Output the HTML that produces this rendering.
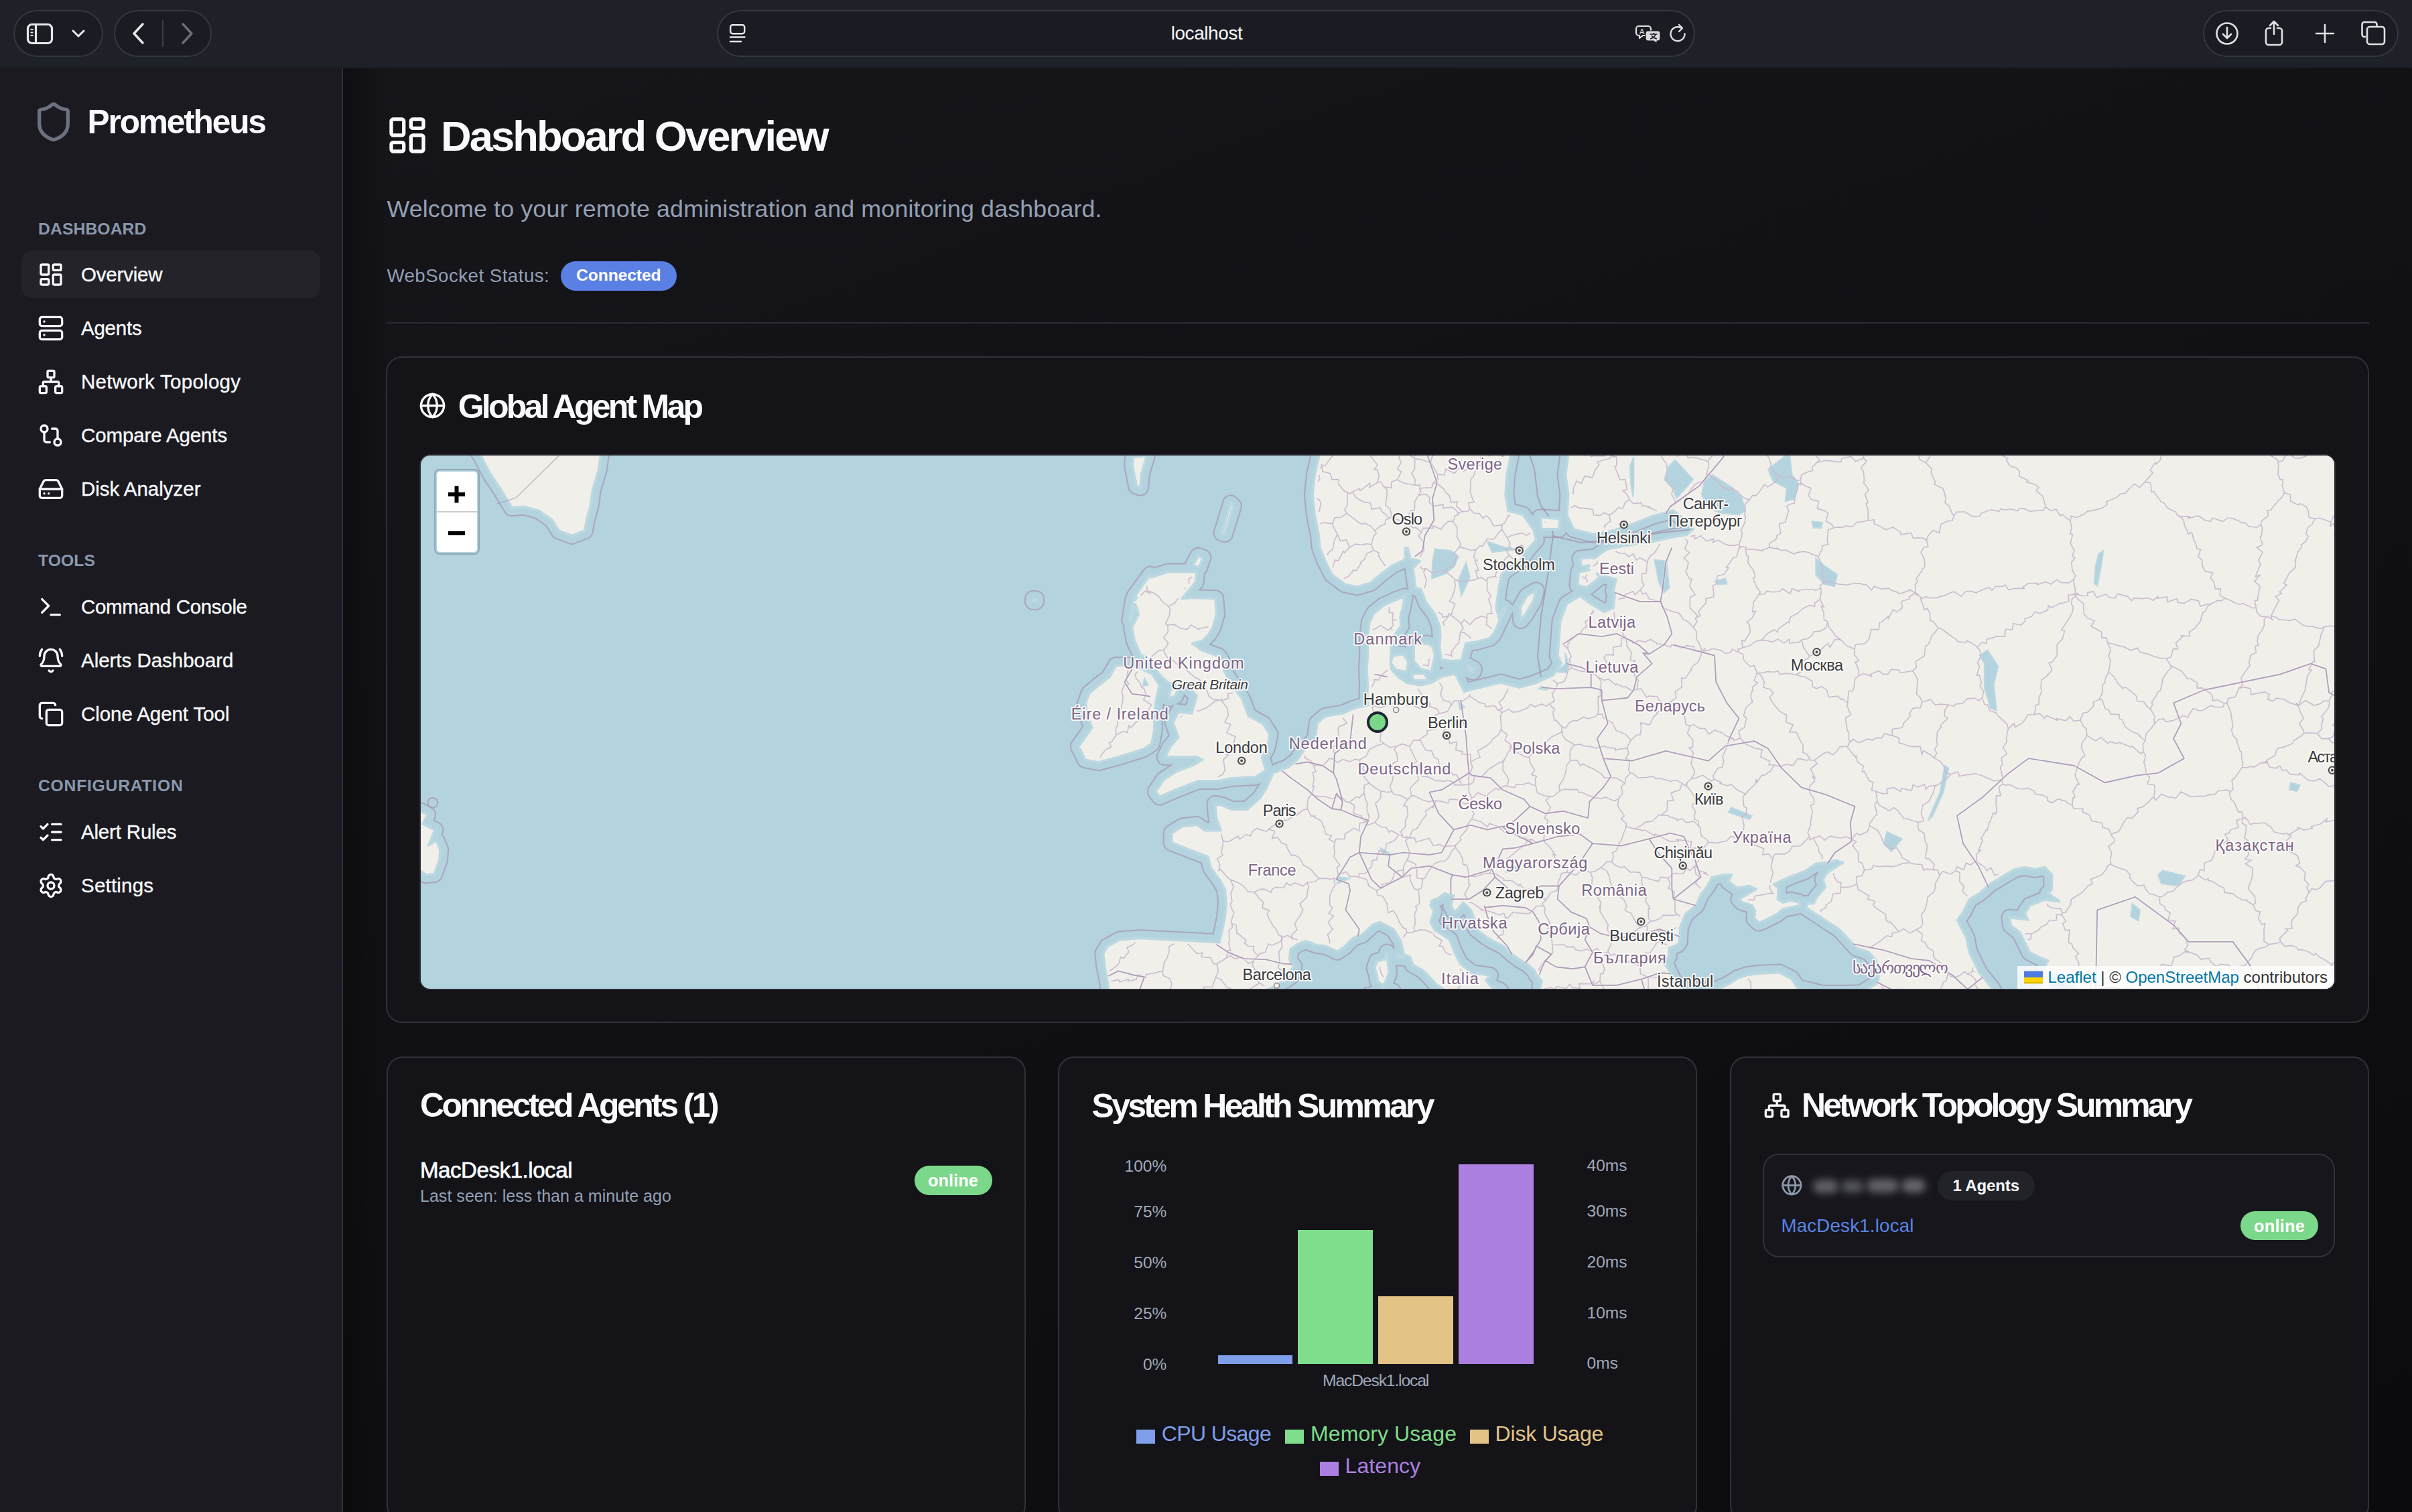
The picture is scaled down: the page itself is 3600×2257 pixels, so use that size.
<!DOCTYPE html>
<html><head><meta charset="utf-8"><title>Prometheus Dashboard</title>
<style>
html,body{margin:0;padding:0;width:3600px;height:2257px;overflow:hidden;background:#0e0e11}
body{position:relative;font-family:"Liberation Sans",sans-serif}
.r,.t,.i{position:absolute}
.t{white-space:nowrap}
</style></head><body>
<div class="r" style="left:0;top:0;width:3600px;height:101px;background:#1f2129"></div>
<div class="r" style="left:20px;top:15px;width:134px;height:70px;border-radius:35.0px;background:#1b1c23;box-shadow:inset 0 0 0 2px #343744"></div>
<div class="r" style="left:170px;top:15px;width:146px;height:70px;border-radius:35.0px;background:#1b1c23;box-shadow:inset 0 0 0 2px #343744"></div>
<div class="r" style="left:1070px;top:15px;width:1460px;height:70px;border-radius:35.0px;background:#1b1c23;box-shadow:inset 0 0 0 2px #343744"></div>
<div class="r" style="left:3288px;top:15px;width:292px;height:70px;border-radius:35.0px;background:#1b1c23;box-shadow:inset 0 0 0 2px #343744"></div>
<svg class="i" style="left:36px;top:31px;width:46px;height:38px" viewBox="0 0 46 38" fill="none" stroke="#e8e8ea" stroke-width="3.2"><rect x="5.5" y="5.5" width="36" height="28" rx="6"/><path d="M17.5 5.5v28"/><path d="M9.5 13h4M9.5 17.5h4M9.5 22h4" stroke-width="2.2"/></svg>
<svg class="i" style="left:104px;top:40px;width:26px;height:20px" viewBox="0 0 26 20" fill="none" stroke="#e8e8ea" stroke-width="3" stroke-linecap="round" stroke-linejoin="round"><path d="M5 6l8 8 8-8"/></svg>
<svg class="i" style="left:193px;top:30px;width:28px;height:40px" viewBox="0 0 28 40" fill="none" stroke="#e8e8ea" stroke-width="3.4" stroke-linecap="round" stroke-linejoin="round"><path d="M20 6L7 20l13 14"/></svg>
<div class="r" style="left:242px;top:30px;width:2px;height:40px;background:#3a3c47"></div>
<svg class="i" style="left:265px;top:30px;width:28px;height:40px" viewBox="0 0 28 40" fill="none" stroke="#6e6f75" stroke-width="3.4" stroke-linecap="round" stroke-linejoin="round"><path d="M8 6l13 14L8 34"/></svg>
<svg class="i" style="left:1086px;top:34px;width:30px;height:32px" viewBox="0 0 30 32" fill="none" stroke="#e8e8ea" stroke-width="2.4" stroke-linecap="round"><rect x="4.2" y="3.2" width="21" height="13" rx="3.2"/><path d="M4 21.5h21.5M4 28h16"/></svg>
<div class="t" style="left:1747.7px;top:36.3px;font-size:28px;line-height:28px;letter-spacing:-0.43px;color:#f5f5f7;font-weight:400;">localhost</div>
<svg class="i" style="left:2438px;top:34px;width:44px;height:34px" viewBox="0 0 44 34" fill="none" stroke="#e0e0e2" stroke-width="2.2" stroke-linejoin="round"><path d="M8 5h14a4 4 0 0 1 4 4v6a4 4 0 0 1-4 4h-8l-5 4v-4H8a4 4 0 0 1-4-4V9a4 4 0 0 1 4-4z"/><text x="9" y="17" font-family="Liberation Sans" font-size="11" fill="#e0e0e2" stroke="none">A</text><path d="M22 12h14a4 4 0 0 1 4 4v7a4 4 0 0 1-4 4h-1v4l-5-4h-8a4 4 0 0 1-4-4v-7a4 4 0 0 1 4-4z" fill="#dcdcde" stroke="#1b1c23" stroke-width="1.2"/><path d="M24.5 17h11M30 15v2M33 17c-1 4-4 6-8 7M27 19c1.5 2.5 4 4 8 5" stroke="#1b1c23" stroke-width="1.6" fill="none"/></svg>
<svg class="i" style="left:2488px;top:34px;width:32px;height:32px" viewBox="0 0 32 32" fill="none" stroke="#e0e0e2" stroke-width="2.4" stroke-linecap="round" stroke-linejoin="round"><path d="M26.5 16.5A10.5 10.5 0 1 1 21 7.5"/><path d="M18 3l5 5-5 5"/></svg>
<svg class="i" style="left:3304px;top:30px;width:40px;height:40px" viewBox="0 0 40 40" fill="none" stroke="#e0e0e2" stroke-width="2.6" stroke-linecap="round" stroke-linejoin="round"><circle cx="20" cy="20" r="15.5"/><path d="M20 11v16M14 21l6 6 6-6"/></svg>
<svg class="i" style="left:3374px;top:27px;width:40px;height:44px" viewBox="0 0 40 44" fill="none" stroke="#e0e0e2" stroke-width="2.6" stroke-linecap="round" stroke-linejoin="round"><path d="M20 5v19M14 11l6-6 6 6"/><path d="M15 15h-3a4 4 0 0 0-4 4v17a4 4 0 0 0 4 4h16a4 4 0 0 0 4-4V19a4 4 0 0 0-4-4h-3"/></svg>
<svg class="i" style="left:3452px;top:32px;width:36px;height:36px" viewBox="0 0 36 36" fill="none" stroke="#e0e0e2" stroke-width="2.6" stroke-linecap="round"><path d="M18 5v26M5 18h26"/></svg>
<svg class="i" style="left:3520px;top:28px;width:44px;height:44px" viewBox="0 0 44 44" fill="none" stroke="#e0e0e2" stroke-width="2.6" stroke-linejoin="round"><path d="M11 27h-2a3.5 3.5 0 0 1-3.5-3.5V8.5A3.5 3.5 0 0 1 9 5h15a3.5 3.5 0 0 1 3.5 3.5V11"/><rect x="13" y="12" width="26" height="26" rx="4"/></svg>
<div class="r" style="left:0;top:101px;width:510px;height:2156px;background:#1b1a20"></div>
<div class="r" style="left:510px;top:101px;width:2px;height:2156px;background:#33333b"></div>
<svg class="i" style="left:48px;top:150px;width:64px;height:64px;" viewBox="0 0 24 24" fill="none" stroke="#6b717e" stroke-width="2.0" stroke-linecap="round" stroke-linejoin="round"><path d="M20 13c0 5-3.5 7.5-7.66 8.95a1 1 0 0 1-.67-.01C7.5 20.5 4 18 4 13V6a1 1 0 0 1 1-1c2 0 4.5-1.2 6.24-2.72a1.17 1.17 0 0 1 1.52 0C14.51 3.81 17 5 19 5a1 1 0 0 1 1 1z"/></svg>
<div class="t" style="left:130.6px;top:158.0px;font-size:49.7px;line-height:49.7px;letter-spacing:-2.20px;color:#f8fafc;font-weight:700;">Prometheus</div>
<div class="r" style="left:32px;top:374px;width:446px;height:71px;border-radius:16px;background:#232329"></div>
<div class="t" style="left:57.0px;top:329.7px;font-size:24.7px;line-height:24.7px;letter-spacing:0.11px;color:#8a98ad;font-weight:700;">DASHBOARD</div>
<svg class="i" style="left:56px;top:390px;width:40px;height:40px;" viewBox="0 0 24 24" fill="none" stroke="#f8fafc" stroke-width="2" stroke-linecap="round" stroke-linejoin="round"><rect width="7" height="9" x="3" y="3" rx="1"/><rect width="7" height="5" x="14" y="3" rx="1"/><rect width="7" height="9" x="14" y="12" rx="1"/><rect width="7" height="5" x="3" y="16" rx="1"/></svg>
<div class="t" style="left:121.0px;top:395.0px;font-size:29.5px;line-height:29.5px;letter-spacing:-0.19px;color:#f8fafc;font-weight:400;-webkit-text-stroke:0.35px #f8fafc">Overview</div>
<svg class="i" style="left:56px;top:470px;width:40px;height:40px;" viewBox="0 0 24 24" fill="none" stroke="#f8fafc" stroke-width="2" stroke-linecap="round" stroke-linejoin="round"><rect width="20" height="8" x="2" y="2" rx="2" ry="2"/><rect width="20" height="8" x="2" y="14" rx="2" ry="2"/><line x1="6" x2="6.01" y1="6" y2="6"/><line x1="6" x2="6.01" y1="18" y2="18"/></svg>
<div class="t" style="left:121.0px;top:475.0px;font-size:29.5px;line-height:29.5px;letter-spacing:-0.24px;color:#f8fafc;font-weight:400;-webkit-text-stroke:0.35px #f8fafc">Agents</div>
<svg class="i" style="left:56px;top:550px;width:40px;height:40px;" viewBox="0 0 24 24" fill="none" stroke="#f8fafc" stroke-width="2" stroke-linecap="round" stroke-linejoin="round"><rect x="16" y="16" width="6" height="6" rx="1"/><rect x="2" y="16" width="6" height="6" rx="1"/><rect x="9" y="2" width="6" height="6" rx="1"/><path d="M5 16v-3a1 1 0 0 1 1-1h12a1 1 0 0 1 1 1v3"/><path d="M12 12V8"/></svg>
<div class="t" style="left:121.0px;top:555.0px;font-size:29.5px;line-height:29.5px;letter-spacing:0.27px;color:#f8fafc;font-weight:400;-webkit-text-stroke:0.35px #f8fafc">Network Topology</div>
<svg class="i" style="left:56px;top:630px;width:40px;height:40px;" viewBox="0 0 24 24" fill="none" stroke="#f8fafc" stroke-width="2" stroke-linecap="round" stroke-linejoin="round"><circle cx="18" cy="18" r="3"/><circle cx="6" cy="6" r="3"/><path d="M13 6h3a2 2 0 0 1 2 2v7"/><path d="M11 18H8a2 2 0 0 1-2-2V9"/></svg>
<div class="t" style="left:121.0px;top:635.0px;font-size:29.5px;line-height:29.5px;letter-spacing:-0.12px;color:#f8fafc;font-weight:400;-webkit-text-stroke:0.35px #f8fafc">Compare Agents</div>
<svg class="i" style="left:56px;top:710px;width:40px;height:40px;" viewBox="0 0 24 24" fill="none" stroke="#f8fafc" stroke-width="2" stroke-linecap="round" stroke-linejoin="round"><line x1="22" x2="2" y1="12" y2="12"/><path d="M5.45 5.11 2 12v6a2 2 0 0 0 2 2h16a2 2 0 0 0 2-2v-6l-3.45-6.89A2 2 0 0 0 16.76 4H7.24a2 2 0 0 0-1.79 1.11z"/><line x1="6" x2="6.01" y1="16" y2="16"/><line x1="10" x2="10.01" y1="16" y2="16"/></svg>
<div class="t" style="left:121.0px;top:715.0px;font-size:29.5px;line-height:29.5px;letter-spacing:-0.02px;color:#f8fafc;font-weight:400;-webkit-text-stroke:0.35px #f8fafc">Disk Analyzer</div>
<svg class="i" style="left:56px;top:886px;width:40px;height:40px;" viewBox="0 0 24 24" fill="none" stroke="#f8fafc" stroke-width="2" stroke-linecap="round" stroke-linejoin="round"><path d="M12 19h8"/><path d="m4 17 6-6-6-6"/></svg>
<div class="t" style="left:121.0px;top:891.0px;font-size:29.5px;line-height:29.5px;letter-spacing:-0.32px;color:#f8fafc;font-weight:400;-webkit-text-stroke:0.35px #f8fafc">Command Console</div>
<svg class="i" style="left:56px;top:966px;width:40px;height:40px;" viewBox="0 0 24 24" fill="none" stroke="#f8fafc" stroke-width="2" stroke-linecap="round" stroke-linejoin="round"><path d="M10.268 21a2 2 0 0 0 3.464 0"/><path d="M22 8c0-2.3-.8-4.3-2-6"/><path d="M3.262 15.326A1 1 0 0 0 4 17h16a1 1 0 0 0 .74-1.673C19.41 13.956 18 12.499 18 8A6 6 0 0 0 6 8c0 4.499-1.411 5.956-2.738 7.326"/><path d="M4 2C2.8 3.7 2 5.7 2 8"/></svg>
<div class="t" style="left:121.0px;top:971.0px;font-size:29.5px;line-height:29.5px;letter-spacing:-0.03px;color:#f8fafc;font-weight:400;-webkit-text-stroke:0.35px #f8fafc">Alerts Dashboard</div>
<svg class="i" style="left:56px;top:1046px;width:40px;height:40px;" viewBox="0 0 24 24" fill="none" stroke="#f8fafc" stroke-width="2" stroke-linecap="round" stroke-linejoin="round"><rect width="14" height="14" x="8" y="8" rx="2" ry="2"/><path d="M4 16c-1.1 0-2-.9-2-2V4c0-1.1.9-2 2-2h10c1.1 0 2 .9 2 2"/></svg>
<div class="t" style="left:121.0px;top:1051.0px;font-size:29.5px;line-height:29.5px;letter-spacing:-0.07px;color:#f8fafc;font-weight:400;-webkit-text-stroke:0.35px #f8fafc">Clone Agent Tool</div>
<svg class="i" style="left:56px;top:1222px;width:40px;height:40px;" viewBox="0 0 24 24" fill="none" stroke="#f8fafc" stroke-width="2" stroke-linecap="round" stroke-linejoin="round"><path d="M13 5h8"/><path d="M13 12h8"/><path d="M13 19h8"/><path d="m3 17 2 2 4-4"/><path d="m3 7 2 2 4-4"/></svg>
<div class="t" style="left:121.0px;top:1227.0px;font-size:29.5px;line-height:29.5px;letter-spacing:-0.18px;color:#f8fafc;font-weight:400;-webkit-text-stroke:0.35px #f8fafc">Alert Rules</div>
<svg class="i" style="left:56px;top:1302px;width:40px;height:40px;" viewBox="0 0 24 24" fill="none" stroke="#f8fafc" stroke-width="2" stroke-linecap="round" stroke-linejoin="round"><path d="M9.671 4.136a2.34 2.34 0 0 1 4.659 0 2.34 2.34 0 0 0 3.319 1.915 2.34 2.34 0 0 1 2.33 4.033 2.34 2.34 0 0 0 0 3.831 2.34 2.34 0 0 1-2.33 4.033 2.34 2.34 0 0 0-3.319 1.915 2.34 2.34 0 0 1-4.659 0 2.34 2.34 0 0 0-3.32-1.915 2.34 2.34 0 0 1-2.33-4.033 2.34 2.34 0 0 0 0-3.831A2.34 2.34 0 0 1 6.35 6.051a2.34 2.34 0 0 0 3.319-1.915"/><circle cx="12" cy="12" r="3"/></svg>
<div class="t" style="left:121.0px;top:1307.0px;font-size:29.5px;line-height:29.5px;letter-spacing:0.21px;color:#f8fafc;font-weight:400;-webkit-text-stroke:0.35px #f8fafc">Settings</div>
<div class="t" style="left:57.0px;top:825.1px;font-size:24.7px;line-height:24.7px;letter-spacing:0.10px;color:#8a98ad;font-weight:700;">TOOLS</div>
<div class="t" style="left:57.0px;top:1161.3px;font-size:24.7px;line-height:24.7px;letter-spacing:0.76px;color:#8a98ad;font-weight:700;">CONFIGURATION</div>
<div class="r" style="left:512px;top:101px;width:3088px;height:2156px;background:linear-gradient(160deg,#15151a 0%,#111115 45%,#0b0b0d 100%)"></div>
<div class="r" style="left:512px;top:101px;width:70px;height:2156px;background:linear-gradient(90deg,rgba(0,0,0,0.28),rgba(0,0,0,0))"></div>
<div class="r" style="left:0;top:100px;width:3600px;height:2px;background:#1c1c1d"></div>
<svg class="i" style="left:575.7px;top:170.1px;width:64px;height:64px;" viewBox="0 0 24 24" fill="none" stroke="#f8fafc" stroke-width="2" stroke-linecap="round" stroke-linejoin="round"><rect width="7" height="9" x="3" y="3" rx="1"/><rect width="7" height="5" x="14" y="3" rx="1"/><rect width="7" height="9" x="14" y="12" rx="1"/><rect width="7" height="5" x="3" y="16" rx="1"/></svg>
<div class="t" style="left:658.0px;top:171.5px;font-size:63.2px;line-height:63.2px;letter-spacing:-2.88px;color:#f8fafc;font-weight:700;">Dashboard Overview</div>
<div class="t" style="left:577.4px;top:295.4px;font-size:35.8px;line-height:35.8px;letter-spacing:0.15px;color:#94a0b4;font-weight:400;">Welcome to your remote administration and monitoring dashboard.</div>
<div class="t" style="left:577.4px;top:398.1px;font-size:27.6px;line-height:27.6px;letter-spacing:0.51px;color:#94a0b4;font-weight:400;">WebSocket Status:</div>
<div class="r" style="left:837px;top:390px;width:173px;height:44px;border-radius:22px;background:#5a80e4"></div>
<div class="t" style="left:860.0px;top:399.1px;font-size:24.7px;line-height:24.7px;letter-spacing:-0.12px;color:#ffffff;font-weight:700;">Connected</div>
<div class="r" style="left:577px;top:481px;width:2959px;height:2px;background:#2a2b32"></div>
<div class="r" style="left:576px;top:532px;width:2960px;height:995px;border-radius:24px;background:#131318;box-shadow:inset 0 0 0 2px #30313a"></div>
<svg class="i" style="left:625.3px;top:585.3px;width:41px;height:41px;" viewBox="0 0 24 24" fill="none" stroke="#f8fafc" stroke-width="2" stroke-linecap="round" stroke-linejoin="round"><circle cx="12" cy="12" r="10"/><path d="M12 2a14.5 14.5 0 0 0 0 20 14.5 14.5 0 0 0 0-20"/><path d="M2 12h20"/></svg>
<div class="t" style="left:683.7px;top:582.1px;font-size:50.0px;line-height:50.0px;letter-spacing:-3.79px;color:#f8fafc;font-weight:700;">Global Agent Map</div>
<div class="r" style="left:626px;top:678px;width:2860px;height:800px;border-radius:16px;overflow:hidden;background:#2a2b31"><div style="position:absolute;left:2px;top:2px;width:2856px;height:796px;overflow:hidden;border-radius:14px;background:#b3d3de"><svg style="position:absolute;left:0;top:0;width:2856px;height:796px" viewBox="628 680 2856 796"><path fill="none" stroke="#a48fae" stroke-width="2" stroke-opacity="0.65" d="M1608.4 1046.6L1607.9 1048.7L1607.7 1050.9L1607.9 1053.1L1611.9 1073.0L1612.4 1074.8L1616.1 1084.7L1600.0 1107.3L1598.9 1109.2L1598.2 1111.2L1597.8 1113.3L1597.8 1115.5L1598.2 1117.6L1599.0 1119.7L1608.9 1139.5L1610.1 1141.3L1611.6 1143.0L1613.3 1144.3L1615.2 1145.3L1617.3 1145.9L1637.2 1149.9L1639.9 1150.1L1642.6 1149.7L1672.4 1141.8L1672.9 1141.6L1710.6 1129.7L1713.6 1128.2L1725.5 1120.3L1727.4 1118.8L1728.9 1117.0L1730.0 1114.9L1730.7 1112.7L1734.6 1092.8L1734.9 1090.5L1734.9 1063.7L1736.8 1051.9L1738.2 1053.0L1740.2 1054.0L1742.4 1054.6L1744.7 1054.9L1747.0 1054.6L1749.1 1054.0L1751.6 1053.0L1750.8 1053.6L1749.1 1055.3L1747.8 1057.3L1739.9 1073.2L1739.0 1075.5L1738.7 1077.9L1738.8 1080.3L1739.4 1082.7L1744.9 1097.9L1737.6 1106.5L1735.9 1108.9L1728.0 1124.8L1727.1 1127.1L1726.7 1129.5L1726.9 1131.9L1727.5 1134.3L1728.5 1136.5L1730.0 1138.4L1731.9 1140.0L1734.0 1141.2L1736.3 1141.9L1738.7 1142.2L1747.7 1142.2L1730.1 1153.9L1728.3 1155.4L1726.8 1157.2L1714.9 1175.1L1713.7 1177.3L1713.0 1179.6L1712.8 1182.1L1713.2 1184.5L1714.0 1186.8L1715.2 1188.9L1721.2 1196.9L1722.7 1198.6L1724.6 1200.0L1726.7 1201.0L1728.9 1201.5L1731.2 1201.7L1733.5 1201.4L1735.7 1200.6L1753.3 1192.8L1772.9 1185.0L1790.6 1177.9L1818.1 1177.9L1820.4 1177.6L1839.5 1173.8L1874.3 1171.9L1876.3 1171.6L1878.2 1171.0L1879.4 1170.4L1879.1 1171.0L1871.1 1183.5L1856.9 1196.1L1841.0 1196.1L1828.6 1190.8L1826.2 1190.0L1815.8 1187.9L1813.3 1187.7L1810.9 1188.0L1808.5 1188.8L1806.4 1190.0L1804.5 1191.6L1803.1 1193.6L1802.0 1195.9L1801.5 1198.3L1801.5 1200.8L1803.6 1223.8L1804.3 1226.9L1804.5 1227.4L1802.4 1227.4L1792.9 1221.1L1791.1 1220.1L1789.2 1219.4L1787.1 1219.1L1785.1 1219.1L1764.2 1221.2L1761.5 1221.8L1759.0 1223.0L1742.3 1233.4L1740.4 1234.9L1738.8 1236.7L1737.6 1238.9L1736.9 1241.2L1736.7 1243.6L1736.7 1258.2L1736.9 1260.6L1737.6 1262.9L1738.8 1265.0L1740.4 1266.9L1742.3 1268.4L1744.4 1269.4L1761.0 1275.7L1781.8 1284.0L1782.0 1284.1L1792.9 1288.1L1795.5 1298.7L1796.3 1301.0L1797.6 1303.0L1809.6 1319.1L1816.4 1330.9L1818.1 1348.0L1816.2 1367.2L1812.2 1387.2L1810.5 1394.0L1787.0 1392.5L1786.9 1392.5L1703.3 1388.3L1701.9 1388.3L1670.5 1390.4L1667.9 1390.9L1665.5 1391.9L1646.7 1402.3L1645.0 1403.5L1643.5 1405.0L1642.2 1406.6L1636.0 1417.1L1634.9 1419.5L1634.3 1422.0L1634.3 1424.6L1636.4 1443.4L1636.6 1444.4L1640.7 1464.9L1644.7 1494.9L1638.4 1688.0L412.0 1688.0L412.0 380.0L411.8 377.7L411.1 375.4L410.0 373.3L408.5 371.5L406.7 370.0L404.6 368.9L402.3 368.2L400.0 368.0L328.0 368.0L325.7 368.2L323.4 368.9L321.3 370.0L319.5 371.5L318.0 373.3L316.9 375.4L316.2 377.7L316.0 380.0L316.0 1776.0L316.2 1778.3L316.9 1780.6L318.0 1782.7L319.5 1784.5L321.3 1786.0L323.4 1787.1L325.7 1787.8L328.0 1788.0L3784.0 1788.0L3786.3 1787.8L3788.6 1787.1L3790.7 1786.0L3792.5 1784.5L3794.0 1782.7L3795.1 1780.6L3795.8 1778.3L3796.0 1776.0L3796.0 380.0L3795.8 377.7L3795.1 375.4L3794.0 373.3L3792.5 371.5L3790.7 370.0L3788.6 368.9L3786.3 368.2L3784.0 368.0L2340.5 368.0L2338.1 368.2L2335.9 368.9L2333.8 370.0L2332.0 371.5L2330.5 373.3L2329.4 375.4L2328.7 377.7L2328.5 380.0L2328.5 678.2L2324.6 707.2L2324.6 710.3L2328.4 738.9L2326.9 762.1L2299.6 760.3L2297.3 760.4L2295.0 760.9L2292.9 761.8L2291.0 763.2L2289.4 764.8L2288.1 766.8L2287.6 768.0L2282.7 761.2L2280.9 759.2L2278.7 757.7L2276.2 756.7L2261.8 752.8L2259.3 737.9L2261.1 710.3L2266.9 681.4L2267.2 679.0L2267.2 380.0L2266.9 377.7L2266.2 375.4L2265.1 373.3L2263.6 371.5L2261.8 370.0L2259.8 368.9L2257.5 368.2L2255.2 368.0L1968.8 368.0L1966.5 368.2L1964.3 368.9L1962.2 370.0L1960.4 371.5L1958.9 373.3L1957.8 375.4L1957.1 377.7L1956.8 380.0L1956.8 677.6L1950.2 706.0L1950.0 707.6L1947.0 737.3L1947.0 739.7L1950.0 769.5L1950.1 770.6L1956.0 799.8L1957.9 819.1L1958.7 822.3L1966.6 842.2L1967.0 843.1L1977.0 862.9L1978.5 865.3L1980.5 867.2L2000.3 882.1L2002.5 883.4L2004.9 884.2L2022.8 888.1L2024.8 888.4L2026.9 888.3L2028.8 887.9L2048.7 882.0L2050.9 881.0L2052.9 879.7L2070.5 865.0L2085.1 854.1L2096.8 848.9L2096.8 849.2L2100.8 879.0L2100.9 879.2L2099.3 878.7L2097.1 878.4L2094.8 878.6L2092.6 879.1L2078.1 884.4L2077.1 884.8L2060.0 892.8L2057.4 894.4L2042.8 906.3L2041.1 908.1L2039.7 910.2L2033.1 923.4L2032.3 925.4L2031.9 927.5L2029.2 951.3L2029.2 952.6L2029.2 978.7L2027.9 998.1L2027.9 999.5L2029.1 1025.1L2028.4 1033.5L2028.3 1035.6L2028.9 1042.9L2024.5 1043.8L2023.1 1044.1L2014.1 1047.1L2013.0 1047.5L2001.0 1052.9L1975.6 1057.1L1973.5 1057.7L1971.5 1058.6L1969.7 1059.9L1957.8 1070.4L1956.3 1072.0L1955.1 1073.8L1954.2 1075.8L1953.8 1077.9L1951.3 1097.7L1936.3 1112.7L1934.8 1114.5L1926.9 1126.4L1916.4 1134.6L1899.4 1141.3L1896.5 1131.6L1901.9 1122.2L1902.7 1120.5L1903.3 1118.6L1907.2 1098.8L1907.5 1096.5L1907.3 1094.3L1906.7 1092.1L1905.7 1090.1L1895.7 1074.2L1894.5 1072.6L1893.0 1071.2L1891.3 1070.0L1873.3 1060.2L1865.0 1038.5L1863.6 1035.9L1853.9 1022.3L1839.1 998.2L1833.6 979.9L1832.5 977.4L1830.9 975.2L1826.9 970.9L1825.5 969.6L1823.9 968.5L1822.1 967.7L1806.0 962.0L1812.7 955.3L1814.5 953.0L1820.4 943.1L1821.7 940.4L1827.6 920.5L1828.0 918.3L1828.1 916.1L1826.1 892.3L1825.6 889.8L1824.7 887.5L1823.2 885.5L1821.4 883.8L1819.3 882.5L1816.9 881.6L1814.5 881.3L1790.7 880.6L1793.6 877.2L1794.9 875.3L1795.8 873.2L1796.3 871.0L1798.2 855.7L1799.5 854.4L1800.8 852.6L1801.7 850.5L1806.6 836.1L1807.2 833.8L1807.3 831.4L1806.9 829.1L1806.1 826.9L1804.8 824.9L1803.2 823.2L1801.3 821.8L1799.2 820.8L1792.2 818.4L1789.9 817.9L1787.5 817.8L1785.2 818.2L1782.9 819.1L1780.9 820.4L1779.2 822.0L1777.8 824.0L1769.9 838.3L1768.9 840.5L1768.7 841.6L1742.7 841.6L1740.8 841.8L1738.9 842.2L1723.3 847.4L1721.6 846.5L1719.4 845.8L1717.1 845.6L1714.8 845.8L1712.6 846.4L1710.6 847.4L1708.7 848.8L1707.2 850.5L1683.8 882.6L1682.6 884.7L1681.8 886.9L1681.8 887.4L1681.3 887.9L1680.3 890.1L1679.7 892.3L1674.5 923.9L1674.4 926.2L1674.7 928.6L1675.4 930.8L1676.6 932.8L1677.5 933.9L1677.5 934.0L1677.1 936.7L1677.4 939.3L1681.3 959.1L1682.1 961.7L1690.9 981.3L1665.3 981.3L1662.8 981.5L1660.4 982.3L1658.2 983.6L1656.3 985.3L1654.8 987.4L1646.1 1003.0L1632.3 1013.4L1631.7 1013.9L1617.8 1025.8L1616.4 1027.2L1615.3 1028.9L1614.4 1030.7L1608.4 1046.6ZM1757.1 1050.8L1759.1 1050.0L1761.4 1048.8L1763.3 1047.1L1764.9 1045.0L1766.0 1042.7L1767.7 1037.7L1768.3 1037.8L1772.8 1042.3L1769.8 1051.8L1759.8 1050.8L1757.4 1050.8L1757.1 1050.8ZM2337.5 795.0L2337.5 795.1L2338.8 797.3L2340.7 799.3L2342.9 800.7L2345.3 801.7L2375.1 809.6L2377.8 810.0L2380.5 809.8L2410.3 803.9L2411.7 803.5L2441.5 793.6L2442.2 793.3L2471.2 781.7L2494.5 775.5L2508.6 786.8L2509.0 787.2L2491.3 790.2L2490.6 790.3L2465.2 796.2L2426.0 802.1L2425.4 802.2L2395.7 808.1L2393.3 808.8L2391.1 810.0L2377.1 819.8L2377.0 819.8L2357.1 821.8L2354.7 822.3L2352.5 823.3L2350.5 824.7L2348.8 826.5L2347.5 828.6L2346.7 830.9L2346.3 833.3L2346.5 835.7L2348.0 845.0L2346.8 846.3L2345.6 848.2L2344.8 850.2L2344.4 852.4L2342.4 872.3L2342.4 874.6L2342.9 877.0L2343.8 879.2L2345.2 881.1L2346.5 882.4L2332.3 890.9L2330.2 892.5L2328.5 894.6L2327.3 896.9L2317.4 922.7L2316.6 926.1L2312.6 978.1L2312.7 980.2L2313.1 982.3L2313.8 984.3L2316.2 989.1L2310.0 998.4L2286.0 1008.6L2267.9 1013.6L2243.0 1007.1L2240.1 1006.8L2237.3 1007.1L2209.1 1013.7L2208.9 1013.7L2191.8 1018.0L2189.5 1013.4L2188.7 1011.8L2194.1 1014.0L2196.5 1014.7L2198.9 1014.9L2201.3 1014.6L2203.6 1013.8L2205.7 1012.5L2207.5 1010.9L2209.0 1008.9L2210.0 1006.7L2211.3 1002.7L2211.8 1000.4L2211.9 998.1L2211.5 995.7L2210.7 993.5L2209.4 991.6L2207.8 989.8L2205.9 988.5L2196.6 983.2L2194.7 982.3L2197.6 971.2L2207.0 969.8L2208.5 969.4L2227.0 964.1L2229.4 963.2L2231.6 961.7L2233.3 959.8L2234.7 958.0L2236.2 957.0L2237.9 955.2L2239.2 953.1L2240.7 950.0L2241.3 949.2L2242.7 946.6L2245.3 940.5L2257.3 915.9L2258.1 926.9L2258.5 929.3L2259.4 931.5L2260.7 933.5L2262.4 935.2L2264.3 936.6L2266.6 937.5L2268.9 938.0L2271.3 938.0L2273.7 937.5L2275.9 936.5L2277.9 935.1L2279.5 933.4L2286.5 924.5L2287.3 923.3L2299.2 903.4L2300.0 901.8L2300.5 900.2L2304.5 884.3L2304.8 882.0L2304.7 879.7L2304.2 877.4L2303.2 875.3L2301.8 873.4L2300.1 871.8L2298.1 870.6L2295.9 869.8L2293.6 869.4L2291.3 869.5L2289.0 870.0L2286.9 871.0L2273.0 878.9L2271.3 880.1L2269.8 881.6L2268.6 883.3L2258.3 901.2L2257.5 903.0L2257.3 902.6L2255.7 900.7L2253.7 898.7L2252.0 897.3L2250.0 896.2L2247.9 895.5L2247.0 895.4L2249.1 879.4L2252.3 863.5L2256.6 859.2L2275.2 848.0L2277.5 846.3L2279.2 844.1L2288.6 829.0L2301.9 813.9L2303.2 812.0L2304.2 809.9L2304.7 807.7L2304.8 805.4L2304.5 803.1L2304.3 802.1L2326.6 802.1L2329.0 801.9L2331.4 801.1L2333.6 799.9L2335.4 798.2L2336.9 796.3L2337.5 795.0ZM2153.5 997.0L2149.9 997.7L2149.8 997.7L2150.1 996.4L2153.5 997.0ZM2137.6 950.4L2135.5 949.4L2133.0 948.7L2130.4 948.6L2109.2 949.9L2107.0 950.2L2104.9 951.0L2102.9 952.2L2101.2 953.6L2099.8 955.4L2098.8 957.4L2098.2 959.6L2098.0 961.9L2098.0 965.1L2096.5 964.7L2094.3 964.4L2092.1 964.6L2089.7 965.0L2094.3 950.2L2101.0 941.3L2102.2 939.4L2103.0 937.3L2103.4 935.1L2103.4 932.9L2102.3 921.9L2105.7 909.5L2105.9 908.3L2108.6 892.4L2108.7 890.1L2108.5 888.6L2109.1 888.9L2111.5 889.6L2117.3 904.1L2119.0 907.0L2131.1 922.8L2136.5 936.8L2137.6 950.0L2137.6 950.4ZM2375.3 887.1L2375.8 886.8L2394.0 872.2L2397.6 873.4L2396.3 878.5L2396.0 880.7L2396.0 883.0L2396.6 885.2L2397.7 888.7L2396.7 898.9L2395.0 899.7L2380.9 891.3L2375.3 887.1ZM3072.2 1467.3L3082.1 1472.6L3079.0 1473.1L3072.2 1467.6L3072.2 1467.3ZM2951.1 1418.0L2947.0 1397.1L2945.8 1393.9L2935.7 1374.8L2940.7 1367.3L2941.5 1366.0L2948.9 1351.2L2960.8 1344.0L2962.7 1342.6L2976.7 1329.9L2998.2 1317.1L3011.3 1309.2L3021.9 1307.1L3034.5 1309.6L3036.8 1309.8L3039.2 1309.6L3047.8 1307.9L3050.3 1310.3L3050.3 1322.8L3047.8 1325.2L3046.3 1327.0L3045.2 1329.1L3044.5 1331.4L3044.4 1332.7L3024.9 1340.5L3022.7 1341.7L3020.8 1343.3L3019.2 1345.3L3011.7 1357.2L3011.0 1358.8L3000.8 1357.7L2998.4 1357.6L2996.0 1358.1L2993.8 1359.0L2991.8 1360.3L2990.1 1362.1L2988.8 1364.1L2987.9 1366.3L2987.5 1368.7L2987.6 1371.1L2989.1 1383.0L2989.6 1385.3L2990.5 1387.5L2991.9 1389.4L2993.6 1391.0L3004.9 1399.8L3011.2 1412.3L3018.6 1427.3L3020.0 1429.4L3021.8 1431.2L3024.0 1432.6L3039.0 1440.1L3040.1 1440.6L3040.4 1440.7L3037.7 1447.2L3037.0 1449.6L3032.5 1473.8L3032.3 1476.0L3032.3 1492.1L2992.9 1492.1L2985.3 1471.8L2984.5 1470.1L2983.4 1468.5L2964.8 1445.3L2951.1 1418.0ZM2498.6 1436.9L2499.3 1436.2L2500.7 1434.4L2501.8 1432.5L2502.5 1430.4L2502.8 1428.2L2502.9 1423.6L2508.2 1421.5L2510.3 1420.4L2512.2 1418.9L2513.7 1417.0L2516.7 1412.6L2517.7 1410.7L2518.4 1408.7L2518.7 1406.6L2519.7 1387.4L2525.8 1372.0L2539.3 1361.2L2540.7 1359.8L2541.9 1358.2L2542.8 1356.5L2549.0 1341.7L2558.3 1329.9L2559.5 1328.0L2563.3 1320.5L2568.1 1319.4L2568.3 1320.1L2569.3 1322.2L2570.7 1324.1L2572.5 1325.7L2585.7 1335.2L2584.7 1336.9L2583.8 1339.1L2583.5 1341.5L2583.6 1343.9L2584.2 1346.2L2585.2 1348.4L2586.7 1350.3L2591.2 1355.2L2592.8 1356.5L2594.5 1357.6L2596.4 1358.4L2606.8 1361.7L2607.1 1362.2L2606.3 1369.9L2606.3 1372.1L2606.6 1374.3L2607.4 1376.3L2608.6 1378.2L2610.0 1379.9L2616.8 1386.2L2618.6 1387.6L2620.6 1388.6L2622.7 1389.2L2624.9 1389.5L2627.1 1389.3L2629.3 1388.7L2637.7 1385.5L2638.9 1385.0L2657.8 1375.4L2660.1 1373.8L2666.5 1368.4L2687.5 1363.9L2688.9 1365.0L2698.4 1371.4L2698.9 1371.7L2709.1 1378.0L2725.2 1389.0L2725.7 1389.3L2737.2 1396.3L2750.8 1411.4L2750.9 1411.5L2761.8 1423.4L2763.3 1424.8L2765.0 1425.9L2766.8 1426.7L2782.1 1431.9L2789.5 1439.9L2792.0 1449.1L2791.4 1459.7L2774.0 1470.3L2759.1 1470.8L2720.0 1470.8L2707.4 1467.3L2707.0 1467.2L2690.0 1463.2L2684.0 1454.0L2682.7 1452.4L2681.1 1451.0L2679.4 1449.9L2661.2 1440.8L2659.2 1440.0L2657.2 1439.6L2655.2 1439.5L2623.5 1441.0L2622.4 1441.1L2605.2 1443.6L2603.0 1444.1L2589.4 1448.7L2586.5 1450.1L2573.8 1458.6L2552.6 1467.5L2530.6 1465.4L2530.1 1465.4L2521.9 1464.9L2521.0 1464.4L2508.9 1458.7L2503.9 1448.3L2499.4 1438.3L2498.6 1436.9ZM2693.2 1337.5L2693.0 1337.3L2690.9 1336.1L2688.7 1335.3L2675.7 1332.1L2673.7 1331.8L2671.6 1331.8L2669.5 1332.2L2666.1 1333.2L2666.6 1326.6L2666.5 1324.6L2675.2 1320.4L2697.4 1312.3L2700.1 1311.0L2713.0 1302.1L2710.4 1306.3L2709.3 1308.6L2708.7 1311.1L2708.6 1313.6L2709.1 1316.1L2710.7 1321.3L2702.4 1331.1L2700.6 1333.8L2699.3 1336.6L2697.9 1336.6L2695.4 1336.8L2693.2 1337.5ZM2149.8 1352.3L2151.4 1351.7L2153.5 1350.6L2153.4 1351.0L2153.5 1353.2L2153.9 1355.4L2154.8 1357.5L2160.5 1368.1L2161.8 1370.0L2163.4 1371.7L2165.3 1373.0L2167.4 1373.9L2169.7 1374.4L2172.0 1374.4L2174.3 1374.0L2176.4 1373.2L2178.4 1372.0L2180.1 1370.4L2184.8 1365.1L2184.9 1365.2L2189.9 1377.1L2190.5 1387.0L2190.9 1389.5L2191.8 1391.8L2193.2 1393.9L2194.9 1395.7L2210.2 1408.0L2211.6 1409.0L2223.9 1416.3L2224.9 1416.8L2236.5 1422.3L2248.4 1433.0L2249.2 1433.6L2260.3 1442.0L2261.5 1442.8L2272.1 1448.9L2280.5 1456.5L2281.7 1459.4L2283.5 1462.4L2287.6 1467.4L2286.9 1470.0L2286.5 1472.8L2285.7 1500.7L2262.0 1500.7L2250.8 1474.5L2249.8 1472.5L2248.4 1470.8L2246.7 1469.3L2244.7 1468.2L2233.7 1463.3L2233.7 1463.3L2234.8 1461.5L2235.6 1459.4L2236.0 1457.2L2236.0 1455.0L2235.6 1452.8L2234.8 1450.7L2233.6 1448.7L2232.0 1447.1L2230.2 1445.8L2228.2 1444.8L2226.0 1444.2L2212.8 1442.1L2212.2 1442.0L2202.0 1440.9L2189.0 1430.5L2182.0 1416.7L2174.7 1397.8L2173.6 1395.6L2172.0 1393.6L2170.0 1392.1L2150.9 1379.8L2148.3 1375.3L2151.9 1363.3L2152.3 1360.9L2152.3 1358.5L2151.7 1356.1L2150.7 1353.9L2149.8 1352.3ZM1898.2 1487.6L1899.5 1487.1L1910.4 1482.3L1912.8 1480.8L1917.9 1476.9L1925.2 1473.1L1926.7 1472.2L1934.2 1466.7L1935.9 1465.2L1937.3 1463.4L1938.3 1461.4L1938.9 1459.2L1939.1 1457.0L1939.1 1452.5L1941.3 1449.5L1942.4 1447.6L1943.1 1445.5L1943.4 1443.3L1943.4 1441.1L1942.9 1438.9L1942.0 1436.9L1940.8 1435.0L1937.3 1430.8L1937.0 1429.8L1937.7 1423.7L1943.3 1419.8L1949.1 1417.8L1961.6 1422.5L1964.9 1423.2L1974.9 1424.0L1985.5 1429.2L1990.5 1431.7L1992.9 1432.6L1995.4 1432.9L1997.9 1432.7L2000.4 1432.0L2002.6 1430.8L2014.0 1423.0L2016.1 1421.2L2023.3 1413.2L2027.0 1410.4L2036.7 1407.3L2039.1 1406.2L2041.2 1404.5L2055.4 1391.0L2058.4 1389.9L2071.0 1396.2L2079.0 1409.0L2080.5 1415.4L2079.6 1414.1L2078.0 1412.3L2076.0 1411.0L2073.8 1410.1L2071.4 1409.6L2069.0 1409.6L2066.7 1410.1L2064.5 1411.0L2062.5 1412.4L2060.8 1414.1L2059.5 1416.1L2058.7 1418.4L2057.8 1421.7L2051.9 1423.3L2049.7 1424.1L2047.7 1425.4L2046.0 1426.9L2044.6 1428.8L2043.7 1431.0L2040.3 1440.8L2039.7 1443.2L2039.6 1445.7L2040.1 1448.1L2042.8 1457.5L2044.3 1466.6L2044.8 1468.6L2045.7 1470.6L2046.9 1472.3L2047.1 1472.5L2039.9 1474.1L2037.7 1474.8L2035.7 1475.9L2033.9 1477.4L2032.5 1479.2L2031.4 1481.3L2030.7 1483.5L2030.5 1485.8L2030.5 1497.8L2030.7 1500.2L2030.9 1500.7L1882.6 1500.7L1885.2 1495.7L1890.0 1490.2L1898.2 1487.6ZM2080.4 1467.6L2084.5 1456.6L2085.1 1453.9L2085.1 1451.2L2084.1 1441.1L2084.8 1441.3L2092.8 1441.9L2095.2 1441.8L2096.4 1441.6L2097.0 1443.7L2097.9 1445.8L2099.1 1447.6L2100.7 1449.2L2102.5 1450.5L2116.9 1458.9L2126.6 1468.9L2134.2 1477.2L2136.3 1479.1L2144.9 1484.9L2159.0 1500.7L2090.5 1500.7L2090.7 1500.2L2090.9 1497.8L2090.9 1479.8L2090.7 1477.3L2089.9 1475.0L2088.7 1472.9L2087.1 1471.0L2085.1 1469.5L2082.9 1468.5L2080.4 1467.6ZM1812.2 792.2L1811.7 794.5L1811.7 796.8L1812.2 799.1L1813.0 801.3L1814.3 803.2L1816.0 804.9L1817.9 806.2L1820.0 807.1L1824.4 808.5L1826.7 809.0L1829.1 809.0L1831.4 808.6L1833.6 807.7L1835.5 806.4L1837.2 804.7L1838.6 802.8L1839.5 800.6L1852.4 758.9L1852.8 756.8L1852.9 754.6L1852.6 752.5L1851.9 750.5L1850.8 748.6L1849.4 746.9L1845.4 742.9L1843.7 741.5L1841.7 740.4L1839.6 739.7L1837.4 739.4L1835.1 739.6L1832.9 740.1L1830.9 741.1L1829.1 742.4L1827.5 744.0L1826.3 745.9L1825.5 748.0L1812.2 792.2ZM1715.8 709.1L1723.5 683.4L1723.9 681.1L1723.9 678.8L1723.4 676.5L1722.5 674.3L1721.2 672.4L1719.6 670.7L1717.6 669.4L1715.4 668.5L1713.1 668.1L1710.8 668.0L1690.0 670.0L1687.6 670.5L1685.4 671.4L1683.4 672.8L1681.8 674.5L1680.4 676.5L1679.6 678.7L1679.1 681.1L1678.2 694.0L1678.3 697.2L1684.3 727.9L1685.0 730.3L1686.3 732.5L1687.9 734.4L1690.0 736.0L1692.3 737.0L1698.2 739.0L1700.6 739.5L1703.0 739.6L1705.3 739.2L1707.5 738.3L1709.5 737.0L1711.2 735.3L1712.6 733.3L1713.5 731.1L1714.0 728.7L1715.8 709.1ZM1530.0 898.0L1530.2 900.3L1530.9 902.6L1532.0 904.7L1533.5 906.5L1535.3 908.0L1537.4 909.1L1539.7 909.8L1542.0 910.0L1546.0 910.0L1548.3 909.8L1550.6 909.1L1552.7 908.0L1554.5 906.5L1556.0 904.7L1557.1 902.6L1557.8 900.3L1558.0 898.0L1558.0 894.0L1557.8 891.7L1557.1 889.4L1556.0 887.3L1554.5 885.5L1552.7 884.0L1550.6 882.9L1548.3 882.2L1546.0 882.0L1542.0 882.0L1539.7 882.2L1537.4 882.9L1535.3 884.0L1533.5 885.5L1532.0 887.3L1530.9 889.4L1530.2 891.7L1530.0 894.0L1530.0 898.0ZM753.6 764.3L754.9 766.1L756.5 767.6L758.4 768.8L760.5 769.6L762.7 770.0L764.9 770.1L780.7 768.7L799.1 773.6L814.8 784.5L823.9 798.9L825.5 800.9L827.5 802.5L829.7 803.6L849.1 811.1L851.2 811.7L853.4 811.9L855.6 811.7L857.7 811.1L877.1 803.6L879.3 802.5L881.2 801.0L882.8 799.1L884.0 796.9L884.6 794.6L887.5 778.6L893.4 756.7L893.7 755.2L896.5 733.8L905.2 704.8L905.6 703.1L908.4 683.3L909.6 679.8L910.1 677.6L910.2 675.3L909.8 673.1L909.1 671.0L907.9 669.0L906.5 667.3L904.7 665.9L902.6 664.9L900.5 664.2L898.2 664.0L714.6 664.0L712.3 664.2L710.0 664.9L708.0 666.0L706.1 667.5L704.7 669.3L703.5 671.4L702.9 673.7L702.6 676.0L702.9 678.3L703.5 680.6L704.6 682.7L707.3 686.6L721.9 714.4L722.6 715.5L737.4 737.7L749.1 756.9L753.6 764.3ZM659.4 1245.6L660.4 1243.2L661.0 1241.1L661.2 1238.8L661.1 1236.6L660.5 1234.5L659.5 1232.5L658.1 1230.7L656.5 1229.2L654.6 1228.0L647.3 1224.4L648.7 1221.6L649.6 1219.5L650.0 1217.2L649.9 1214.9L649.5 1212.7L648.6 1210.6L647.3 1208.7L645.7 1207.0L643.8 1205.8L633.7 1200.1L631.9 1199.3L629.9 1198.8L627.9 1198.6L620.0 1198.6L617.7 1198.8L615.4 1199.5L613.3 1200.6L611.5 1202.1L610.0 1204.0L608.9 1206.0L608.2 1208.3L608.0 1210.6L608.0 1300.6L608.2 1302.9L608.9 1305.2L610.0 1307.3L611.5 1309.1L613.3 1310.6L615.4 1311.7L617.7 1312.4L620.0 1312.6L624.0 1312.6L628.8 1316.0L630.6 1317.1L632.6 1317.8L634.7 1318.2L636.8 1318.2L649.2 1317.1L651.4 1316.6L653.5 1315.8L655.4 1314.6L657.1 1313.1L658.4 1311.3L659.4 1309.3L667.3 1287.9L668.0 1284.6L669.1 1268.8L669.0 1266.1L668.2 1263.4L662.6 1249.9L661.5 1247.9L660.1 1246.1L659.4 1245.6Z"/><path fill="none" stroke="#a48fae" stroke-width="2" stroke-opacity="0.7" d="M2283.0 679.0L2290.0 700.0L2295.0 740.0L2300.0 755.0L2315.0 775.0L2318.0 800.0"/><path fill="none" stroke="#a48fae" stroke-width="2" stroke-opacity="0.7" d="M2318.0 800.0L2360.0 810.0L2420.0 805.0L2480.0 795.0L2530.0 790.0"/><path fill="none" stroke="#a48fae" stroke-width="2" stroke-opacity="0.7" d="M2318.0 800.0L2310.0 860.0L2300.0 920.0L2295.0 980.0L2300.0 1010.0"/><path fill="#f1efea" stroke="#bcd8e1" stroke-width="4" fill-rule="nonzero" d="M1704.0 706.8L1711.9 680.0L1691.1 682.0L1690.1 694.9L1696.1 725.6L1702.0 727.6L1704.0 706.8ZM763.9 758.1L781.8 756.6L804.2 762.6L823.6 776.0L834.0 792.4L853.4 799.9L872.8 792.4L875.8 776.0L881.8 753.6L884.8 731.2L893.7 701.4L896.7 680.5L898.2 676.0L714.6 676.0L717.6 680.5L732.5 708.9L747.5 731.2L759.4 750.6L763.9 758.1ZM1823.7 795.7L1828.0 797.1L1840.9 755.4L1836.9 751.4L1823.7 795.7ZM1788.3 829.8L1780.4 844.1L1790.3 846.7L1795.3 832.2L1788.3 829.8ZM1693.5 889.7L1696.4 891.8L1694.2 895.3L1691.5 894.3L1686.3 925.8L1689.5 927.0L1694.2 900.8L1699.0 917.1L1689.1 936.9L1693.1 956.8L1703.0 979.0L1711.0 979.4L1718.9 993.3L1730.8 1007.1L1742.7 1019.0L1758.6 1023.0L1774.4 1027.0L1786.3 1038.9L1778.4 1064.7L1758.6 1062.7L1750.6 1078.6L1758.6 1100.4L1746.7 1114.3L1738.7 1130.2L1754.6 1130.2L1786.3 1130.2L1794.3 1134.1L1780.4 1142.1L1754.6 1152.0L1736.7 1163.9L1724.8 1181.7L1730.8 1189.7L1748.7 1181.7L1768.5 1173.8L1788.3 1165.9L1818.1 1165.9L1837.9 1161.9L1873.7 1159.9L1889.5 1150.0L1883.6 1130.2L1891.5 1116.3L1895.5 1096.4L1885.6 1080.6L1863.7 1068.7L1853.8 1042.9L1843.9 1029.0L1828.0 1003.2L1822.1 983.3L1818.1 979.0L1794.3 970.7L1780.4 960.7L1794.3 956.8L1804.2 946.9L1810.2 936.9L1816.1 917.1L1814.1 893.3L1778.4 892.3L1764.5 893.3L1784.4 869.5L1786.3 853.6L1742.7 853.6L1719.3 861.4L1719.9 860.5L1716.9 857.6L1693.5 889.7ZM1542.0 898.0L1546.0 898.0L1546.0 894.0L1542.0 894.0L1542.0 898.0ZM1744.7 1042.9L1754.6 1038.9L1758.6 1027.0L1746.7 1029.0L1744.7 1042.9ZM1619.7 1050.8L1623.7 1070.6L1629.6 1086.5L1609.8 1114.3L1619.7 1134.1L1639.5 1138.1L1669.3 1130.2L1707.0 1118.3L1718.9 1110.3L1722.9 1090.5L1722.9 1062.7L1726.8 1038.9L1730.8 1023.0L1718.9 1005.2L1691.1 993.3L1665.3 993.3L1655.4 1011.1L1639.5 1023.0L1625.6 1034.9L1619.7 1050.8ZM2340.5 677.0L2340.5 679.0L2336.5 708.8L2340.5 738.5L2338.5 768.3L2348.4 790.1L2378.2 798.0L2407.9 792.1L2437.7 782.2L2467.5 770.3L2497.2 762.3L2517.1 778.2L2527.0 790.1L2517.1 798.0L2493.3 802.0L2467.5 808.0L2427.8 813.9L2398.0 819.9L2378.2 833.8L2377.7 834.5L2378.2 831.8L2358.3 833.8L2360.3 845.7L2371.6 844.3L2368.3 849.6L2371.4 850.9L2356.3 853.6L2354.4 873.4L2368.3 877.4L2388.1 861.5L2383.1 855.6L2388.1 857.6L2411.9 865.5L2407.9 881.4L2409.9 887.3L2407.9 907.2L2394.0 913.1L2374.2 901.2L2358.3 889.3L2338.5 901.2L2328.6 927.0L2324.6 979.0L2330.0 990.0L2318.0 1008.0L2290.0 1020.0L2268.0 1026.0L2240.0 1018.8L2211.8 1025.4L2185.4 1032.0L2178.8 1018.8L2172.1 1005.5L2152.3 1009.5L2136.4 1018.8L2119.2 1022.7L2099.4 1018.8L2086.1 1009.5L2076.9 998.9L2076.0 990.3L2083.5 1000.2L2099.4 1002.9L2102.0 987.0L2094.1 976.4L2078.2 979.1L2075.8 988.5L2075.6 985.7L2076.9 965.8L2083.5 944.7L2091.4 934.1L2090.1 920.9L2094.1 906.3L2096.7 890.4L2082.2 895.7L2065.0 903.7L2050.4 915.6L2043.8 928.8L2041.2 952.6L2041.2 979.1L2039.8 998.9L2041.2 1025.4L2040.3 1034.6L2041.8 1052.5L2026.9 1055.5L2017.9 1058.5L2004.5 1064.5L1977.6 1069.0L1965.7 1079.4L1962.7 1103.3L1944.8 1121.2L1935.8 1134.6L1922.4 1145.1L1900.0 1154.0L1889.7 1176.7L1880.3 1191.3L1861.5 1208.1L1838.5 1208.1L1823.9 1201.8L1813.4 1199.7L1815.5 1222.7L1821.8 1239.4L1798.8 1239.4L1786.3 1231.0L1765.4 1233.1L1748.7 1243.6L1748.7 1258.2L1765.4 1264.5L1786.3 1272.8L1803.0 1279.1L1807.2 1295.8L1819.7 1312.5L1828.0 1327.2L1830.1 1348.0L1828.0 1368.9L1823.9 1389.8L1819.7 1406.6L1786.3 1404.5L1744.5 1402.4L1702.7 1400.3L1671.3 1402.4L1652.5 1412.8L1646.3 1423.3L1648.4 1442.1L1652.5 1463.0L1656.7 1494.3L1650.0 1700.0L400.0 1700.0L400.0 380.0L328.0 380.0L328.0 1776.0L3784.0 1776.0L3784.0 380.0L2340.5 380.0L2340.5 677.0ZM2493.1 1453.3L2488.5 1443.2L2481.7 1437.0L2490.8 1427.8L2491.2 1415.3L2503.8 1410.3L2506.7 1405.9L2507.8 1384.8L2515.8 1364.7L2531.7 1351.8L2538.6 1335.6L2548.8 1322.5L2555.2 1310.0L2572.7 1306.0L2584.1 1306.0L2579.5 1315.9L2593.2 1325.8L2611.4 1322.5L2620.5 1327.4L2606.8 1335.6L2595.5 1342.1L2600.0 1347.0L2615.3 1351.8L2619.3 1359.9L2618.2 1371.1L2625.0 1377.5L2633.5 1374.3L2652.3 1364.7L2661.0 1357.3L2686.5 1351.8L2685.8 1347.0L2672.8 1343.7L2661.4 1347.0L2653.5 1342.1L2654.6 1325.8L2647.8 1320.2L2670.5 1309.3L2693.3 1301.1L2710.4 1289.4L2727.4 1287.7L2741.1 1284.4L2750.2 1287.7L2742.2 1292.7L2726.8 1302.7L2720.6 1312.6L2724.0 1324.2L2711.5 1338.9L2707.0 1348.6L2697.9 1348.6L2695.6 1355.0L2705.1 1361.5L2715.6 1367.9L2732.0 1379.1L2745.0 1387.0L2759.8 1403.4L2770.7 1415.3L2788.9 1421.5L2800.3 1434.0L2804.1 1447.8L2803.2 1463.1L2801.4 1467.7L2777.5 1482.2L2759.3 1482.8L2718.3 1482.8L2704.2 1478.9L2682.6 1473.7L2674.0 1460.7L2655.8 1451.5L2624.1 1453.0L2606.8 1455.5L2593.2 1460.1L2579.5 1469.2L2554.5 1479.8L2529.5 1477.4L2518.1 1476.8L2515.8 1475.2L2499.9 1467.7L2493.1 1453.3ZM2939.7 1421.9L2935.2 1399.5L2921.7 1374.1L2930.7 1360.6L2939.7 1342.7L2954.6 1333.7L2969.6 1320.3L2992.0 1306.8L3007.0 1297.8L3021.9 1294.8L3036.8 1297.8L3051.8 1294.8L3062.3 1305.3L3062.3 1327.7L3056.3 1333.7L3074.2 1345.7L3051.8 1342.7L3029.4 1351.6L3021.9 1363.6L3026.4 1372.6L2999.5 1369.6L3001.0 1381.5L3014.4 1392.0L3021.9 1407.0L3029.4 1421.9L3044.3 1429.4L3056.3 1433.9L3048.8 1451.8L3044.3 1476.0L3044.3 1504.1L2984.5 1504.1L2974.1 1476.0L2954.6 1451.8L2939.7 1421.9ZM2224.1 1456.1L2210.9 1453.9L2197.2 1452.4L2179.5 1438.3L2171.1 1421.5L2163.6 1402.2L2141.9 1388.3L2135.3 1376.8L2140.3 1359.9L2135.3 1351.2L2136.9 1344.4L2147.2 1340.5L2156.3 1334.0L2169.2 1337.2L2168.3 1340.5L2165.4 1351.8L2171.1 1362.4L2179.0 1353.4L2184.0 1347.6L2195.0 1358.3L2201.8 1374.3L2202.5 1386.4L2217.7 1398.7L2230.0 1405.9L2243.2 1412.2L2256.4 1424.0L2267.5 1432.4L2279.2 1439.2L2290.5 1449.3L2292.8 1454.9L2300.8 1464.6L2298.5 1473.1L2297.4 1512.7L2254.1 1512.7L2239.8 1479.2L2226.4 1473.1L2218.2 1463.7L2224.1 1456.1ZM1894.6 1476.1L1905.5 1471.3L1911.4 1466.7L1919.6 1462.5L1927.1 1457.0L1927.1 1448.7L1931.4 1442.6L1926.4 1436.4L1924.8 1430.9L1926.4 1416.9L1937.8 1409.1L1949.2 1405.0L1965.8 1411.2L1978.1 1412.2L1990.8 1418.4L1995.8 1420.9L2007.2 1413.1L2015.2 1404.4L2021.3 1399.6L2032.9 1395.9L2048.9 1380.7L2059.1 1376.8L2079.4 1387.0L2090.3 1404.4L2094.8 1424.0L2105.1 1429.3L2108.5 1440.1L2124.4 1449.3L2135.3 1460.7L2143.1 1469.2L2152.9 1475.8L2185.9 1512.7L1862.7 1512.7L1875.2 1488.8L1883.2 1479.8L1894.6 1476.1ZM3093.8 1482.8L3075.6 1485.8L3060.8 1473.7L3058.5 1452.4L3075.6 1455.5L3098.4 1467.7L3093.8 1482.8ZM656.0 1283.7L657.1 1268.0L651.5 1254.5L640.2 1261.2L649.2 1238.7L631.2 1229.7L638.0 1216.2L627.9 1210.6L620.0 1210.6L620.0 1300.6L627.9 1300.6L635.7 1306.2L648.1 1305.1L656.0 1283.7ZM2078.9 1497.8L2078.9 1479.8L2065.3 1474.9L2056.1 1482.8L2042.5 1485.8L2042.5 1497.8L2078.9 1497.8ZM1961.9 768.3L1967.9 798.0L1969.8 817.9L1977.8 837.7L1987.7 857.6L2007.5 872.5L2025.4 876.4L2045.2 870.5L2063.1 855.6L2079.0 843.7L2096.8 835.7L2097.8 817.9L2100.8 817.9L2104.8 833.8L2118.7 837.7L2108.7 847.7L2112.7 877.4L2120.5 879.8L2128.5 899.7L2141.7 916.9L2148.3 934.1L2149.6 950.0L2148.3 965.8L2151.0 984.4L2165.5 987.0L2181.4 985.7L2188.0 960.5L2205.2 957.9L2223.7 952.6L2227.6 947.4L2228.4 947.8L2230.4 943.8L2231.7 942.0L2234.4 935.6L2247.2 909.2L2245.2 907.2L2237.3 922.4L2233.3 907.2L2237.3 877.4L2241.3 857.6L2249.2 849.6L2269.0 837.7L2279.0 821.9L2292.9 806.0L2288.9 790.1L2273.0 768.3L2251.2 762.3L2247.2 738.5L2249.2 708.8L2255.2 679.0L2255.2 677.0L2255.2 380.0L1968.8 380.0L1968.8 677.0L1968.8 679.0L1961.9 708.8L1958.9 738.5L1961.9 768.3ZM2300.8 790.1L2326.6 790.1L2328.6 774.2L2298.8 772.3L2300.8 790.1ZM2288.9 897.3L2292.9 881.4L2279.0 889.3L2268.7 907.2L2270.0 926.0L2277.0 917.1L2288.9 897.3ZM2139.1 965.8L2131.1 960.5L2110.0 961.9L2110.0 987.0L2120.5 998.9L2136.4 1002.9L2141.7 979.1L2139.1 965.8ZM2192.0 1000.2L2198.6 1002.9L2199.9 998.9L2190.7 993.6L2192.0 1000.2ZM2110.0 1016.1L2132.4 1016.1L2125.8 1005.5L2106.0 1005.5L2110.0 1016.1ZM2085.7 1429.3L2093.7 1429.9L2093.7 1426.2L2085.7 1426.2L2085.7 1429.3ZM2056.1 1464.6L2064.1 1471.3L2068.7 1464.6L2073.2 1452.4L2070.9 1430.9L2070.3 1421.5L2067.5 1431.5L2055.0 1434.9L2051.6 1444.7L2054.6 1454.9L2056.1 1464.6Z"/><path fill="#f1efea" d="M2073.6 989.6L2073.5 989.5L2073.5 989.3L2073.4 989.0L2073.4 988.8L2073.1 985.9L2073.1 985.7L2073.1 985.5L2074.4 965.7L2074.4 965.4L2074.5 965.1L2081.1 943.9L2081.2 943.7L2081.3 943.4L2081.5 943.2L2088.9 933.4L2087.6 921.1L2087.6 920.9L2087.6 920.6L2087.7 920.4L2087.7 920.2L2091.6 905.8L2093.6 894.2L2083.1 898.0L2066.3 905.8L2052.4 917.2L2046.2 929.5L2043.7 952.7L2043.7 979.1L2043.7 979.2L2042.3 998.9L2043.7 1025.2L2043.7 1025.6L2042.8 1034.6L2044.3 1052.3L2044.3 1052.6L2044.3 1052.8L2044.2 1053.1L2044.2 1053.3L2044.1 1053.5L2044.0 1053.7L2043.9 1053.9L2043.7 1054.1L2043.5 1054.3L2043.4 1054.5L2043.2 1054.6L2043.0 1054.7L2042.7 1054.8L2042.5 1054.9L2042.3 1055.0L2027.5 1057.9L2018.8 1060.8L2005.5 1066.8L2005.3 1066.8L2005.1 1066.9L2004.9 1066.9L1978.7 1071.3L1968.0 1080.7L1965.2 1103.6L1965.1 1103.8L1965.1 1104.1L1965.0 1104.3L1964.9 1104.5L1964.8 1104.7L1964.6 1104.9L1964.5 1105.1L1946.7 1122.8L1937.9 1136.0L1937.7 1136.2L1937.6 1136.4L1937.4 1136.6L1923.9 1147.0L1923.7 1147.2L1923.5 1147.3L1923.3 1147.4L1901.9 1156.0L1892.0 1177.8L1891.8 1178.1L1882.4 1192.7L1882.3 1192.9L1882.1 1193.1L1881.9 1193.2L1863.1 1209.9L1862.9 1210.1L1862.7 1210.2L1862.5 1210.3L1862.2 1210.4L1862.0 1210.5L1861.7 1210.5L1861.5 1210.6L1838.5 1210.6L1838.2 1210.5L1838.0 1210.5L1837.7 1210.4L1837.5 1210.4L1823.1 1204.2L1816.2 1202.8L1818.0 1222.1L1824.1 1238.5L1824.2 1238.8L1824.2 1239.0L1824.3 1239.2L1824.3 1239.5L1824.3 1239.7L1824.2 1239.9L1824.2 1240.2L1824.1 1240.4L1824.0 1240.6L1823.8 1240.8L1823.7 1241.0L1823.5 1241.2L1823.3 1241.3L1823.1 1241.5L1822.9 1241.6L1822.7 1241.7L1822.5 1241.8L1822.3 1241.9L1822.0 1241.9L1821.8 1241.9L1798.8 1241.9L1798.6 1241.9L1798.3 1241.9L1798.1 1241.8L1797.8 1241.7L1797.6 1241.6L1797.4 1241.5L1785.6 1233.6L1766.2 1235.6L1751.2 1245.0L1751.2 1256.5L1766.2 1262.1L1766.3 1262.2L1787.2 1270.5L1803.9 1276.8L1804.1 1276.9L1804.3 1277.0L1804.5 1277.1L1804.7 1277.3L1804.8 1277.4L1805.0 1277.6L1805.1 1277.8L1805.2 1278.0L1805.3 1278.3L1805.4 1278.5L1809.5 1294.7L1821.7 1311.0L1821.9 1311.3L1830.2 1325.9L1830.3 1326.1L1830.4 1326.4L1830.5 1326.6L1830.5 1326.9L1832.6 1347.8L1832.6 1348.0L1832.6 1348.3L1830.5 1369.2L1830.5 1369.4L1826.3 1390.3L1826.3 1390.4L1822.1 1407.2L1822.0 1407.4L1821.9 1407.6L1821.8 1407.8L1821.7 1408.0L1821.5 1408.2L1821.4 1408.4L1821.2 1408.6L1821.0 1408.7L1820.7 1408.8L1820.5 1408.9L1820.3 1409.0L1820.0 1409.0L1819.8 1409.1L1819.5 1409.0L1786.1 1407.0L1702.7 1402.8L1672.1 1404.8L1654.3 1414.7L1648.8 1423.8L1650.8 1441.7L1655.0 1462.5L1655.0 1462.6L1659.2 1494.0L1659.2 1494.2L1659.2 1494.4L1652.5 1700.1L1652.5 1700.3L1652.4 1700.6L1652.4 1700.8L1652.3 1701.0L1652.2 1701.2L1652.0 1701.4L1651.9 1701.6L1651.7 1701.8L1651.6 1702.0L1651.4 1702.1L1651.2 1702.2L1650.9 1702.3L1650.7 1702.4L1650.5 1702.5L1650.2 1702.5L1650.0 1702.5L400.0 1702.5L399.8 1702.5L399.5 1702.5L399.3 1702.4L399.0 1702.3L398.8 1702.2L398.6 1702.1L398.4 1701.9L398.2 1701.8L398.1 1701.6L397.9 1701.4L397.8 1701.2L397.7 1701.0L397.6 1700.7L397.5 1700.5L397.5 1700.2L397.5 1700.0L397.5 382.5L330.5 382.5L330.5 1773.5L3781.5 1773.5L3781.5 382.5L2343.0 382.5L2343.0 679.0L2343.0 679.3L2339.0 708.8L2343.0 738.2L2343.0 738.4L2343.0 738.7L2341.0 767.8L2350.2 788.0L2378.3 795.5L2407.3 789.7L2436.8 779.8L2466.5 767.9L2466.8 767.9L2496.6 759.9L2496.8 759.9L2497.0 759.8L2497.3 759.8L2497.5 759.8L2497.7 759.9L2498.0 759.9L2498.2 760.0L2498.4 760.1L2498.6 760.2L2498.8 760.4L2518.6 776.3L2518.8 776.4L2519.0 776.6L2528.9 788.5L2529.1 788.7L2529.2 788.9L2529.3 789.1L2529.4 789.4L2529.4 789.6L2529.5 789.9L2529.5 790.1L2529.5 790.4L2529.4 790.6L2529.4 790.8L2529.3 791.1L2529.2 791.3L2529.1 791.5L2528.9 791.7L2528.7 791.9L2528.5 792.1L2518.6 800.0L2518.4 800.1L2518.2 800.3L2518.0 800.4L2517.7 800.5L2517.5 800.5L2493.7 804.5L2468.0 810.4L2467.8 810.4L2428.2 816.4L2399.0 822.2L2380.0 835.5L2379.8 835.8L2379.7 836.0L2379.5 836.2L2379.4 836.4L2379.2 836.5L2379.0 836.7L2378.8 836.8L2378.5 836.9L2378.3 836.9L2378.0 837.0L2377.8 837.0L2377.6 837.0L2377.3 836.9L2377.1 836.9L2376.8 836.8L2376.6 836.7L2376.4 836.6L2376.2 836.5L2376.0 836.3L2375.8 836.1L2375.7 835.9L2375.6 835.7L2375.4 835.5L2375.4 835.3L2375.3 835.0L2375.2 834.8L2375.2 834.6L2361.2 836.0L2362.4 842.9L2371.3 841.8L2371.6 841.8L2371.8 841.8L2372.0 841.8L2372.3 841.8L2372.5 841.9L2372.7 842.0L2372.9 842.1L2373.1 842.3L2373.3 842.4L2373.5 842.6L2373.7 842.8L2373.8 843.0L2373.9 843.2L2374.0 843.5L2374.1 843.7L2374.1 843.9L2374.1 844.2L2374.1 844.4L2374.1 844.7L2374.0 844.9L2374.0 845.1L2373.9 845.4L2373.7 845.6L2372.0 848.4L2372.3 848.6L2372.5 848.7L2372.7 848.8L2372.9 848.9L2373.1 849.1L2373.3 849.3L2373.4 849.5L2373.6 849.7L2373.7 849.9L2373.7 850.1L2373.8 850.4L2373.8 850.6L2373.9 850.9L2373.8 851.1L2373.8 851.4L2373.7 851.6L2373.7 851.8L2373.6 852.1L2373.4 852.3L2373.3 852.5L2373.1 852.7L2372.9 852.8L2372.7 853.0L2372.5 853.1L2372.3 853.2L2372.0 853.3L2371.8 853.3L2358.6 855.7L2357.1 871.6L2367.7 874.7L2384.5 861.2L2381.2 857.2L2381.1 857.0L2380.9 856.8L2380.8 856.6L2380.7 856.3L2380.7 856.1L2380.6 855.9L2380.6 855.6L2380.6 855.4L2380.7 855.1L2380.7 854.9L2380.8 854.7L2380.9 854.4L2381.0 854.2L2381.2 854.0L2381.3 853.8L2381.5 853.7L2381.7 853.5L2381.9 853.4L2382.2 853.3L2382.4 853.2L2382.6 853.1L2382.9 853.1L2383.1 853.1L2383.4 853.1L2383.6 853.1L2383.8 853.2L2384.1 853.3L2389.0 855.2L2412.7 863.1L2412.9 863.2L2413.1 863.3L2413.4 863.5L2413.6 863.6L2413.7 863.8L2413.9 864.0L2414.0 864.2L2414.2 864.4L2414.3 864.6L2414.3 864.9L2414.4 865.1L2414.4 865.4L2414.4 865.6L2414.4 865.9L2414.3 866.1L2410.5 881.3L2412.3 886.5L2412.4 886.8L2412.4 887.1L2412.4 887.3L2412.4 887.6L2410.4 907.4L2410.4 907.7L2410.3 907.9L2410.2 908.1L2410.1 908.3L2410.0 908.6L2409.9 908.7L2409.7 908.9L2409.5 909.1L2409.3 909.2L2409.1 909.4L2408.9 909.5L2395.0 915.4L2394.8 915.5L2394.6 915.6L2394.4 915.6L2394.1 915.6L2393.9 915.6L2393.6 915.6L2393.4 915.5L2393.2 915.5L2393.0 915.4L2392.8 915.3L2372.9 903.4L2372.7 903.2L2358.2 892.3L2340.5 902.9L2331.0 927.6L2327.1 978.5L2332.2 988.9L2332.3 989.1L2332.4 989.3L2332.5 989.6L2332.5 989.8L2332.5 990.0L2332.5 990.3L2332.4 990.5L2332.4 990.7L2332.3 991.0L2332.2 991.2L2332.1 991.4L2320.1 1009.4L2319.9 1009.6L2319.8 1009.8L2319.6 1009.9L2319.4 1010.1L2319.2 1010.2L2319.0 1010.3L2291.0 1022.3L2290.7 1022.4L2268.7 1028.4L2268.4 1028.5L2268.1 1028.5L2267.9 1028.5L2267.6 1028.5L2267.4 1028.4L2240.0 1021.3L2212.4 1027.8L2186.0 1034.4L2185.7 1034.5L2185.5 1034.5L2185.3 1034.5L2185.0 1034.5L2184.8 1034.4L2184.5 1034.3L2184.3 1034.3L2184.1 1034.1L2183.9 1034.0L2183.7 1033.9L2183.5 1033.7L2183.4 1033.5L2183.2 1033.3L2183.1 1033.1L2176.5 1019.9L2170.8 1008.3L2153.2 1011.9L2137.7 1020.9L2137.5 1021.0L2137.2 1021.1L2137.0 1021.2L2119.8 1025.2L2119.5 1025.2L2119.3 1025.2L2119.0 1025.2L2118.7 1025.2L2098.9 1021.2L2098.6 1021.1L2098.4 1021.0L2098.2 1020.9L2097.9 1020.8L2084.7 1011.5L2084.5 1011.4L2084.3 1011.1L2075.0 1000.6L2074.8 1000.4L2074.7 1000.1L2074.6 999.9L2074.5 999.7L2074.4 999.4L2074.4 999.2L2073.5 990.5L2073.5 990.3L2073.5 990.0L2073.6 989.8L2073.6 989.6ZM3096.2 1483.5L3096.1 1483.8L3096.0 1484.0L3095.9 1484.2L3095.7 1484.4L3095.5 1484.6L3095.4 1484.8L3095.1 1484.9L3094.9 1485.0L3094.7 1485.1L3094.5 1485.2L3094.2 1485.3L3076.0 1488.3L3075.8 1488.3L3075.5 1488.3L3075.3 1488.3L3075.1 1488.3L3074.8 1488.2L3074.6 1488.1L3074.4 1488.0L3074.2 1487.9L3074.0 1487.7L3059.2 1475.7L3059.0 1475.5L3058.9 1475.3L3058.7 1475.1L3058.6 1474.9L3058.5 1474.7L3058.4 1474.5L3058.4 1474.2L3058.3 1474.0L3056.0 1452.7L3056.0 1452.4L3056.0 1452.2L3056.1 1451.9L3056.1 1451.7L3056.2 1451.5L3056.3 1451.3L3056.4 1451.0L3056.6 1450.8L3056.7 1450.7L3056.9 1450.5L3057.1 1450.4L3057.3 1450.2L3057.5 1450.1L3057.8 1450.0L3058.0 1450.0L3058.2 1449.9L3058.5 1449.9L3058.7 1449.9L3059.0 1449.9L3076.0 1453.0L3076.3 1453.1L3076.5 1453.2L3076.8 1453.3L3099.5 1465.5L3099.7 1465.6L3099.9 1465.7L3100.1 1465.9L3100.3 1466.1L3100.4 1466.3L3100.6 1466.5L3100.7 1466.7L3100.7 1466.9L3100.8 1467.2L3100.8 1467.4L3100.9 1467.7L3100.8 1467.9L3100.8 1468.1L3100.7 1468.4L3096.2 1483.5ZM2937.5 1423.0L2937.4 1422.8L2937.3 1422.6L2937.2 1422.4L2932.8 1400.3L2919.5 1375.2L2919.4 1375.0L2919.4 1374.8L2919.3 1374.5L2919.3 1374.3L2919.2 1374.1L2919.3 1373.8L2919.3 1373.6L2919.4 1373.3L2919.4 1373.1L2919.5 1372.9L2919.7 1372.7L2928.6 1359.4L2937.5 1341.6L2937.6 1341.4L2937.7 1341.2L2937.9 1341.0L2938.0 1340.8L2938.2 1340.7L2938.4 1340.5L2953.1 1331.7L2967.9 1318.4L2968.1 1318.2L2968.3 1318.1L2990.7 1304.7L3005.7 1295.7L3005.9 1295.6L3006.2 1295.5L3006.5 1295.4L3021.4 1292.4L3021.7 1292.4L3021.9 1292.3L3022.1 1292.4L3022.4 1292.4L3036.8 1295.3L3051.3 1292.4L3051.5 1292.4L3051.8 1292.3L3052.0 1292.4L3052.3 1292.4L3052.5 1292.5L3052.7 1292.5L3053.0 1292.6L3053.2 1292.8L3053.4 1292.9L3053.6 1293.1L3064.0 1303.5L3064.2 1303.7L3064.3 1303.9L3064.5 1304.1L3064.6 1304.3L3064.6 1304.6L3064.7 1304.8L3064.7 1305.1L3064.8 1305.3L3064.8 1327.7L3064.7 1328.0L3064.7 1328.2L3064.6 1328.5L3064.6 1328.7L3064.5 1328.9L3064.3 1329.1L3064.2 1329.3L3064.0 1329.5L3060.2 1333.3L3075.6 1343.6L3075.8 1343.7L3076.0 1343.9L3076.2 1344.1L3076.3 1344.3L3076.4 1344.5L3076.5 1344.7L3076.6 1345.0L3076.7 1345.2L3076.7 1345.4L3076.7 1345.7L3076.7 1345.9L3076.7 1346.2L3076.6 1346.4L3076.5 1346.7L3076.4 1346.9L3076.3 1347.1L3076.1 1347.3L3075.9 1347.5L3075.8 1347.6L3075.6 1347.8L3075.3 1347.9L3075.1 1348.0L3074.9 1348.1L3074.6 1348.1L3074.4 1348.2L3074.1 1348.2L3073.9 1348.1L3052.1 1345.2L3031.1 1353.7L3024.8 1363.7L3028.6 1371.5L3028.7 1371.7L3028.8 1371.9L3028.8 1372.1L3028.9 1372.4L3028.9 1372.6L3028.9 1372.9L3028.8 1373.1L3028.8 1373.3L3028.7 1373.6L3028.6 1373.8L3028.4 1374.0L3028.3 1374.2L3028.1 1374.4L3027.9 1374.5L3027.7 1374.7L3027.5 1374.8L3027.3 1374.9L3027.1 1375.0L3026.8 1375.0L3026.6 1375.1L3026.3 1375.1L3026.1 1375.1L3002.4 1372.4L3003.3 1380.2L3016.0 1390.0L3016.1 1390.2L3016.3 1390.3L3016.4 1390.5L3016.6 1390.7L3016.7 1390.9L3024.1 1405.8L3031.2 1420.0L3045.3 1427.1L3057.2 1431.5L3057.4 1431.6L3057.6 1431.7L3057.8 1431.9L3058.0 1432.0L3058.2 1432.2L3058.3 1432.4L3058.5 1432.6L3058.6 1432.9L3058.7 1433.1L3058.7 1433.3L3058.8 1433.6L3058.8 1433.8L3058.8 1434.1L3058.7 1434.3L3058.7 1434.6L3058.6 1434.8L3051.2 1452.5L3046.8 1476.2L3046.8 1504.1L3046.8 1504.4L3046.8 1504.6L3046.7 1504.8L3046.6 1505.1L3046.5 1505.3L3046.4 1505.5L3046.3 1505.7L3046.1 1505.9L3045.9 1506.0L3045.7 1506.2L3045.5 1506.3L3045.3 1506.4L3045.0 1506.5L3044.8 1506.6L3044.6 1506.6L3044.3 1506.6L2984.5 1506.6L2984.3 1506.6L2984.0 1506.6L2983.8 1506.5L2983.5 1506.4L2983.3 1506.3L2983.1 1506.2L2982.9 1506.0L2982.7 1505.8L2982.6 1505.6L2982.4 1505.4L2982.3 1505.2L2982.2 1505.0L2971.9 1477.3L2952.7 1453.4L2952.5 1453.1L2952.4 1452.9L2937.5 1423.0ZM2490.8 1454.4L2490.8 1454.4L2486.4 1444.7L2480.0 1438.9L2479.8 1438.7L2479.7 1438.5L2479.5 1438.3L2479.4 1438.1L2479.3 1437.9L2479.2 1437.6L2479.2 1437.4L2479.2 1437.1L2479.2 1436.9L2479.2 1436.6L2479.3 1436.4L2479.3 1436.1L2479.5 1435.9L2479.6 1435.7L2479.7 1435.5L2479.9 1435.3L2488.3 1426.7L2488.7 1415.2L2488.8 1415.0L2488.8 1414.7L2488.9 1414.5L2489.0 1414.3L2489.1 1414.1L2489.2 1413.9L2489.3 1413.7L2489.5 1413.5L2489.7 1413.3L2489.9 1413.2L2490.1 1413.1L2490.3 1413.0L2502.1 1408.3L2504.2 1405.1L2505.4 1384.7L2505.4 1384.4L2505.4 1384.1L2505.5 1383.9L2513.5 1363.8L2513.6 1363.5L2513.7 1363.3L2513.9 1363.1L2514.0 1362.9L2514.2 1362.7L2529.7 1350.3L2536.3 1334.6L2536.4 1334.4L2536.5 1334.2L2536.6 1334.1L2546.7 1321.2L2553.0 1308.9L2553.1 1308.7L2553.2 1308.5L2553.4 1308.3L2553.5 1308.1L2553.7 1308.0L2553.9 1307.8L2554.2 1307.7L2554.4 1307.6L2554.6 1307.6L2572.1 1303.6L2572.4 1303.6L2572.7 1303.5L2584.1 1303.5L2584.3 1303.6L2584.6 1303.6L2584.8 1303.6L2585.1 1303.7L2585.3 1303.8L2585.5 1304.0L2585.7 1304.1L2585.9 1304.3L2586.0 1304.5L2586.2 1304.7L2586.3 1304.9L2586.4 1305.1L2586.5 1305.4L2586.5 1305.6L2586.6 1305.9L2586.6 1306.1L2586.6 1306.4L2586.5 1306.6L2586.4 1306.8L2586.3 1307.1L2582.7 1315.1L2593.8 1323.2L2610.9 1320.1L2611.2 1320.0L2611.4 1320.0L2611.7 1320.0L2611.9 1320.1L2612.1 1320.1L2612.4 1320.2L2612.6 1320.3L2621.7 1325.2L2621.9 1325.4L2622.1 1325.5L2622.3 1325.7L2622.4 1325.9L2622.6 1326.1L2622.7 1326.3L2622.8 1326.5L2622.9 1326.8L2622.9 1327.0L2623.0 1327.3L2623.0 1327.5L2623.0 1327.8L2622.9 1328.0L2622.9 1328.2L2622.8 1328.5L2622.6 1328.7L2622.5 1328.9L2622.3 1329.1L2622.2 1329.3L2622.0 1329.4L2621.8 1329.6L2608.1 1337.7L2608.1 1337.8L2599.4 1342.7L2601.4 1344.8L2616.0 1349.4L2616.2 1349.5L2616.5 1349.6L2616.7 1349.8L2616.9 1349.9L2617.1 1350.1L2617.2 1350.3L2617.4 1350.5L2617.5 1350.7L2621.6 1358.7L2621.7 1359.0L2621.8 1359.2L2621.8 1359.4L2621.8 1359.7L2621.8 1359.9L2621.8 1360.1L2620.8 1370.1L2625.6 1374.6L2632.4 1372.0L2650.9 1362.6L2659.4 1355.4L2659.6 1355.3L2659.8 1355.1L2660.0 1355.0L2660.2 1354.9L2660.5 1354.9L2683.7 1349.9L2683.6 1349.0L2672.9 1346.3L2662.1 1349.4L2661.9 1349.4L2661.6 1349.5L2661.4 1349.5L2661.1 1349.4L2660.9 1349.4L2660.6 1349.3L2660.4 1349.2L2660.1 1349.1L2652.2 1344.2L2652.0 1344.1L2651.8 1343.9L2651.6 1343.8L2651.5 1343.6L2651.3 1343.4L2651.2 1343.1L2651.1 1342.9L2651.0 1342.7L2651.0 1342.4L2651.0 1342.2L2651.0 1341.9L2652.0 1326.9L2646.2 1322.2L2646.0 1322.0L2645.9 1321.8L2645.7 1321.6L2645.6 1321.4L2645.5 1321.2L2645.4 1320.9L2645.3 1320.7L2645.3 1320.4L2645.3 1320.2L2645.3 1319.9L2645.4 1319.7L2645.4 1319.4L2645.5 1319.2L2645.6 1319.0L2645.8 1318.8L2645.9 1318.6L2646.1 1318.4L2646.3 1318.2L2646.5 1318.1L2646.7 1318.0L2669.5 1307.1L2669.7 1307.0L2692.2 1298.8L2709.0 1287.3L2709.2 1287.2L2709.4 1287.1L2709.6 1287.0L2709.9 1287.0L2710.1 1286.9L2727.0 1285.3L2740.5 1282.0L2740.7 1281.9L2741.0 1281.9L2741.2 1281.9L2741.5 1281.9L2741.7 1282.0L2742.0 1282.0L2751.1 1285.4L2751.3 1285.5L2751.5 1285.6L2751.7 1285.7L2751.9 1285.9L2752.0 1286.1L2752.2 1286.2L2752.3 1286.4L2752.5 1286.7L2752.5 1286.9L2752.6 1287.1L2752.7 1287.3L2752.7 1287.6L2752.7 1287.8L2752.7 1288.1L2752.6 1288.3L2752.6 1288.5L2752.5 1288.8L2752.4 1289.0L2752.2 1289.2L2752.1 1289.4L2751.9 1289.5L2751.7 1289.7L2751.5 1289.8L2743.6 1294.8L2728.6 1304.5L2723.3 1313.0L2726.4 1323.5L2726.5 1323.7L2726.5 1323.9L2726.5 1324.2L2726.5 1324.4L2726.5 1324.7L2726.4 1324.9L2726.3 1325.2L2726.2 1325.4L2726.1 1325.6L2725.9 1325.8L2713.6 1340.2L2709.2 1349.6L2709.1 1349.9L2709.0 1350.1L2708.8 1350.2L2708.7 1350.4L2708.5 1350.6L2708.3 1350.7L2708.1 1350.8L2707.9 1350.9L2707.7 1351.0L2707.4 1351.0L2707.2 1351.1L2707.0 1351.1L2699.6 1351.1L2698.6 1354.1L2706.5 1359.4L2716.9 1365.8L2717.0 1365.8L2733.3 1377.0L2746.3 1384.9L2746.5 1385.0L2746.6 1385.2L2746.8 1385.3L2761.6 1401.7L2772.1 1413.2L2789.7 1419.2L2789.9 1419.3L2790.1 1419.4L2790.3 1419.5L2790.5 1419.7L2790.7 1419.9L2802.1 1432.3L2802.2 1432.4L2802.4 1432.6L2802.5 1432.8L2802.6 1433.1L2802.7 1433.3L2806.5 1447.1L2806.6 1447.4L2806.6 1447.7L2806.6 1448.0L2805.7 1463.2L2805.7 1463.5L2805.6 1463.8L2805.5 1464.0L2803.7 1468.6L2803.6 1468.8L2803.5 1469.0L2803.4 1469.2L2803.2 1469.4L2803.1 1469.5L2802.9 1469.7L2802.7 1469.8L2778.8 1484.3L2778.6 1484.4L2778.3 1484.5L2778.1 1484.6L2777.8 1484.7L2777.6 1484.7L2759.4 1485.3L2759.3 1485.3L2718.3 1485.3L2718.1 1485.3L2717.9 1485.3L2717.7 1485.2L2703.6 1481.3L2682.0 1476.2L2681.8 1476.1L2681.6 1476.0L2681.4 1475.9L2681.2 1475.8L2681.0 1475.6L2680.8 1475.5L2680.7 1475.3L2680.5 1475.1L2672.2 1462.6L2655.2 1454.0L2624.4 1455.5L2607.4 1457.9L2594.3 1462.3L2580.9 1471.3L2580.7 1471.4L2580.5 1471.5L2555.5 1482.1L2555.2 1482.2L2555.0 1482.2L2554.8 1482.3L2554.5 1482.3L2554.3 1482.3L2529.3 1479.9L2518.0 1479.3L2517.7 1479.2L2517.4 1479.2L2517.2 1479.1L2516.9 1479.0L2516.7 1478.8L2514.6 1477.4L2498.8 1469.9L2498.6 1469.8L2498.4 1469.7L2498.2 1469.5L2498.0 1469.3L2497.9 1469.2L2497.7 1469.0L2497.6 1468.7L2490.8 1454.4ZM2219.5 1457.9L2210.5 1456.4L2197.0 1454.9L2196.7 1454.9L2196.5 1454.8L2196.3 1454.7L2196.1 1454.6L2195.9 1454.5L2195.7 1454.4L2177.9 1440.2L2177.7 1440.0L2177.5 1439.8L2177.4 1439.6L2177.3 1439.4L2168.8 1422.7L2168.7 1422.4L2161.5 1403.8L2140.6 1390.4L2140.4 1390.2L2140.2 1390.1L2140.0 1389.9L2139.9 1389.7L2139.8 1389.5L2133.2 1378.1L2133.1 1377.9L2133.0 1377.6L2132.9 1377.4L2132.9 1377.1L2132.8 1376.9L2132.8 1376.6L2132.9 1376.4L2132.9 1376.1L2137.6 1360.2L2133.2 1352.4L2133.1 1352.2L2133.0 1352.0L2132.9 1351.8L2132.9 1351.5L2132.8 1351.3L2132.8 1351.1L2132.9 1350.8L2132.9 1350.6L2134.5 1343.8L2134.6 1343.6L2134.7 1343.3L2134.8 1343.1L2134.9 1342.9L2135.0 1342.7L2135.2 1342.6L2135.4 1342.4L2135.6 1342.3L2135.8 1342.1L2136.0 1342.0L2146.0 1338.3L2154.8 1331.9L2155.0 1331.8L2155.2 1331.7L2155.5 1331.6L2155.7 1331.5L2155.9 1331.5L2156.2 1331.5L2156.4 1331.5L2156.6 1331.5L2156.9 1331.5L2169.9 1334.8L2170.1 1334.9L2170.3 1335.0L2170.5 1335.1L2170.7 1335.2L2170.9 1335.4L2171.1 1335.6L2171.3 1335.8L2171.4 1336.0L2171.5 1336.2L2171.6 1336.4L2171.7 1336.7L2171.7 1336.9L2171.7 1337.2L2171.7 1337.4L2171.7 1337.7L2171.7 1337.9L2170.7 1341.1L2168.0 1351.5L2171.6 1358.1L2177.1 1351.8L2182.1 1346.0L2182.3 1345.8L2182.5 1345.7L2182.7 1345.5L2182.9 1345.4L2183.1 1345.3L2183.3 1345.2L2183.6 1345.2L2183.8 1345.1L2184.0 1345.1L2184.3 1345.1L2184.5 1345.2L2184.8 1345.2L2185.0 1345.3L2185.2 1345.4L2185.4 1345.5L2185.6 1345.7L2185.8 1345.8L2196.7 1356.5L2196.9 1356.7L2197.0 1356.9L2197.1 1357.1L2197.3 1357.3L2204.1 1373.3L2204.2 1373.5L2204.2 1373.7L2204.3 1373.9L2204.3 1374.1L2204.9 1385.1L2219.1 1396.6L2231.2 1403.7L2244.3 1409.9L2244.5 1410.0L2244.7 1410.2L2244.9 1410.3L2258.0 1422.1L2268.9 1430.3L2280.4 1437.0L2280.6 1437.2L2280.8 1437.3L2292.2 1447.5L2292.4 1447.6L2292.5 1447.8L2292.6 1448.0L2292.7 1448.2L2292.8 1448.4L2295.0 1453.6L2302.7 1463.0L2302.8 1463.2L2303.0 1463.4L2303.1 1463.6L2303.2 1463.9L2303.2 1464.1L2303.3 1464.3L2303.3 1464.6L2303.3 1464.8L2303.2 1465.0L2303.2 1465.3L2301.0 1473.5L2299.9 1512.8L2299.8 1513.0L2299.8 1513.3L2299.7 1513.5L2299.6 1513.7L2299.5 1513.9L2299.4 1514.1L2299.3 1514.3L2299.1 1514.5L2298.9 1514.7L2298.7 1514.8L2298.5 1514.9L2298.3 1515.0L2298.1 1515.1L2297.8 1515.2L2297.6 1515.2L2297.4 1515.2L2254.1 1515.2L2253.9 1515.2L2253.6 1515.2L2253.4 1515.1L2253.2 1515.0L2253.0 1514.9L2252.7 1514.8L2252.5 1514.7L2252.4 1514.5L2252.2 1514.3L2252.1 1514.1L2251.9 1513.9L2251.8 1513.7L2237.9 1481.1L2225.3 1475.4L2225.1 1475.3L2224.9 1475.1L2224.7 1475.0L2224.5 1474.8L2216.3 1465.3L2216.1 1465.2L2216.0 1464.9L2215.9 1464.7L2215.8 1464.5L2215.7 1464.3L2215.7 1464.0L2215.7 1463.8L2215.7 1463.5L2215.7 1463.3L2215.8 1463.0L2215.8 1462.8L2215.9 1462.6L2216.1 1462.4L2216.2 1462.2L2219.5 1457.9ZM1893.7 1473.8L1904.2 1469.1L1909.9 1464.8L1910.1 1464.6L1910.3 1464.5L1918.3 1460.4L1924.6 1455.7L1924.6 1448.7L1924.6 1448.5L1924.7 1448.2L1924.7 1448.0L1924.8 1447.7L1924.9 1447.5L1925.1 1447.3L1928.3 1442.7L1924.5 1438.0L1924.4 1437.8L1924.2 1437.6L1924.1 1437.3L1924.0 1437.1L1922.4 1431.5L1922.4 1431.3L1922.4 1431.1L1922.3 1430.8L1922.4 1430.6L1924.0 1416.6L1924.0 1416.4L1924.1 1416.1L1924.1 1415.9L1924.2 1415.7L1924.4 1415.5L1924.5 1415.3L1924.7 1415.1L1924.8 1415.0L1925.0 1414.8L1936.4 1407.0L1936.6 1406.9L1936.8 1406.8L1937.0 1406.7L1948.4 1402.6L1948.6 1402.6L1948.8 1402.5L1949.1 1402.5L1949.3 1402.5L1949.6 1402.5L1949.8 1402.6L1950.1 1402.6L1966.4 1408.8L1978.3 1409.7L1978.5 1409.7L1978.8 1409.8L1979.0 1409.8L1979.2 1409.9L1991.9 1416.2L1992.0 1416.2L1995.6 1418.0L2005.6 1411.2L2013.3 1402.7L2013.5 1402.5L2013.7 1402.4L2019.8 1397.7L2020.0 1397.5L2020.3 1397.4L2020.6 1397.3L2031.6 1393.7L2047.1 1378.8L2047.3 1378.7L2047.5 1378.5L2047.8 1378.4L2048.0 1378.3L2058.2 1374.5L2058.5 1374.4L2058.7 1374.4L2059.0 1374.3L2059.2 1374.3L2059.5 1374.4L2059.7 1374.4L2060.0 1374.5L2060.2 1374.6L2080.5 1384.8L2080.7 1384.9L2080.9 1385.0L2081.0 1385.2L2081.2 1385.3L2081.3 1385.5L2081.5 1385.7L2092.4 1403.0L2092.5 1403.3L2092.6 1403.5L2092.7 1403.8L2097.0 1422.3L2106.2 1427.1L2106.4 1427.2L2106.6 1427.4L2106.8 1427.5L2107.0 1427.7L2107.1 1427.9L2107.3 1428.1L2107.4 1428.3L2107.5 1428.6L2110.6 1438.4L2125.7 1447.2L2125.9 1447.3L2126.0 1447.5L2126.2 1447.6L2137.1 1458.9L2137.2 1459.0L2144.7 1467.3L2154.3 1473.8L2154.5 1474.0L2154.7 1474.2L2187.7 1511.1L2187.9 1511.2L2188.0 1511.5L2188.1 1511.7L2188.2 1511.9L2188.3 1512.2L2188.3 1512.4L2188.4 1512.6L2188.3 1512.9L2188.3 1513.1L2188.3 1513.4L2188.2 1513.6L2188.1 1513.9L2188.0 1514.1L2187.8 1514.3L2187.6 1514.5L2187.5 1514.6L2187.3 1514.8L2187.1 1514.9L2186.8 1515.0L2186.6 1515.1L2186.4 1515.2L2186.1 1515.2L2185.9 1515.2L1862.7 1515.2L1862.5 1515.2L1862.2 1515.2L1862.0 1515.1L1861.8 1515.0L1861.6 1514.9L1861.3 1514.8L1861.1 1514.7L1861.0 1514.5L1860.8 1514.3L1860.7 1514.1L1860.5 1513.9L1860.4 1513.7L1860.3 1513.5L1860.3 1513.2L1860.2 1513.0L1860.2 1512.7L1860.2 1512.5L1860.3 1512.3L1860.3 1512.0L1860.4 1511.8L1860.5 1511.6L1873.0 1487.7L1873.2 1487.4L1873.4 1487.2L1881.3 1478.1L1881.5 1477.9L1881.7 1477.8L1882.0 1477.6L1882.2 1477.5L1882.4 1477.4L1893.7 1473.8ZM2078.3 989.1L2084.9 997.9L2097.3 1000.0L2099.4 987.6L2093.0 979.1L2080.2 981.3L2078.3 989.1ZM2303.0 787.6L2324.4 787.6L2325.8 776.6L2301.6 774.9L2303.0 787.6ZM1964.4 767.9L1970.3 797.6L1970.3 797.8L1972.3 817.3L1980.1 836.7L1989.7 855.9L2008.6 870.1L2025.3 873.8L2044.0 868.2L2061.5 853.7L2061.6 853.6L2077.5 841.7L2077.7 841.5L2078.0 841.4L2094.4 834.1L2095.3 817.8L2095.3 817.5L2095.4 817.3L2095.5 817.0L2095.6 816.8L2095.7 816.6L2095.8 816.4L2096.0 816.2L2096.2 816.0L2096.4 815.8L2096.6 815.7L2096.8 815.6L2097.1 815.5L2097.3 815.4L2097.6 815.4L2097.8 815.4L2100.8 815.4L2101.0 815.4L2101.3 815.4L2101.5 815.5L2101.7 815.6L2101.9 815.7L2102.1 815.8L2102.3 815.9L2102.5 816.1L2102.7 816.2L2102.8 816.4L2103.0 816.6L2103.1 816.8L2103.2 817.1L2103.2 817.3L2106.8 831.8L2119.3 835.3L2119.6 835.4L2119.8 835.5L2120.0 835.6L2120.2 835.8L2120.4 835.9L2120.6 836.1L2120.7 836.3L2120.8 836.5L2121.0 836.8L2121.0 837.0L2121.1 837.2L2121.1 837.5L2121.2 837.7L2121.1 838.0L2121.1 838.2L2121.0 838.4L2121.0 838.7L2120.9 838.9L2120.7 839.1L2120.6 839.3L2120.4 839.5L2111.4 848.5L2115.0 875.5L2121.3 877.5L2121.5 877.5L2121.7 877.6L2121.9 877.8L2122.1 877.9L2122.3 878.1L2122.5 878.3L2122.6 878.5L2122.8 878.7L2122.9 878.9L2130.7 898.4L2143.7 915.4L2143.8 915.6L2143.9 915.8L2144.0 916.0L2150.7 933.2L2150.7 933.4L2150.8 933.6L2150.8 933.9L2152.1 949.8L2152.1 950.0L2152.1 950.2L2150.8 965.8L2153.2 982.2L2165.6 984.5L2179.4 983.3L2185.6 959.9L2185.7 959.7L2185.8 959.5L2185.9 959.2L2186.0 959.0L2186.2 958.9L2186.3 958.7L2186.5 958.5L2186.7 958.4L2186.9 958.3L2187.2 958.2L2187.4 958.1L2187.6 958.1L2204.7 955.4L2222.2 950.4L2225.6 945.9L2225.8 945.7L2226.0 945.6L2226.1 945.4L2226.3 945.3L2226.6 945.1L2226.8 945.1L2227.0 945.0L2228.1 942.7L2228.2 942.5L2228.4 942.3L2229.5 940.8L2232.1 934.6L2232.1 934.5L2236.8 924.8L2236.8 924.8L2236.5 924.7L2236.3 924.6L2236.1 924.5L2235.9 924.4L2235.7 924.2L2235.5 924.1L2235.3 923.9L2235.2 923.7L2235.0 923.5L2235.0 923.2L2234.9 923.0L2230.9 907.8L2230.9 907.6L2230.8 907.3L2230.8 907.1L2230.9 906.8L2234.8 877.1L2234.9 876.9L2238.8 857.1L2238.9 856.8L2239.0 856.6L2239.1 856.4L2239.2 856.2L2239.3 856.0L2239.5 855.8L2247.4 847.9L2247.7 847.7L2247.9 847.5L2267.2 835.9L2276.8 820.5L2277.0 820.4L2277.1 820.2L2290.1 805.3L2286.6 791.2L2271.5 770.5L2250.5 764.7L2250.3 764.7L2250.1 764.6L2249.9 764.5L2249.7 764.3L2249.5 764.2L2249.3 764.0L2249.2 763.8L2249.1 763.6L2248.9 763.4L2248.8 763.2L2248.8 763.0L2248.7 762.7L2244.8 738.9L2244.7 738.6L2244.7 738.4L2246.7 708.6L2246.8 708.3L2252.7 678.8L2252.7 382.5L1971.3 382.5L1971.3 679.0L1971.3 679.3L1971.3 679.6L1964.4 709.2L1961.4 738.5L1964.4 767.9ZM2286.6 896.3L2289.0 886.5L2280.8 891.2L2271.2 907.8L2272.1 919.4L2274.9 915.7L2286.6 896.3ZM2136.8 967.3L2130.4 963.1L2112.5 964.2L2112.5 986.1L2121.9 996.7L2134.5 999.8L2139.2 979.0L2136.8 967.3ZM2111.7 1013.6L2127.9 1013.6L2124.4 1008.0L2109.6 1008.0L2111.7 1013.6ZM2076.4 1495.3L2076.4 1481.5L2065.8 1477.8L2057.8 1484.7L2057.6 1484.8L2057.4 1485.0L2057.2 1485.1L2056.9 1485.2L2056.7 1485.2L2045.0 1487.8L2045.0 1495.3L2076.4 1495.3ZM2058.5 1463.3L2063.6 1467.6L2066.4 1463.5L2070.7 1452.1L2068.7 1433.7L2068.6 1433.7L2068.4 1433.8L2068.2 1433.9L2056.9 1436.9L2054.2 1444.8L2057.0 1454.2L2057.0 1454.5L2058.5 1463.3ZM1693.4 898.5L1693.4 898.4L1693.7 898.4L1693.9 898.3L1694.1 898.3L1694.4 898.3L1694.6 898.4L1694.9 898.4L1695.1 898.5L1695.3 898.6L1695.5 898.7L1695.7 898.9L1695.9 899.1L1696.1 899.2L1696.2 899.4L1696.4 899.6L1696.5 899.9L1696.6 900.1L1701.4 916.4L1701.5 916.6L1701.5 916.8L1701.5 917.1L1701.5 917.3L1701.5 917.5L1701.5 917.8L1701.4 918.0L1701.3 918.2L1691.7 937.3L1695.5 956.0L1704.7 976.6L1711.1 976.9L1711.3 976.9L1711.6 976.9L1711.8 977.0L1712.0 977.1L1712.3 977.2L1712.5 977.4L1712.7 977.5L1712.8 977.7L1713.0 977.9L1713.1 978.1L1720.9 991.8L1732.6 1005.4L1744.0 1016.8L1759.2 1020.6L1775.1 1024.6L1775.3 1024.6L1775.5 1024.7L1775.7 1024.8L1775.9 1024.9L1776.0 1025.1L1776.2 1025.2L1788.1 1037.1L1788.3 1037.3L1788.4 1037.5L1788.6 1037.7L1788.7 1037.9L1788.7 1038.2L1788.8 1038.4L1788.8 1038.7L1788.8 1038.9L1788.8 1039.1L1788.8 1039.4L1788.7 1039.6L1780.8 1065.4L1780.7 1065.6L1780.6 1065.9L1780.5 1066.1L1780.3 1066.3L1780.2 1066.5L1780.0 1066.6L1779.8 1066.8L1779.6 1066.9L1779.4 1067.0L1779.1 1067.1L1778.9 1067.1L1778.7 1067.2L1778.4 1067.2L1778.2 1067.2L1760.0 1065.4L1753.4 1078.7L1760.9 1099.5L1761.0 1099.8L1761.0 1100.0L1761.1 1100.2L1761.1 1100.5L1761.0 1100.7L1761.0 1101.0L1760.9 1101.2L1760.9 1101.4L1760.7 1101.6L1760.6 1101.8L1760.5 1102.0L1748.8 1115.7L1742.8 1127.7L1786.3 1127.7L1786.6 1127.7L1786.8 1127.7L1787.0 1127.8L1787.3 1127.8L1787.5 1127.9L1795.4 1131.9L1795.6 1132.0L1795.8 1132.2L1796.0 1132.3L1796.2 1132.5L1796.3 1132.7L1796.5 1132.9L1796.6 1133.1L1796.7 1133.3L1796.7 1133.6L1796.8 1133.8L1796.8 1134.1L1796.8 1134.3L1796.8 1134.5L1796.7 1134.8L1796.6 1135.0L1796.5 1135.2L1796.4 1135.5L1796.3 1135.7L1796.1 1135.8L1795.9 1136.0L1795.7 1136.2L1795.5 1136.3L1781.6 1144.2L1781.5 1144.3L1781.3 1144.4L1755.8 1154.2L1738.5 1165.7L1727.9 1181.7L1731.6 1186.6L1747.6 1179.5L1747.7 1179.4L1767.6 1171.5L1787.4 1163.6L1787.6 1163.5L1787.9 1163.4L1788.1 1163.4L1788.3 1163.4L1817.8 1163.4L1837.4 1159.5L1837.8 1159.4L1872.9 1157.5L1886.6 1148.9L1881.2 1130.9L1881.1 1130.6L1881.1 1130.4L1881.1 1130.1L1881.1 1129.9L1881.1 1129.6L1881.2 1129.4L1881.3 1129.1L1881.4 1128.9L1889.1 1115.4L1892.8 1096.9L1883.8 1082.4L1862.5 1070.8L1862.3 1070.7L1862.1 1070.6L1861.9 1070.4L1861.8 1070.2L1861.6 1070.0L1861.5 1069.8L1861.4 1069.5L1851.6 1044.1L1841.9 1030.4L1841.8 1030.3L1825.9 1004.5L1825.8 1004.3L1825.7 1004.1L1825.6 1003.9L1819.8 984.6L1816.7 981.2L1793.5 973.0L1793.2 972.9L1793.0 972.8L1792.8 972.7L1778.9 962.8L1778.8 962.6L1778.6 962.5L1778.4 962.3L1778.3 962.1L1778.2 961.9L1778.1 961.6L1778.0 961.4L1777.9 961.2L1777.9 960.9L1777.9 960.7L1777.9 960.4L1778.0 960.2L1778.0 960.0L1778.1 959.7L1778.2 959.5L1778.3 959.3L1778.5 959.1L1778.7 958.9L1778.8 958.8L1779.0 958.6L1779.3 958.5L1779.5 958.4L1779.7 958.3L1793.0 954.6L1802.2 945.3L1807.9 935.9L1813.6 916.8L1811.8 895.7L1778.5 894.8L1764.7 895.8L1764.5 895.8L1764.2 895.8L1764.0 895.7L1763.7 895.7L1763.5 895.6L1763.3 895.5L1763.1 895.3L1762.9 895.2L1762.7 895.0L1762.6 894.8L1762.4 894.6L1762.3 894.4L1762.2 894.2L1762.1 894.0L1762.1 893.7L1762.0 893.5L1762.0 893.3L1762.0 893.0L1762.1 892.8L1762.1 892.5L1762.2 892.3L1762.3 892.1L1762.5 891.9L1762.6 891.7L1782.0 868.4L1783.5 856.1L1743.1 856.1L1720.0 863.8L1719.8 863.9L1719.6 863.9L1719.3 863.9L1719.1 863.9L1718.9 863.9L1718.6 863.8L1718.4 863.8L1718.2 863.7L1718.0 863.5L1717.8 863.4L1717.6 863.3L1717.4 863.1L1717.2 862.9L1717.1 862.7L1717.0 862.5L1716.9 862.3L1716.8 862.0L1716.8 861.9L1697.0 889.2L1697.8 889.8L1698.0 889.9L1698.2 890.1L1698.4 890.3L1698.5 890.5L1698.6 890.7L1698.7 890.9L1698.8 891.2L1698.8 891.4L1698.9 891.7L1698.9 891.9L1698.8 892.2L1698.8 892.4L1698.7 892.6L1698.6 892.9L1698.5 893.1L1696.4 896.6L1696.2 896.8L1696.1 897.0L1695.9 897.2L1695.7 897.4L1695.5 897.5L1695.3 897.6L1695.1 897.7L1694.8 897.8L1694.6 897.8L1694.3 897.8L1694.1 897.8L1693.8 897.8L1693.6 897.8L1693.5 897.7L1693.4 898.5ZM1789.5 832.8L1784.1 842.5L1788.7 843.7L1792.1 833.7L1789.5 832.8ZM1747.8 1038.9L1752.6 1037.0L1754.9 1030.1L1748.9 1031.1L1747.8 1038.9ZM1622.3 1051.0L1626.1 1069.9L1631.9 1085.6L1632.0 1085.9L1632.1 1086.1L1632.1 1086.3L1632.1 1086.6L1632.1 1086.8L1632.0 1087.1L1632.0 1087.3L1631.9 1087.5L1631.8 1087.8L1631.6 1088.0L1612.7 1114.5L1621.4 1131.9L1639.4 1135.5L1668.6 1127.8L1705.9 1116.0L1716.6 1108.8L1720.4 1090.2L1720.4 1062.7L1720.4 1062.5L1720.4 1062.3L1724.4 1038.5L1724.4 1038.3L1728.1 1023.5L1717.2 1007.2L1690.6 995.8L1666.8 995.8L1657.6 1012.3L1657.4 1012.5L1657.3 1012.8L1657.1 1012.9L1656.9 1013.1L1641.1 1025.0L1627.8 1036.4L1622.3 1051.0ZM1701.5 706.5L1701.6 706.3L1701.6 706.1L1708.5 682.8L1693.4 684.3L1692.6 694.7L1698.2 723.7L1699.8 724.2L1701.5 706.5ZM765.2 755.5L781.6 754.1L781.8 754.1L782.0 754.1L782.2 754.1L782.4 754.2L804.8 760.2L805.0 760.2L805.2 760.3L805.4 760.4L805.6 760.5L825.0 774.0L825.2 774.1L825.4 774.3L825.5 774.5L825.7 774.7L835.7 790.4L853.4 797.2L870.6 790.6L873.4 775.6L873.4 775.4L879.3 753.1L882.3 730.9L882.3 730.7L882.4 730.5L891.3 700.8L894.2 680.1L894.3 679.9L894.3 679.7L894.7 678.5L719.3 678.5L719.7 679.1L719.8 679.3L734.7 707.6L749.5 729.9L749.6 729.9L761.5 749.3L761.5 749.4L765.2 755.5ZM653.5 1283.2L654.6 1268.4L650.3 1258.1L641.5 1263.4L641.3 1263.5L641.1 1263.6L640.8 1263.7L640.6 1263.7L640.4 1263.7L640.1 1263.7L639.9 1263.7L639.6 1263.7L639.4 1263.6L639.1 1263.5L638.9 1263.4L638.7 1263.2L638.5 1263.1L638.4 1262.9L638.2 1262.7L638.1 1262.5L638.0 1262.2L637.9 1262.0L637.8 1261.8L637.8 1261.5L637.7 1261.3L637.8 1261.0L637.8 1260.8L637.8 1260.5L637.9 1260.3L646.1 1239.9L630.1 1232.0L629.9 1231.9L629.7 1231.7L629.5 1231.6L629.4 1231.4L629.2 1231.2L629.1 1231.0L629.0 1230.8L628.9 1230.5L628.8 1230.3L628.8 1230.1L628.7 1229.8L628.8 1229.6L628.8 1229.3L628.8 1229.1L628.9 1228.8L629.0 1228.6L634.7 1217.3L627.2 1213.1L622.5 1213.1L622.5 1298.1L627.9 1298.1L628.1 1298.1L628.4 1298.2L628.6 1298.2L628.9 1298.3L629.1 1298.4L629.3 1298.6L636.4 1303.7L646.3 1302.8L653.5 1283.2Z"/><path fill="#b3d3de" stroke="#bcd8e1" stroke-width="2" d="M2555.6 708.8L2583.3 726.6L2599.2 742.5L2605.2 762.3L2595.2 768.3L2569.4 766.3L2549.6 758.4L2539.7 738.5L2543.7 718.7ZM2638.9 700.8L2656.7 686.9L2670.6 675.0L2674.6 708.8L2684.5 722.7L2678.6 744.5L2664.7 748.4L2666.7 728.6L2646.8 718.7ZM2710.3 833.8L2724.2 845.7L2742.1 857.6L2738.1 875.4L2722.2 871.5L2710.3 857.6ZM2704.4 778.2L2720.2 780.2L2718.3 788.1L2706.3 788.1ZM2559.5 867.5L2575.4 863.5L2577.4 871.5L2563.5 872.5ZM2469.4 835.7L2487.3 837.7L2491.3 877.4L2483.3 885.3L2475.4 867.5ZM2141.5 819.6L2165.4 821.9L2176.8 830.8L2169.9 846.2L2156.3 857.1L2136.9 863.6L2138.1 839.6ZM2188.1 839.6L2193.8 861.5L2181.3 889.4L2176.8 865.8ZM2220.0 808.4L2247.3 817.4L2262.1 820.5L2247.3 821.9L2226.8 824.1ZM2499.9 686.7L2527.2 715.7L2502.2 744.1L2497.6 730.0L2484.0 715.7L2490.8 696.4ZM2438.4 681.8L2438.4 725.2L2437.3 741.8L2433.9 720.5L2432.8 696.4ZM2966.4 970.5L2982.3 994.6L2975.5 1022.2L2980.0 1060.9L2970.9 1057.1L2961.8 1026.1L2961.8 990.6L2955.0 978.5ZM2902.7 1143.0L2895.8 1182.6L2877.6 1224.7L2884.5 1217.8L2900.4 1182.6L2908.3 1146.6ZM2816.2 1242.0L2838.9 1252.2L2823.0 1270.9L2811.6 1259.1ZM2584.1 1205.5L2614.8 1217.8L2611.4 1223.0L2579.5 1212.5ZM2268.9 1291.1L2267.8 1297.7L2248.4 1302.1L2247.3 1299.4ZM1997.0 1309.3L2014.1 1311.0L1995.8 1319.2ZM2060.7 1265.8L2077.8 1276.0L2063.0 1274.3ZM1708.0 1012.4L1713.7 1022.2L1705.7 1024.2ZM3419.2 1168.3L3432.9 1171.9L3428.3 1180.8L3416.9 1179.0ZM3228.1 1299.4L3261.1 1307.7L3250.8 1322.5L3225.8 1319.2L3221.2 1306.0ZM3182.5 1348.6L3193.9 1358.3L3191.7 1374.3L3180.3 1367.9ZM3139.3 821.9L3137.0 839.6L3130.2 874.4L3125.7 870.1L3127.9 844.0L3132.5 826.3ZM2336.0 974.5L2341.7 992.6L2339.5 1004.5L2323.5 1002.5L2337.2 990.6ZM2301.9 1024.2L2309.9 1030.0L2296.2 1028.1ZM2176.8 1047.5L2185.9 1055.2L2179.0 1059.0Z"/><path fill="none" stroke="#a48fae" stroke-width="1.5" stroke-opacity="0.6" d="M834.0 680.5L769.9 743.2L741.5 752.1"/><path fill="none" stroke="#cbbccf" stroke-width="1.6" d="M3120.7 1484.4L3116.0 1491.8L3112.9 1501.5M3120.7 1484.4L3130.8 1487.5L3138.1 1482.4L3140.4 1476.1L3154.5 1481.2L3160.3 1476.2L3165.4 1481.3L3171.6 1475.2M3324.4 1637.3L3322.8 1633.1L3312.6 1626.1L3313.5 1620.4L3306.5 1617.4L3303.7 1614.2L3292.7 1600.9L3287.5 1599.9L3285.8 1598.6L3283.9 1585.7L3278.5 1588.1L3273.9 1580.5L3263.0 1578.1L3263.4 1571.2L3259.5 1562.6L3246.3 1559.4L3248.5 1550.6L3243.1 1552.7L3233.0 1544.2L3232.5 1537.6L3222.9 1530.3L3223.4 1530.4L3215.6 1518.1L3214.1 1519.8L3203.4 1512.6L3205.1 1510.4L3196.5 1501.1L3192.2 1493.0L3183.3 1487.7L3183.5 1484.3L3177.2 1479.5L3171.6 1475.2M3089.1 1596.4L3091.1 1585.6L3088.2 1586.8L3093.3 1570.6L3097.8 1570.1L3094.8 1560.9L3098.5 1552.8L3097.1 1540.6L3108.7 1541.6L3105.4 1531.3L3105.0 1526.2L3108.5 1520.5L3113.8 1512.0L3112.9 1501.5M3412.5 1243.6L3416.3 1246.0M3416.3 1246.0L3419.7 1248.0L3413.1 1254.3L3417.1 1259.9L3418.4 1271.4L3429.3 1277.3L3432.6 1288.6L3426.4 1292.3L3432.4 1294.3L3440.6 1302.5L3439.3 1313.1L3445.8 1320.2L3442.8 1324.8L3446.5 1332.1M3412.5 1243.6L3416.0 1246.2L3416.3 1246.0M3416.3 1246.0L3431.3 1236.6L3428.7 1234.8L3438.8 1239.1L3451.3 1236.3L3449.7 1233.7L3463.3 1230.1L3473.0 1222.1L3471.6 1227.0L3486.5 1224.0L3487.1 1221.0L3498.6 1214.0L3501.2 1213.4L3506.2 1213.5L3516.9 1211.6M3446.5 1332.1L3450.1 1326.5L3456.8 1327.9L3462.5 1325.4L3471.3 1315.6L3485.6 1314.5L3492.6 1318.0L3499.1 1307.7L3501.6 1304.3L3513.4 1308.8L3517.4 1301.9L3523.1 1299.5M3523.1 1299.5L3522.7 1294.9L3525.4 1285.2L3523.3 1273.4L3523.7 1270.5L3530.0 1257.1L3530.7 1252.8M3516.9 1211.6L3522.9 1216.1L3520.6 1221.9L3521.5 1235.6L3524.4 1235.8L3528.3 1244.1L3530.7 1252.8M3598.4 1404.7L3598.2 1395.0L3594.8 1388.6L3589.8 1388.8L3578.8 1381.1L3575.3 1373.0L3570.3 1368.3L3574.0 1368.7L3569.2 1353.9L3558.6 1356.0L3552.1 1348.5L3550.3 1345.2L3543.3 1337.6L3542.4 1325.1L3534.8 1326.2L3535.9 1313.8L3530.8 1315.3L3524.4 1306.0L3523.1 1299.5M3598.4 1404.7L3601.6 1399.3L3614.7 1402.4L3615.8 1393.9L3621.5 1396.9L3632.4 1391.4L3636.3 1392.6L3648.1 1392.4L3653.7 1384.1L3655.3 1387.2L3665.6 1384.8L3668.8 1383.5L3678.5 1381.6L3690.6 1375.9L3688.9 1377.9L3700.3 1375.3L3705.0 1366.2L3717.5 1365.8L3717.6 1363.7L3728.7 1357.8L3734.8 1360.0L3741.5 1354.6L3750.3 1359.3L3758.7 1352.1L3763.9 1350.5L3771.1 1345.1L3778.0 1350.9M3324.4 1637.3L3329.4 1626.3L3327.9 1624.9L3325.1 1618.3L3334.2 1606.5L3330.4 1603.5L3332.8 1591.7L3338.3 1588.1L3333.6 1575.3L3335.0 1569.8L3338.0 1563.0M3598.6 1699.8L3599.6 1696.9L3598.3 1695.2M3598.3 1695.2L3595.1 1691.1L3590.6 1677.5L3583.5 1680.6L3583.8 1667.6L3574.9 1665.5L3570.5 1658.5L3563.7 1651.6L3564.3 1641.6L3556.8 1645.1L3559.3 1638.8L3554.1 1631.6L3552.8 1626.4L3540.5 1618.1L3539.0 1612.5L3535.2 1605.2L3537.9 1600.0L3527.4 1593.1L3525.4 1591.5L3520.1 1579.1L3519.9 1571.3L3515.5 1573.7L3510.9 1560.9L3506.6 1557.6L3499.6 1547.6L3495.6 1543.3L3494.6 1537.3L3489.1 1529.4L3488.3 1531.0L3485.1 1522.3L3480.2 1515.7M3338.0 1563.0L3346.2 1557.8L3353.6 1558.1L3358.8 1557.4L3364.7 1552.1L3369.3 1549.0L3378.7 1548.3L3386.2 1542.4L3390.7 1548.6L3396.3 1543.3L3405.6 1538.3L3417.4 1536.2L3422.0 1532.6L3421.7 1537.4L3432.2 1527.1L3438.5 1528.6L3448.7 1523.0L3450.4 1529.3L3462.3 1519.0L3465.0 1518.7L3475.2 1519.1L3480.2 1515.7M3598.4 1404.7L3596.6 1413.8L3588.0 1418.9L3582.5 1422.5M3582.5 1422.5L3577.8 1426.1L3567.9 1427.4L3563.1 1429.8L3550.1 1430.4L3541.8 1430.4L3540.4 1428.8L3537.0 1430.6L3524.4 1433.8L3521.8 1433.1L3509.7 1432.6L3503.3 1436.4L3494.5 1434.1L3490.0 1435.1L3482.3 1437.3M3446.5 1332.1L3441.1 1341.1L3442.8 1344.4L3435.2 1347.4L3430.2 1353.1L3429.4 1363.6L3420.9 1373.1L3419.7 1378.5L3421.2 1385.8L3411.3 1386.6L3414.8 1388.6L3402.6 1400.3L3403.6 1405.8M3403.6 1405.8L3410.1 1412.6L3419.4 1411.4L3428.2 1413.8L3430.0 1418.1L3435.2 1417.5L3443.9 1420.0L3453.9 1425.9L3456.3 1422.8L3461.3 1428.4L3469.8 1432.8L3479.5 1439.3L3482.3 1437.3M3598.6 1699.8L3598.3 1695.2M3598.3 1695.2L3598.0 1692.1L3599.0 1690.5L3595.8 1678.8L3600.1 1668.1L3594.7 1669.0L3599.4 1657.3L3591.8 1654.0L3597.2 1646.1L3599.8 1639.7L3593.7 1625.3L3591.9 1621.7L3593.7 1611.3L3590.0 1608.7L3593.8 1598.8L3597.3 1594.5L3587.4 1585.1L3594.5 1577.0L3593.1 1566.8L3588.8 1568.1L3591.2 1559.3L3586.9 1550.4L3590.0 1541.0L3590.6 1536.6L3593.7 1529.9L3587.4 1518.2L3584.4 1517.5L3583.5 1503.8L3583.8 1500.9L3589.9 1494.7L3589.3 1482.1L3580.9 1482.1L3583.6 1474.4L3583.5 1461.8L3582.2 1454.0L3588.2 1451.7L3582.2 1443.3L3582.2 1432.2L3586.8 1430.4L3582.5 1422.5M3480.2 1515.7L3485.0 1508.0L3481.8 1498.9L3476.2 1498.6L3484.5 1485.3L3485.1 1483.2L3479.4 1474.0L3486.1 1465.8L3486.2 1456.1L3480.8 1453.7L3479.3 1442.5L3482.3 1437.3M3120.7 1484.4L3122.1 1477.6L3118.9 1468.6L3110.3 1463.2L3108.0 1462.8L3106.7 1452.1L3102.5 1445.2L3102.9 1437.3L3097.3 1427.9L3102.5 1423.6L3094.3 1415.4L3092.3 1409.3L3087.4 1407.0L3088.1 1395.3L3089.3 1388.1L3082.6 1388.9L3078.8 1378.4L3083.5 1375.4L3077.7 1365.8M3150.6 1289.4L3153.3 1292.1L3165.0 1296.5L3173.4 1298.9L3179.4 1306.0L3178.3 1309.6L3183.4 1316.3L3190.7 1322.4L3200.1 1321.2L3202.7 1327.7L3208.5 1334.5L3213.6 1335.0L3223.5 1339.1M3150.6 1289.4L3145.9 1292.4L3143.0 1298.8L3136.7 1305.9L3128.1 1309.4L3120.6 1312.5L3123.1 1319.2L3116.1 1322.4L3109.9 1330.2L3104.1 1334.8L3094.6 1340.2L3091.0 1343.6L3090.7 1350.4L3082.4 1362.0L3078.2 1363.1M3171.6 1475.2L3180.8 1475.5L3188.1 1464.4L3188.7 1459.8L3199.2 1462.5L3202.3 1456.5L3211.8 1455.8L3214.2 1453.7L3221.7 1447.9L3226.4 1439.2L3240.1 1441.8L3244.6 1431.3L3244.3 1428.9L3252.3 1426.8L3260.6 1420.6L3268.2 1421.6M3077.7 1365.8L3076.1 1365.8L3076.2 1365.7M3076.2 1365.7L3078.2 1363.1M3223.5 1339.1L3223.7 1348.8L3231.1 1353.9L3231.4 1357.5L3239.1 1362.9L3235.7 1374.1L3246.9 1375.0L3243.0 1387.0L3252.1 1385.3L3251.9 1392.3L3260.8 1399.6L3265.5 1411.4L3260.7 1417.2L3268.2 1421.6M3338.0 1563.0L3336.8 1558.4L3341.0 1546.7L3333.5 1546.2L3336.7 1539.0L3339.3 1530.0L3340.6 1521.8L3336.7 1509.0L3339.0 1505.7L3337.0 1503.6L3333.1 1494.9L3332.1 1487.2L3339.6 1475.7L3336.9 1475.7L3337.7 1464.4L3333.7 1452.5L3336.1 1449.8M3268.2 1421.6L3273.6 1423.5L3278.8 1425.3L3285.0 1432.1L3297.1 1430.3L3299.6 1435.9L3308.4 1442.9L3314.3 1439.3L3326.4 1440.6L3330.0 1445.3L3336.1 1449.8M3403.6 1405.8L3397.9 1408.2L3386.0 1409.6M3336.1 1449.8L3344.3 1442.0L3348.9 1441.9L3352.4 1439.1L3361.6 1428.1L3361.7 1426.1L3366.4 1418.6L3372.7 1415.5L3382.5 1413.5L3386.0 1409.6M1985.0 1518.7L1985.8 1519.5L1985.9 1526.4L1976.3 1528.9L1972.4 1533.4L1976.0 1548.1L1968.4 1548.2L1967.7 1557.9M2064.8 1457.9L2061.4 1453.5L2059.2 1443.4L2058.5 1443.0M2067.3 1518.7L2059.5 1523.8L2056.5 1532.3L2050.1 1539.1L2054.0 1544.1L2045.2 1544.7L2043.0 1552.6L2036.0 1556.5L2031.7 1565.4L2031.0 1573.3L2019.8 1572.9L2018.1 1581.1L2012.6 1583.1L2005.4 1590.0L2004.6 1602.0L2004.5 1606.6L2000.6 1613.2L1992.5 1617.3L1982.4 1621.5L1983.3 1623.3L1978.4 1635.5L1972.9 1638.0L1966.6 1640.6L1967.9 1643.1L1959.5 1653.4M1959.5 1653.4L1957.0 1647.8L1960.2 1634.6L1963.0 1630.1L1962.8 1623.2L1962.9 1617.3L1962.2 1605.5L1960.7 1605.9L1965.0 1590.8L1968.8 1584.8L1961.7 1580.3L1963.9 1572.5L1967.6 1562.5L1967.7 1557.9M3089.1 1596.4L3088.4 1591.4L3086.3 1594.2M3112.9 1501.5L3106.0 1500.4L3094.7 1496.6L3087.6 1495.0L3088.4 1494.1L3079.9 1494.2L3066.9 1494.6L3066.1 1485.8M3064.0 1484.1L3060.0 1484.7L3050.3 1487.4M3086.3 1594.2L3080.8 1592.6L3078.1 1586.9L3072.8 1581.9L3071.2 1568.9L3065.3 1565.1L3060.8 1563.1L3056.8 1552.0L3047.6 1552.6L3048.6 1547.0L3034.9 1540.3L3030.8 1534.3L3033.1 1524.5L3029.7 1524.6L3018.3 1514.3L3015.5 1515.3L3014.2 1510.1M3512.0 656.9L3512.1 657.7L3521.7 666.3M3521.7 666.3L3530.8 666.7L3534.5 671.4L3541.9 675.9L3542.6 684.5L3552.6 686.2L3561.4 692.4L3559.6 689.9L3567.1 695.1L3580.4 701.7L3578.2 699.1L3592.1 707.7L3595.0 709.5M3400.2 689.3L3400.7 696.8L3399.9 708.2L3403.8 716.3L3407.6 716.0L3406.3 725.2L3409.6 735.7M3400.2 689.3L3398.6 685.9L3384.5 677.4L3382.1 676.1L3378.6 671.1L3370.8 663.0L3367.5 662.0L3356.3 658.9L3360.4 650.5L3346.4 652.5L3342.1 644.2L3338.8 639.9L3333.9 638.2L3332.2 638.6L3317.3 630.0L3319.1 628.8L3313.6 622.2L3306.6 615.2L3297.5 615.2L3297.8 612.4L3290.3 601.8L3285.5 601.8L3277.3 595.2M3277.3 595.2L3273.6 602.7L3268.2 608.1L3264.9 609.5L3260.4 618.3L3263.1 626.1L3253.0 630.0L3247.9 637.3L3243.0 640.1L3246.6 650.8L3238.5 658.2L3233.2 660.4L3227.0 667.9L3225.6 678.4L3224.2 686.8L3218.3 692.8L3216.9 690.6L3209.0 701.9L3213.3 705.9L3207.3 712.8L3200.8 719.8M3200.8 719.8L3209.8 720.8L3211.4 734.5L3214.7 733.5L3217.5 738.0L3225.4 748.7L3230.2 751.1L3235.4 758.5L3247.5 764.3L3249.2 768.2M3249.2 768.2L3253.2 771.4L3254.9 771.4M3254.9 771.4L3267.8 770.9L3265.9 773.8L3280.9 770.0L3280.5 769.3L3291.4 777.0L3299.4 778.3L3302.1 773.2L3314.5 777.2L3318.0 778.3L3324.3 773.0L3332.1 773.7L3341.2 777.4L3346.8 780.9L3351.4 780.3L3356.0 785.8L3368.5 787.2L3374.8 783.2M3374.8 783.2L3374.7 778.4L3385.7 769.6L3383.8 762.0L3388.6 762.1L3392.4 756.7L3400.1 748.0L3406.1 742.2L3409.6 735.7M3512.0 656.9L3506.6 659.9L3496.3 663.3L3488.6 665.1L3486.7 667.7L3475.2 669.7L3474.8 668.6L3460.9 671.3L3460.5 669.4L3444.2 674.9L3443.7 679.9L3433.8 684.1L3425.4 683.8L3417.1 678.5L3410.5 680.8L3407.2 687.8L3400.2 689.3M3521.7 666.3L3516.0 677.3L3515.3 676.1L3511.0 688.7L3515.9 689.6L3504.4 702.4L3504.1 711.1L3504.1 714.3L3500.1 722.6L3498.7 724.5L3500.6 729.0L3496.4 735.2L3493.0 745.3L3492.7 748.5L3487.2 758.7L3488.2 770.7L3482.8 770.2L3479.0 779.6M3479.0 779.6L3468.5 775.5L3462.3 773.5L3455.0 774.4M3455.0 774.4L3446.4 772.2L3445.1 762.7L3442.9 757.1L3433.0 751.6L3430.2 753.9L3418.6 747.9L3418.5 738.4L3409.6 735.7M3347.1 1221.8L3346.3 1228.8L3352.8 1232.7L3351.6 1244.2L3350.2 1251.2L3355.4 1254.6L3356.3 1263.3L3356.1 1275.5L3351.0 1282.6L3360.1 1284.1L3351.3 1289.4L3361.6 1295.5L3361.9 1304.1L3361.0 1310.7L3356.3 1323.7L3356.4 1327.4L3365.5 1338.4L3366.1 1348.1L3363.1 1350.5M3347.1 1221.8L3338.0 1224.8L3341.2 1235.0L3329.2 1238.8L3326.7 1243.7L3321.0 1245.3L3325.5 1253.9L3319.9 1257.6L3311.6 1263.5L3306.6 1269.5L3304.7 1274.9L3300.9 1284.1L3290.2 1288.3L3289.6 1299.6L3283.7 1298.2L3280.8 1306.7M3280.8 1306.7L3291.8 1313.9L3295.8 1311.2L3296.6 1314.5L3301.8 1315.6L3312.6 1322.7L3319.4 1325.6L3320.2 1332.2L3333.0 1334.1L3338.3 1338.9L3349.0 1344.1L3352.7 1342.8L3355.0 1346.3L3363.1 1350.5M3347.4 1220.5L3352.0 1220.0L3349.3 1221.0M3349.3 1221.0L3347.1 1221.8M3347.4 1220.5L3349.3 1221.0M3349.3 1221.0L3353.5 1222.1L3358.3 1230.6L3364.1 1229.3L3380.6 1228.3L3384.7 1232.1L3388.2 1232.9L3394.2 1241.9L3408.1 1245.2L3412.5 1243.6M3386.0 1409.6L3379.0 1405.0L3379.2 1397.9L3378.9 1388.0L3380.6 1378.3L3375.8 1380.3L3370.9 1371.1L3373.2 1361.0L3367.0 1359.5L3363.1 1350.5M3223.5 1339.1L3228.6 1337.6L3235.2 1332.1L3243.7 1330.1L3247.2 1326.0L3255.8 1318.3L3262.8 1315.2L3272.2 1313.7L3276.6 1310.6L3280.8 1306.7M1854.4 1488.0L1848.5 1481.1L1839.5 1484.0L1837.7 1475.8L1832.0 1474.5L1823.4 1463.9L1823.6 1462.7L1814.7 1458.9M1814.7 1458.9L1811.4 1467.4L1809.2 1473.0L1796.0 1473.3L1799.1 1482.9L1787.3 1481.5L1783.9 1486.2L1780.3 1498.4L1777.2 1500.1L1768.2 1504.8L1767.6 1511.0M1642.8 1131.0L1642.4 1129.0L1650.1 1119.1L1658.7 1115.1L1655.4 1108.8L1659.3 1107.5L1665.7 1097.3M1683.9 999.3L1683.7 999.4L1681.1 1014.8L1684.6 1021.9L1677.7 1022.5L1674.2 1033.0L1676.0 1039.5L1675.7 1047.8L1673.0 1057.2L1669.9 1065.6L1672.0 1064.1L1668.1 1076.1L1667.6 1083.6L1665.3 1087.8L1665.7 1097.3M1785.8 1061.1L1789.2 1061.2L1799.6 1057.1L1805.7 1052.8L1814.1 1046.1L1819.0 1045.2M1819.0 1045.2L1810.6 1043.6L1804.5 1039.4L1799.6 1026.2L1793.0 1028.0L1796.0 1019.3L1787.6 1012.8L1784.6 1012.1L1771.6 1000.8L1771.5 995.6L1767.4 993.1L1755.9 991.0L1751.2 985.8L1744.1 984.3L1740.3 978.6L1736.5 970.2M1716.9 1066.7L1712.5 1063.4L1718.5 1052.1L1706.7 1044.8L1710.5 1036.0L1707.2 1027.5L1704.1 1026.6L1701.5 1018.9L1696.1 1013.1L1693.9 1006.9L1697.7 1002.6M1736.5 970.2L1729.6 971.1L1720.5 978.7L1718.5 980.4M1761.7 1069.8L1764.0 1069.3M1665.7 1097.3L1676.6 1091.9L1682.2 1093.6L1685.2 1082.7L1687.9 1086.3L1694.7 1078.7L1705.4 1071.2L1711.3 1068.0L1716.9 1067.7M1719.2 884.0L1724.0 886.3L1730.5 891.6L1733.9 897.3L1743.8 905.2M1719.2 884.0L1715.9 885.6L1709.1 882.3L1702.6 888.7L1701.6 888.9M1743.8 905.2L1746.4 908.2L1745.5 917.9L1739.7 931.2L1742.9 933.6M1742.9 933.6L1743.3 943.4L1736.7 951.6L1743.5 959.6L1740.3 966.2L1736.5 970.2M1814.7 1458.9L1818.4 1449.8L1816.1 1439.0M1767.6 1511.0L1763.3 1507.5L1763.3 1501.2L1754.8 1495.3L1753.6 1488.3L1745.9 1481.8L1749.0 1467.8L1746.0 1460.8L1736.0 1456.3L1735.4 1449.9M1772.6 1409.8L1774.3 1410.2L1781.4 1418.2L1786.6 1423.6L1794.3 1422.2L1793.2 1428.6L1806.9 1429.5L1810.8 1438.4L1816.1 1439.0M1735.4 1449.9L1737.8 1437.9L1736.5 1438.7L1742.1 1429.5L1744.9 1419.6L1745.0 1412.6L1752.5 1408.8M1817.6 1299.7L1819.5 1298.9L1819.6 1296.4M1837.8 1378.2L1839.8 1383.2L1834.2 1389.1L1835.1 1404.1L1833.6 1406.7L1836.7 1419.3L1833.0 1418.5L1830.2 1430.2M1837.8 1378.2L1838.9 1370.4L1842.1 1362.3L1839.0 1357.8L1836.0 1349.4L1838.9 1346.0L1837.0 1333.3L1841.6 1323.0L1840.1 1322.0L1836.6 1312.9M1816.1 1439.0L1823.8 1434.1L1830.2 1430.2M1836.6 1312.9L1833.5 1311.3L1827.6 1304.4L1819.6 1296.4M1803.6 936.2L1802.7 935.8L1790.2 938.2L1789.6 939.9L1777.6 932.8L1772.0 939.6L1761.2 937.7L1754.1 932.9L1745.7 932.2L1742.9 933.6M1819.0 1045.2L1824.0 1044.1L1823.5 1046.8M1840.3 1034.3L1832.8 1035.3L1833.4 1042.0L1823.5 1046.8M2179.5 1472.0L2172.8 1478.5L2167.0 1479.0L2164.2 1479.5M3089.9 777.6L3092.2 787.7L3089.6 796.7L3093.5 798.0L3090.4 810.0L3090.3 811.1L3095.9 821.9L3092.8 830.6L3097.0 832.5L3091.8 839.2L3092.9 850.9L3097.7 859.9L3094.6 865.5M3089.9 777.6L3084.5 773.1L3078.3 768.2L3074.9 769.8L3068.7 759.9L3060.8 762.4L3053.0 756.3M3094.6 865.5L3087.5 870.4L3084.3 869.7L3076.4 869.7L3069.9 865.4L3061.0 872.0L3052.9 868.6L3040.4 872.8L3040.8 870.4L3027.6 870.8L3019.3 876.3L3020.9 878.4L3007.7 878.3L2997.7 880.6L2993.1 873.1L2989.0 875.4L2978.3 875.5L2972.9 881.4L2969.4 877.1L2962.5 878.7L2949.3 884.8L2943.3 882.7L2938.5 882.5L2933.6 883.3L2927.0 890.2L2916.8 883.3L2912.1 884.2L2902.2 889.0L2890.7 892.0L2890.2 892.5L2879.8 892.6L2874.6 890.7L2866.6 894.3M3053.0 756.3L3049.5 761.9L3041.6 762.3L3029.7 763.3L3019.9 758.9L3013.3 759.4L3011.6 762.7L3002.1 759.7L2992.3 761.0L2986.0 759.7L2983.4 763.6L2973.2 761.1L2968.6 761.8L2957.1 766.2L2954.2 771.0L2947.5 771.5L2942.0 770.0L2932.8 764.1L2920.5 764.3L2916.2 769.9M2916.2 769.9L2914.0 777.3L2905.8 778.0L2897.2 782.2L2894.2 795.7L2885.1 791.4L2877.9 799.7L2875.3 806.4M2875.3 806.4L2877.9 816.5L2872.0 816.6L2867.0 824.3L2872.3 834.6L2872.9 846.1L2869.5 848.9L2868.3 852.5L2859.7 864.0L2862.3 867.5L2858.3 872.8L2859.3 884.7M2866.6 894.3L2867.0 891.6L2859.3 884.7M3389.3 920.0L3391.5 924.9L3384.8 920.2M3389.3 920.0L3391.6 915.7L3394.1 909.9L3401.7 896.5L3396.4 890.7L3405.1 885.7L3402.3 883.6L3413.1 873.3L3408.6 871.0L3416.5 856.2L3417.4 855.1L3426.0 847.1L3426.5 837.7L3425.5 838.0L3429.9 823.4L3435.0 817.0L3434.1 813.7L3440.9 808.9L3445.1 800.3L3441.7 796.5L3444.6 787.4L3451.0 782.8L3455.0 774.4M3374.8 783.2L3376.5 787.9L3375.4 799.7L3373.2 801.4L3377.1 813.3L3368.2 816.9L3377.0 824.1L3370.6 837.0L3374.5 842.7L3373.2 844.0L3366.3 860.7L3372.9 858.6L3364.9 867.9L3373.3 874.9L3370.3 889.3L3369.5 896.5L3365.3 896.1L3367.2 906.8M3367.2 906.8L3368.3 913.8L3375.0 920.5L3384.8 920.2M3249.2 768.2L3254.9 771.4L3254.9 771.4M3254.9 771.4L3259.5 777.4L3260.1 783.0L3266.4 797.1L3271.3 794.5L3274.3 806.2L3277.6 811.9L3279.1 819.1L3284.5 820.2L3280.7 831.1L3286.6 835.8L3287.4 845.6L3291.2 852.7L3302.6 855.2L3299.3 863.3L3303.8 867.4L3306.4 879.1L3314.3 879.1L3313.4 889.1L3321.1 893.0M3367.2 906.8L3363.0 908.0L3347.9 900.9L3342.2 902.5L3332.9 898.7L3333.5 898.0L3321.1 893.0M3089.9 777.6L3091.5 770.0L3099.0 772.7L3110.4 767.6L3115.5 763.1L3123.6 762.1L3133.2 759.5L3138.5 757.9L3145.4 752.6L3143.9 748.8L3158.6 742.9L3165.4 737.0L3172.6 736.2L3176.7 730.9L3179.2 728.5L3186.0 722.5L3193.7 728.0L3200.8 719.8M3094.6 865.5L3097.3 879.8L3096.9 885.6M3096.9 885.6L3098.8 886.3M3098.8 886.3L3100.3 886.9M3100.3 886.9L3106.5 889.5L3115.9 889.2L3115.7 884.7L3124.1 882.9L3129.3 892.1L3143.2 887.1L3148.7 892.1L3157.0 892.9L3160.4 886.5L3170.4 889.1L3175.4 890.2L3181.5 896.7L3184.8 892.9L3196.7 893.6L3206.6 892.8L3213.4 896.2L3220.9 890.7L3220.4 893.2L3234.4 891.0L3234.9 898.6L3249.3 893.7L3250.8 899.4L3260.3 900.5L3268.0 896.1L3270.0 894.4L3281.4 896.8L3284.1 904.9L3295.0 901.7L3300.6 901.3M3321.1 893.0L3315.8 896.8L3309.3 896.6L3300.6 901.3M3328.6 1181.8L3327.4 1183.9L3330.0 1193.3L3334.4 1197.2L3341.1 1212.3L3346.1 1211.7L3347.4 1220.5M3328.6 1181.8L3324.2 1179.1L3310.4 1180.8L3306.3 1185.2L3299.6 1186.1L3289.0 1188.7L3284.3 1188.2L3274.1 1188.7L3268.9 1189.5L3267.6 1188.2L3255.2 1182.1L3247.2 1191.6L3239.8 1189.7L3236.9 1190.2L3225.8 1185.5L3217.8 1194.5L3214.7 1190.2M3150.6 1289.4L3149.6 1283.9L3151.7 1272.6L3146.8 1263.5L3154.8 1257.7L3156.1 1253.0L3151.6 1247.3M3214.7 1190.2L3211.7 1191.3L3207.1 1197.2L3197.6 1204.7L3189.8 1206.7L3191.4 1211.8L3182.0 1221.4L3175.2 1220.5L3169.8 1227.1L3166.1 1234.5L3161.9 1241.5L3152.4 1244.2L3151.6 1247.3M3078.2 1363.1L3075.5 1356.7L3061.3 1355.0L3056.0 1351.4L3056.0 1349.3M2983.4 1305.0L2977.1 1306.6L2971.4 1295.0L2965.8 1299.6L2961.7 1294.0L2951.7 1287.4L2949.9 1284.1M2949.9 1284.1L2950.4 1274.5L2956.2 1269.4L2953.1 1268.9L2959.1 1254.2L2956.7 1252.2L2964.1 1239.2L2966.0 1239.7L2969.0 1227.9L2971.0 1225.0L2974.8 1213.7L2978.7 1215.0L2980.4 1207.4L2979.0 1201.2L2979.5 1187.7L2986.0 1187.8L2983.2 1174.3L2989.7 1170.4M2989.7 1170.4L2992.0 1171.9L2999.9 1171.5L3012.8 1177.5L3021.6 1177.8L3025.9 1176.0L3035.5 1180.4L3037.6 1185.2L3049.2 1187.2L3056.5 1190.6L3055.6 1194.8L3062.4 1198.5L3071.8 1192.9L3083.7 1196.0L3085.0 1198.3L3092.8 1202.0M3151.6 1247.3L3147.4 1238.0L3138.6 1234.9L3137.3 1228.7L3129.2 1226.8L3121.8 1225.3L3118.5 1216.5L3107.9 1211.8L3109.2 1207.5L3095.1 1206.7L3092.8 1202.0M3328.6 1181.8L3332.9 1178.4L3331.2 1164.6L3335.8 1160.9L3342.1 1151.9L3346.1 1145.6M3516.9 1211.6L3523.0 1204.5L3524.8 1198.8L3523.4 1185.5M3523.4 1185.5L3514.3 1187.8L3508.9 1176.8L3507.1 1175.2L3491.4 1175.0L3487.3 1179.6L3486.3 1172.1L3476.1 1174.3L3472.1 1170.2L3462.4 1162.7L3452.9 1166.0L3449.5 1165.4L3445.8 1164.9L3432.0 1153.9L3432.2 1156.7L3418.3 1155.9L3412.2 1149.2L3406.5 1150.0L3402.8 1143.4L3396.7 1146.8L3387.2 1145.1L3383.7 1136.4L3383.3 1136.5M3383.3 1136.5L3373.9 1139.2M3346.1 1145.6L3352.8 1145.8L3362.1 1143.9L3363.7 1145.4L3373.9 1139.2M1837.8 1378.2L1845.1 1381.0L1846.0 1393.7L1848.1 1393.6L1860.1 1403.9L1857.2 1407.7L1862.9 1412.4L1871.4 1412.5L1870.4 1418.8L1877.6 1427.1M1830.2 1430.2L1836.0 1426.5L1842.9 1431.1L1853.9 1428.7L1863.6 1438.2L1870.9 1434.7M1870.9 1434.7L1875.0 1429.5L1877.6 1427.1M1854.4 1488.0L1862.3 1482.6L1862.9 1478.2L1867.1 1475.3L1877.8 1468.7M1870.9 1434.7L1869.2 1441.9L1879.0 1454.4L1879.4 1461.6L1877.8 1468.7M1967.7 1557.9L1964.7 1554.3L1963.7 1543.5L1957.4 1538.9L1947.9 1538.5L1947.1 1533.1L1945.5 1524.8L1939.6 1518.7M1877.8 1468.7L1880.3 1467.3L1887.5 1472.1M1768.5 879.1L1768.3 878.1L1769.5 878.0M1774.9 871.5L1774.3 864.0L1779.3 861.3M1694.5 1406.8L1689.8 1411.1L1682.1 1414.3L1684.9 1421.0L1676.9 1430.5L1672.8 1428.9L1669.2 1439.3L1664.7 1443.3L1657.0 1449.0L1655.9 1449.3M1735.4 1449.9L1729.3 1450.8L1723.6 1452.3L1710.3 1454.8L1710.5 1459.0L1698.9 1454.9L1695.7 1462.2L1683.4 1464.6L1684.1 1461.6L1671.0 1465.9L1669.4 1462.4L1658.8 1464.6M2240.5 1088.9L2236.0 1097.2L2227.2 1103.7L2225.8 1107.6L2223.9 1108.9L2219.4 1112.8L2205.4 1121.1L2209.1 1130.4L2204.6 1131.9L2195.0 1137.1M2240.5 1088.9L2249.4 1096.8L2246.1 1104.9L2254.3 1110.9M2195.0 1137.1L2197.6 1145.0L2195.2 1152.0L2191.5 1162.2L2193.4 1171.6M2193.4 1171.6L2199.4 1166.9L2201.2 1157.8L2209.6 1160.5L2219.6 1151.2L2220.6 1149.6L2225.7 1146.0L2238.9 1137.6L2241.6 1138.3L2246.7 1131.6M2254.3 1110.9L2254.2 1120.0L2251.3 1122.5L2246.7 1131.6M2094.4 1399.6L2097.1 1394.7L2099.9 1392.3M2179.5 1472.0L2180.4 1460.3L2187.4 1455.3M2099.9 1392.3L2105.2 1392.4L2112.2 1390.2M2112.2 1390.2L2119.2 1387.9L2127.3 1388.2L2138.2 1393.0M2187.4 1455.3L2180.0 1447.8L2179.6 1446.1M2166.4 1425.6L2158.0 1422.4L2153.1 1412.6L2148.0 1412.3L2152.5 1403.7L2142.0 1398.3L2139.3 1393.7M1823.5 1046.8L1829.9 1054.5L1831.6 1057.1L1833.5 1067.7L1828.1 1078.0L1836.7 1081.5L1831.0 1093.6L1839.6 1098.0L1843.7 1099.6L1840.9 1111.4M1840.9 1111.4L1833.6 1114.0L1830.4 1126.3L1833.6 1126.8L1826.0 1133.9L1827.6 1145.2L1828.4 1148.5L1825.6 1155.7L1817.7 1159.8M1819.6 1296.4L1820.9 1291.2L1816.8 1281.9L1825.3 1276.3L1822.8 1272.4L1825.2 1260.0L1825.1 1254.6M1822.8 1245.3L1825.1 1254.6M2567.9 1480.6L2568.3 1482.7L2564.0 1485.8M2514.4 1481.5L2509.5 1487.0L2504.2 1493.3L2507.6 1491.6L2504.3 1502.0L2502.4 1508.3L2494.2 1517.9L2487.5 1522.4L2484.3 1523.6L2481.0 1535.7L2480.9 1540.4L2475.7 1546.5L2476.3 1546.4L2471.4 1558.7L2468.1 1562.7M2468.1 1562.7L2465.9 1571.6L2467.3 1576.2L2474.4 1589.4L2475.9 1591.6L2472.3 1602.9L2474.9 1606.8L2476.6 1613.6L2478.2 1621.8L2470.6 1632.0L2475.1 1636.9M2564.0 1485.8L2556.9 1493.6L2552.4 1502.8L2553.7 1506.3L2546.1 1511.3L2545.0 1513.5L2545.8 1517.4L2538.9 1524.0L2539.1 1538.1L2527.3 1539.8L2528.1 1548.4L2527.2 1550.7L2525.7 1555.2L2514.1 1567.5L2510.4 1567.3L2510.7 1574.8L2503.7 1586.8L2503.3 1591.4L2497.5 1598.7L2493.7 1604.7L2494.0 1611.4L2492.1 1614.0L2486.1 1622.3L2481.7 1620.8L2482.8 1633.9L2475.1 1636.9M2769.6 386.0L2774.9 395.4L2776.9 394.5L2775.4 405.5L2773.5 408.7L2771.8 418.8L2776.3 423.8L2775.9 433.8L2780.8 441.2L2775.7 451.2L2778.7 459.0L2785.8 457.9L2782.7 473.2L2781.7 476.1L2781.9 478.0L2781.7 486.0L2783.4 498.1L2787.1 508.4L2789.3 509.6L2792.9 519.4L2789.7 528.8L2791.9 530.8L2792.2 537.3L2796.8 543.8L2797.7 549.0L2789.0 561.0L2791.9 567.6L2791.9 578.0L2798.4 583.5L2801.9 593.7L2800.3 597.9L2794.5 598.4L2799.7 614.6L2799.4 617.7L2802.2 624.1M2767.9 386.0L2760.5 394.4L2765.5 400.6L2765.1 409.3L2763.2 418.8L2756.3 430.3L2755.8 434.6L2751.0 442.9L2758.8 442.7L2755.1 451.3L2747.8 459.3L2751.5 472.2L2753.5 479.6L2748.4 483.2L2742.5 490.9L2745.0 494.2L2747.1 500.2L2738.2 506.2L2736.9 517.5L2742.1 520.2L2737.7 531.4L2737.0 536.8L2735.4 539.8L2729.2 550.9L2729.7 561.2L2728.3 568.9L2727.0 568.6L2728.0 578.5L2725.2 589.3L2722.7 595.3L2727.5 600.2L2722.8 611.9L2722.5 611.5L2715.8 617.5L2717.0 624.5L2718.8 634.9L2716.0 642.6M2802.2 624.1L2793.1 625.8L2792.2 624.6L2777.2 626.8L2771.7 634.4L2768.4 631.1L2755.8 628.8L2748.2 638.4L2746.2 633.0L2738.8 633.6L2730.4 637.9L2719.2 643.5L2716.0 642.6M2886.7 1131.4L2890.8 1124.3L2887.3 1118.7L2891.9 1111.4L2890.4 1106.6L2891.5 1092.6L2897.4 1085.1L2896.2 1082.8L2907.2 1072.0L2901.9 1068.2L2903.4 1058.3L2908.1 1052.0M2886.7 1131.4L2882.4 1127.4L2870.8 1120.5L2868.5 1126.3L2866.0 1114.1L2855.6 1114.6L2846.2 1113.1L2843.0 1111.2L2834.7 1109.1L2833.7 1101.2L2824.3 1098.1M2908.1 1052.0L2896.7 1051.1L2888.7 1052.2L2886.6 1050.3L2881.5 1044.2L2868.9 1047.9M2868.9 1047.9L2866.1 1056.5L2855.1 1057.3L2849.6 1065.5L2851.3 1068.7L2846.1 1074.5L2841.3 1079.1L2839.0 1086.3L2824.3 1088.4L2824.3 1098.1M3233.3 982.7L3240.1 980.9L3243.7 968.4L3250.5 968.6L3247.4 959.8L3257.5 950.6L3255.7 948.7L3268.5 949.7L3267.4 943.4L3276.5 937.5L3279.0 933.1L3284.1 927.5L3287.8 914.6L3291.8 912.0L3294.5 905.5L3300.6 901.3M3233.3 982.7L3236.9 989.1L3240.2 993.7M3384.8 920.2L3379.3 924.6L3379.4 933.6L3375.8 941.9L3370.8 947.2L3369.0 956.3L3370.6 963.1L3366.0 964.5L3367.4 973.8L3359.2 978.3L3356.7 989.1L3358.2 993.6L3354.6 997.6L3349.1 1005.7L3345.0 1012.4L3346.8 1022.8L3341.5 1027.2M3324.1 1051.2L3325.5 1042.5L3335.7 1040.7L3338.9 1034.5L3341.5 1027.2M3324.1 1051.2L3324.0 1048.5L3319.9 1050.3M3319.9 1050.3L3309.4 1044.5L3303.0 1046.2L3301.8 1038.9L3300.1 1035.9L3286.6 1026.9L3279.2 1027.1L3279.4 1019.7L3269.6 1013.2L3264.6 1013.2L3262.6 1010.3L3256.2 1001.8L3245.6 996.2L3240.2 993.7M3096.6 887.1L3097.5 886.8M3097.5 886.8L3098.8 886.3M3098.8 886.3L3101.8 885.3L3100.3 886.9M3100.3 886.9L3097.5 889.8M3096.6 887.1L3086.9 888.4L3088.2 897.5L3075.9 901.0L3075.2 900.2L3061.9 907.1L3057.4 904.0L3056.3 910.7L3044.9 915.7L3037.2 913.4L3032.2 920.4L3022.1 923.8L3023.2 926.9L3016.1 933.2L3004.9 930.6L3003.4 940.0L2993.2 939.3L2992.5 949.9L2980.0 950.1L2977.0 950.9L2965.3 954.4L2965.1 960.6L2957.4 959.3L2951.0 966.5M3097.5 889.8L3092.3 894.7L3091.9 902.1L3094.4 906.4L3092.9 914.4L3089.2 921.3L3084.2 929.4L3076.3 940.4L3081.6 941.9L3078.9 950.8L3078.7 953.4L3070.2 961.9L3070.3 974.2L3070.1 978.7L3063.2 988.0L3058.0 989.4L3062.1 998.0L3062.1 1001.4L3054.4 1009.4L3047.5 1015.0L3046.0 1024.5L3047.0 1032.7L3043.2 1041.5L3043.1 1051.1L3037.3 1053.2L3038.1 1058.6L3035.8 1066.7M2951.0 966.5L2955.3 971.1L2956.2 980.0L2951.5 990.1L2954.5 994.2L2950.4 1008.4L2954.0 1007.5L2957.5 1019.2L2955.0 1024.6L2960.9 1032.2L2958.1 1041.3M2958.1 1041.3L2962.2 1051.7L2966.5 1052.0L2969.4 1060.5L2979.4 1064.2L2981.7 1068.0L2990.4 1076.1L2995.7 1081.1L2997.3 1088.2M2997.3 1088.2L3006.1 1079.9L3007.3 1085.7L3018.4 1079.2L3023.0 1073.6L3026.4 1067.0L3035.8 1066.7M3096.9 885.6L3097.5 886.8M3097.5 886.8L3098.2 888.3L3096.6 887.1M3233.3 982.7L3223.6 982.2L3215.1 979.9L3208.1 976.9L3202.2 975.4L3193.1 972.8L3190.6 967.3L3180.2 970.8L3175.2 968.2L3170.3 965.8L3157.4 962.6L3156.1 961.9L3145.5 959.3M3145.5 959.3L3144.0 952.1L3137.0 952.4L3136.7 943.4L3125.6 937.2L3120.8 934.7L3126.2 926.8L3115.2 922.2L3110.3 916.3L3109.7 902.3L3109.4 900.8L3104.8 897.5L3097.5 889.8M2866.6 894.3L2870.7 904.1L2871.2 910.6L2876.3 908.1L2880.1 914.6L2881.3 926.4L2885.5 927.9L2893.1 937.5M2893.1 937.5L2897.5 938.5L2910.2 948.0L2916.1 952.1L2918.2 953.3L2923.1 957.9L2934.8 959.1L2935.4 956.0L2948.8 963.8L2951.0 966.5M2908.1 1052.0L2916.4 1054.1L2918.8 1051.0L2929.2 1050.3L2936.2 1042.9L2948.4 1042.2L2953.4 1046.1L2958.1 1041.3M2893.1 937.5L2886.7 945.8L2884.3 947.5L2878.6 961.2L2876.3 963.1L2873.7 964.7L2872.3 978.3L2869.7 980.8L2859.1 987.1L2860.5 996.5L2854.3 1001.3M2868.9 1047.9L2865.5 1040.4L2860.6 1036.6L2861.3 1024.7L2862.0 1013.9L2858.9 1007.6L2854.3 1001.3M2911.9 1155.5L2922.4 1152.3L2924.5 1158.5L2934.0 1156.8L2942.4 1156.1L2948.5 1154.8L2959.5 1158.2L2967.3 1162.0L2972.4 1163.7L2975.1 1166.0L2986.3 1164.1M2911.9 1155.5L2903.5 1153.1L2902.2 1145.2L2896.2 1136.8L2886.7 1131.4M2986.3 1164.1L2989.1 1161.1L2985.4 1145.0L2988.7 1141.5L2987.2 1131.0L2995.5 1125.1L2989.4 1115.4L2994.8 1107.9L2994.9 1103.8L2995.6 1095.9L2997.3 1088.2M3214.7 1190.2L3216.3 1177.8L3215.5 1172.0L3204.9 1170.2L3208.5 1160.3L3203.2 1155.2L3202.4 1147.1L3199.8 1138.0L3202.3 1128.4L3199.1 1122.1M3092.8 1202.0L3094.1 1190.7L3097.2 1190.0L3093.8 1181.7L3101.0 1170.3L3103.6 1171.0L3097.1 1157.9L3099.0 1151.0L3100.4 1146.4L3103.6 1137.6L3107.1 1131.4L3111.9 1127.9L3106.6 1116.0L3107.0 1110.1L3109.5 1106.9L3114.9 1098.0M3199.1 1122.1L3194.9 1125.1L3182.1 1113.5L3180.6 1115.2L3175.3 1113.0L3162.1 1107.8L3161.5 1110.2L3149.4 1107.4L3145.6 1109.3L3135.7 1100.8L3128.0 1105.9L3121.0 1101.6L3114.9 1098.0M2989.7 1170.4L2988.6 1166.9L2986.3 1164.1M3035.8 1066.7L3044.2 1065.1L3051.7 1072.2L3054.6 1068.2L3070.3 1075.2L3069.3 1072.6L3083.2 1075.8L3089.2 1069.6L3095.2 1076.3L3104.9 1075.2M3114.9 1098.0L3113.8 1087.4L3109.6 1084.3L3104.9 1075.2M3576.6 752.4L3579.0 755.6L3577.7 766.6L3580.1 774.8L3576.3 786.1L3580.9 792.4M3576.6 752.4L3567.8 757.4L3561.2 757.0L3559.6 754.8L3552.1 756.5L3547.4 758.1L3538.6 763.7L3526.4 766.0L3522.9 768.3L3512.4 771.5L3507.5 778.1L3501.6 774.8L3493.4 782.3L3487.6 781.1L3482.7 781.8M3580.9 792.4L3578.7 795.9L3572.5 799.3L3560.6 801.5L3558.5 814.4L3550.6 814.6L3550.7 817.6L3539.2 824.6L3536.5 833.3L3535.7 830.9L3526.9 837.2L3516.2 842.1L3519.5 845.2L3509.9 851.8M3482.7 781.8L3486.3 790.9L3483.7 800.0L3486.9 800.8L3495.7 805.0L3495.0 813.0L3498.7 818.9L3498.2 828.0L3500.3 833.7L3504.1 844.9L3509.9 851.8M3595.0 709.5L3588.3 719.9L3588.0 721.3L3583.2 734.4L3578.2 740.5L3575.6 749.7L3576.6 752.4M3706.7 958.1L3701.4 953.3L3701.7 942.6L3689.3 942.8L3690.2 937.4L3682.8 929.5L3677.5 923.1L3674.1 918.9L3670.0 910.1L3669.1 902.5L3666.3 900.9L3656.3 891.4L3654.7 889.5L3652.5 882.5L3645.1 882.0L3639.4 877.2L3641.2 871.6L3637.4 858.5L3631.7 856.3L3621.3 854.5L3621.4 846.9L3616.2 833.9L3614.9 829.1L3604.5 827.8L3599.5 820.6L3600.4 811.2L3595.5 805.6L3589.3 805.3L3587.1 793.5L3580.9 792.4M3479.0 779.6L3477.7 785.3L3482.7 781.8M3389.3 920.0L3395.4 920.7L3402.5 924.9L3413.4 925.8L3417.3 926.4L3425.7 924.1L3437.3 933.2L3442.8 934.9L3446.9 934.8L3451.9 935.3L3463.9 938.7L3469.0 935.7M3509.9 851.8L3512.5 862.6L3506.1 868.8L3507.5 871.1L3505.7 883.0L3509.7 890.5L3507.2 890.8L3501.4 901.8L3501.2 906.6L3499.4 911.8L3504.8 919.6L3505.4 927.7L3501.2 936.5M3469.0 935.7L3480.5 933.9L3482.8 935.0L3488.3 935.6L3501.2 936.5M1743.8 905.2L1752.7 900.4M1752.7 900.4L1754.0 899.8L1751.9 901.4L1752.7 900.4M1752.7 900.4L1758.5 893.1M1719.2 884.0L1712.4 882.1L1711.7 874.9M2116.4 1028.3L2120.5 1034.8L2121.6 1037.4L2123.8 1039.8L2134.0 1050.3L2134.8 1055.0M2134.8 1055.0L2129.7 1052.2L2121.0 1058.0L2112.1 1054.5L2108.1 1051.3L2100.7 1053.5L2097.2 1050.9L2087.4 1049.3L2075.9 1049.9L2067.6 1053.9L2060.8 1056.4L2052.9 1054.5L2049.9 1053.1M2071.0 999.8L2061.1 1008.7L2057.9 1015.1L2050.9 1014.4L2051.4 1018.5L2047.1 1026.2M2049.9 1053.1L2047.7 1051.0M2165.3 1053.6L2160.3 1062.1L2148.3 1065.2M2165.3 1053.6L2164.1 1048.0L2153.9 1045.0L2150.3 1036.6L2152.8 1025.4L2148.8 1019.7L2148.4 1018.7M2148.3 1065.2L2144.7 1058.1L2134.8 1055.0M2132.2 994.3L2125.8 992.4L2123.7 993.4M2144.1 1078.1L2143.4 1088.0L2129.5 1090.9L2130.8 1095.3L2118.5 1103.9L2118.1 1105.0M2144.1 1078.1L2148.1 1084.4L2156.5 1086.6L2153.3 1098.4L2160.3 1095.0L2163.6 1109.9L2174.2 1107.4L2172.9 1119.6L2182.8 1121.9L2182.0 1125.5L2194.8 1126.8L2195.0 1137.1M2192.4 1177.7L2192.1 1170.2L2193.4 1171.6M2192.4 1177.7L2191.9 1170.8L2181.6 1171.9M2181.6 1171.9L2181.2 1170.2L2174.1 1157.0L2168.9 1156.4L2161.9 1147.8L2157.3 1149.2L2148.6 1144.8L2146.6 1133.6L2139.9 1130.3L2139.1 1126.3L2136.7 1120.6L2128.0 1120.2L2120.1 1105.3L2118.1 1105.0M2192.4 1177.7L2192.5 1182.1L2196.1 1190.3M2246.7 1131.6L2243.4 1137.8L2243.0 1149.9L2248.0 1156.4L2250.7 1162.0L2251.8 1164.7L2249.7 1173.7M2249.7 1173.7L2245.3 1172.8L2236.8 1178.8L2232.4 1176.6L2221.3 1185.2L2219.2 1188.9L2205.7 1183.3L2198.9 1190.5L2196.1 1190.3M1991.0 1310.7L1986.1 1312.4L1979.0 1311.3L1968.8 1311.4M1991.0 1310.7L1994.7 1312.2L1997.2 1305.3M1968.8 1311.4L1965.2 1308.1L1959.6 1301.6L1956.3 1297.4L1945.0 1291.1L1942.9 1286.2L1939.2 1280.6L1932.5 1276.4L1927.3 1276.9L1919.5 1262.5L1920.7 1261.3L1913.0 1258.4L1907.1 1250.0L1898.6 1251.4L1902.8 1240.6L1893.4 1237.9M1951.6 1207.5L1944.8 1209.1L1934.2 1218.2L1935.6 1215.0L1923.3 1223.0L1922.2 1224.1L1911.7 1225.1L1909.3 1234.7L1903.4 1230.6L1893.4 1237.9M1951.6 1207.5L1957.0 1217.9L1962.7 1218.2L1961.5 1219.7L1971.8 1225.4L1977.1 1236.9L1978.2 1244.7L1987.3 1247.5L1983.5 1252.8L1991.9 1257.4M1997.2 1305.3L1995.5 1294.9L1999.7 1291.7L1990.8 1278.7L1992.1 1274.1L1991.1 1264.8L1991.9 1257.4M1871.2 1331.8L1881.6 1327.3L1887.9 1327.4L1897.4 1332.3L1898.5 1327.5L1903.6 1324.2L1916.0 1325.2L1920.4 1317.8L1925.5 1321.8L1933.2 1317.9L1944.9 1322.5L1950.9 1317.2M1871.2 1331.8L1875.2 1335.4L1879.7 1341.7L1885.5 1346.6L1884.1 1355.6L1894.4 1358.9L1891.0 1364.7L1895.0 1372.8L1900.7 1383.2L1904.6 1386.4L1908.3 1395.5L1913.1 1398.9M1950.9 1317.2L1953.3 1323.5L1951.7 1328.8L1950.6 1338.6L1945.9 1344.2L1940.1 1348.8L1944.6 1358.1L1941.0 1366.1L1937.6 1370.7L1932.4 1379.0L1935.7 1388.1L1927.2 1396.8L1930.5 1401.8M1930.5 1401.8L1921.6 1396.2L1914.0 1399.2M1913.1 1398.9L1911.2 1396.2L1914.0 1399.2M1836.6 1312.9L1846.8 1317.2L1848.7 1317.9L1855.3 1322.0L1862.8 1330.9L1871.2 1331.8M1968.8 1311.4L1962.7 1316.3L1950.9 1317.2M1893.4 1237.9L1890.4 1241.1L1875.9 1236.7L1869.6 1240.5L1866.4 1247.8L1860.1 1245.6L1849.9 1252.8L1848.1 1248.0L1834.2 1256.1L1829.5 1256.4L1825.1 1254.6M1877.6 1427.1L1879.7 1423.9L1888.0 1421.6L1893.3 1409.0L1898.3 1411.4L1912.0 1405.0L1913.1 1398.9M1984.0 1408.4L1984.9 1404.6L1981.4 1395.3L1989.2 1387.5L1986.1 1383.1L1982.4 1376.6L1990.5 1367.3L1983.4 1363.7L1988.9 1355.2L1984.8 1351.4L1984.7 1337.0L1986.6 1333.0L1989.6 1326.0L1992.7 1322.0L1991.0 1310.7M1936.4 1403.2L1933.6 1401.6L1930.5 1401.8M1908.6 1461.4L1906.7 1459.4L1913.9 1449.3L1908.0 1444.5L1910.0 1432.0L1908.9 1427.4L1909.0 1419.9L1913.7 1414.3L1912.6 1409.5L1914.0 1399.2M1840.9 1111.4L1846.3 1112.9L1857.7 1118.0L1861.0 1117.5L1868.6 1120.6L1879.4 1118.9L1882.6 1117.5L1883.6 1118.0M1946.8 1129.0L1948.6 1132.3M1947.3 1128.2L1948.6 1132.3M1951.6 1207.5L1951.2 1202.5L1952.6 1192.3L1958.3 1184.2M1958.3 1184.2L1961.3 1173.7L1959.1 1174.1L1961.5 1162.0L1959.1 1153.7L1964.1 1151.7L1959.8 1141.8M1948.6 1132.3L1956.0 1135.1L1959.8 1141.8M2564.0 1485.8L2570.8 1491.4L2575.9 1495.8L2581.3 1504.7L2581.9 1508.5M2586.5 1575.2L2585.8 1570.9M2585.8 1570.9L2585.5 1568.4L2588.5 1560.7L2589.6 1548.1L2588.4 1547.7L2583.8 1541.7L2579.9 1529.1L2585.1 1526.6L2581.2 1520.9L2581.9 1508.5M2404.3 1404.9L2412.9 1397.1L2414.9 1394.1L2426.5 1393.3L2430.6 1391.2L2436.0 1392.5L2447.4 1385.1M2404.3 1404.9L2405.6 1398.7L2399.7 1389.3L2399.2 1382.8L2400.9 1382.0L2396.4 1373.9L2387.9 1360.0L2388.6 1353.1L2387.3 1354.9L2389.4 1347.7L2381.3 1333.5L2377.3 1327.2L2375.6 1322.8L2376.0 1317.4L2376.6 1309.8L2373.9 1302.0M2373.9 1302.0L2379.8 1300.8L2389.7 1295.0M2447.4 1385.1L2445.4 1381.3L2439.4 1372.7L2433.7 1362.5L2431.7 1362.2L2425.0 1358.7L2428.1 1352.6L2423.6 1342.9L2413.4 1334.8L2415.1 1335.9L2405.0 1320.1L2403.6 1317.5L2402.2 1309.1L2400.8 1305.4L2397.6 1299.3L2389.7 1295.0M2319.0 1477.1L2324.0 1472.6L2337.5 1475.5L2343.0 1469.0L2347.1 1474.4L2358.4 1475.2L2356.5 1468.4L2372.3 1468.7L2378.8 1464.7L2376.4 1470.4L2388.0 1464.7M2319.0 1477.1L2321.9 1482.4L2328.1 1487.2L2339.1 1495.6L2343.7 1493.4L2348.4 1495.7L2349.6 1509.6L2353.2 1508.5L2361.7 1511.9L2366.1 1519.2M2366.1 1519.2L2372.2 1514.8L2370.0 1511.4L2373.7 1503.2L2380.4 1491.7L2381.6 1494.2L2392.7 1482.8L2393.7 1477.2M2388.0 1464.7L2393.8 1475.7L2393.7 1477.2M2468.1 1562.7L2469.4 1555.7L2459.9 1548.3L2464.0 1543.1L2457.9 1537.0L2452.4 1526.8L2453.8 1515.9L2447.3 1511.7M2393.7 1477.2L2399.3 1481.6L2409.6 1489.8L2412.1 1487.0L2414.8 1493.8L2425.9 1493.8L2431.4 1505.2L2434.3 1508.4L2440.7 1509.4L2447.3 1511.7M2472.0 1406.5L2471.6 1409.5L2462.3 1423.2L2455.4 1422.3L2455.5 1432.7L2453.0 1440.4L2447.6 1442.1M2472.0 1406.5L2480.3 1404.7L2481.0 1408.1L2488.0 1410.2M2485.6 1451.4L2484.6 1451.2L2478.1 1452.2L2477.0 1458.8L2469.5 1458.8L2458.5 1458.3M2458.5 1458.3L2448.4 1453.5L2447.6 1442.1M2447.3 1511.7L2447.1 1501.7L2454.7 1496.7L2447.3 1487.2L2452.2 1476.8L2460.1 1477.6L2460.1 1460.9L2458.5 1458.3M2388.0 1464.7L2388.5 1453.8L2392.9 1453.7L2394.8 1446.5L2389.4 1431.7L2390.4 1433.0L2395.8 1422.5M2395.8 1422.5L2400.7 1421.2M2400.7 1421.2L2401.0 1421.2L2399.6 1419.4M2399.6 1419.4L2400.7 1421.2M2400.7 1421.2L2403.8 1426.2L2409.6 1424.1L2415.2 1434.0L2426.2 1435.1L2436.9 1436.4L2445.6 1441.6L2447.6 1442.1M3086.3 1594.2L3084.3 1595.0L3069.7 1589.0L3064.9 1580.9L3059.9 1583.7L3050.9 1574.3L3045.3 1576.1L3042.8 1569.3L3036.9 1566.1L3028.8 1558.7L3026.7 1557.7L3021.9 1550.0L3015.4 1550.4L3006.4 1543.2L3000.1 1536.1L2989.2 1534.6L2983.3 1528.1L2983.0 1531.1L2974.7 1524.9M2973.8 1492.4L2969.1 1490.6L2964.3 1492.8M2964.3 1492.8L2970.6 1502.2L2973.8 1505.6L2969.7 1517.0L2974.7 1524.9M2807.6 1770.0L2807.7 1768.8L2814.3 1769.1L2812.4 1754.9L2811.4 1757.0L2815.2 1743.1L2820.3 1743.1L2814.9 1732.3L2820.8 1721.5L2820.0 1719.6L2823.3 1711.5M2823.3 1711.5L2827.7 1706.1L2829.8 1697.0L2826.9 1686.7L2837.3 1688.5L2840.6 1673.9L2841.9 1668.2L2840.3 1661.8L2848.1 1661.3L2850.4 1650.3L2849.7 1644.8M2974.7 1524.9L2973.8 1527.5L2965.0 1536.7L2956.4 1538.7L2949.9 1547.9L2945.5 1546.3L2941.2 1556.3L2939.6 1560.1L2936.6 1567.4L2924.9 1570.2L2919.3 1572.3L2913.9 1575.6L2910.7 1588.7L2908.6 1585.7L2899.0 1595.8L2896.9 1595.1L2887.3 1605.5L2887.2 1605.6L2883.7 1612.2L2876.7 1620.1L2869.0 1629.3L2864.3 1629.1L2860.6 1638.2L2859.8 1642.5L2849.7 1644.8M3031.7 1393.9L3024.8 1394.0L3022.2 1394.1M3031.7 1393.9L3031.1 1401.4L3026.4 1402.6M2944.1 1444.2L2943.8 1447.7L2943.5 1450.1M2947.2 1450.3L2943.5 1450.1M3077.7 1365.8L3076.2 1365.7M3076.2 1365.7L3069.5 1365.2L3069.2 1374.1L3058.8 1373.5L3053.9 1380.6L3046.3 1383.7L3042.5 1388.5L3031.7 1393.9M2949.9 1284.1L2941.3 1291.2L2934.5 1288.2L2930.8 1298.4L2920.8 1293.9L2918.4 1299.9M2918.4 1299.9L2925.0 1302.4L2924.9 1316.1L2931.5 1322.9L2929.2 1330.5L2935.3 1336.4L2936.2 1337.8M2936.2 1453.8L2936.6 1453.9M2936.6 1453.9L2941.8 1455.8L2949.3 1463.4L2947.7 1469.7L2955.1 1480.6L2959.3 1486.0L2964.3 1492.8M2936.2 1453.8L2936.3 1454.1L2936.6 1453.9M2936.6 1453.9L2943.5 1450.1M2799.1 1180.9L2800.9 1186.6L2802.0 1196.1M2799.1 1180.9L2809.5 1184.6L2817.4 1184.3L2816.0 1177.7L2826.8 1175.7L2836.8 1181.5L2837.8 1176.8L2853.2 1180.0L2855.1 1171.4L2862.2 1174.9L2872.6 1170.9L2874.6 1178.2L2878.9 1173.8L2890.9 1172.0M2802.0 1196.1L2804.7 1202.0L2814.8 1207.3L2819.6 1210.3L2826.4 1205.5L2831.8 1209.3L2841.6 1221.7L2848.1 1222.6L2851.6 1224.1L2863.1 1227.4M2890.9 1172.0L2887.8 1174.9L2884.7 1185.3L2878.8 1196.0M2878.8 1196.0L2878.7 1196.1L2878.9 1195.9L2878.8 1196.0M2878.8 1196.0L2869.6 1202.2L2867.7 1214.9L2871.2 1225.2L2863.1 1227.4M2936.2 1453.8L2932.6 1450.1L2924.6 1456.5L2914.2 1458.9L2907.2 1453.9M2849.7 1644.8L2852.6 1634.2L2850.6 1627.5L2856.4 1625.6L2860.7 1612.7L2854.1 1615.5L2858.5 1601.6L2866.4 1593.3L2867.5 1594.3L2867.0 1584.6L2863.3 1577.8L2871.2 1572.6L2872.1 1559.3L2871.0 1557.9L2871.4 1545.6L2875.0 1545.7L2879.8 1534.5L2885.8 1529.9L2880.4 1522.9L2888.5 1514.2L2886.1 1509.5L2893.5 1503.3L2887.3 1495.9L2890.5 1488.0L2894.1 1481.5M2894.1 1481.5L2899.5 1469.8L2900.7 1465.8L2904.9 1464.0L2907.2 1453.9M2698.0 1483.6L2697.2 1492.7L2696.7 1490.4L2694.6 1499.5L2696.6 1509.7L2694.4 1521.0L2693.9 1523.8M2608.9 1461.2L2612.7 1465.1L2612.9 1466.1L2613.6 1481.4L2616.2 1480.7L2612.6 1496.5L2618.0 1496.4L2618.7 1507.0M2693.9 1523.8L2688.8 1526.8L2683.2 1522.8L2675.4 1516.0L2664.8 1522.0L2656.3 1514.1L2654.4 1518.5L2638.6 1510.8L2636.9 1518.5L2630.3 1516.5L2621.9 1511.5M2621.9 1511.5L2616.4 1510.0L2618.7 1507.0M2581.9 1508.5L2590.7 1512.3L2599.3 1503.7L2607.7 1508.0L2615.7 1507.2L2618.7 1507.0M2586.5 1575.2L2585.8 1570.9L2585.8 1570.9M2585.8 1570.9L2590.3 1567.3L2597.5 1560.1L2600.6 1548.0L2605.8 1545.5L2607.4 1534.8L2610.5 1532.8L2612.1 1520.8L2618.2 1519.5L2621.9 1511.5M3048.5 740.2L3039.1 732.7L3043.1 727.5L3036.0 722.7L3024.1 719.3L3026.9 717.0L3013.7 711.0L3014.3 703.6L3009.7 698.8L2999.9 695.4L2994.3 686.3L2996.5 683.7L2988.0 679.9L2982.8 671.4L2978.3 662.6L2971.3 657.6L2972.7 661.1L2964.2 648.4L2961.2 644.4L2955.6 642.9L2947.5 636.2M3053.0 756.3L3051.8 750.7L3048.5 740.2M2802.2 624.1L2802.3 635.0L2807.5 641.7L2812.9 644.2L2812.0 654.2M2812.0 654.2L2806.0 657.8L2797.5 667.9L2798.5 668.9L2792.0 677.8L2782.1 677.5L2781.3 683.9M2716.0 642.6L2714.8 647.7L2709.9 652.1M2709.9 652.1L2710.3 657.3L2708.0 669.0L2709.7 679.2L2715.7 687.1L2712.2 689.9M2712.2 689.9L2717.6 689.4L2723.6 687.2L2731.0 687.9L2747.5 689.9L2749.2 684.3L2762.6 681.4L2769.4 688.8L2769.3 689.1L2781.3 683.9M2875.3 806.4L2870.1 803.0L2861.2 802.9L2855.5 803.3L2852.5 795.6L2836.9 797.9L2836.6 794.4L2825.3 787.1M2825.3 787.1L2824.1 786.3L2825.7 786.9L2825.3 787.1M2825.3 787.1L2814.7 790.8L2805.2 785.1L2797.2 782.1L2797.3 775.8L2788.2 777.0M2859.3 884.7L2861.4 889.5L2858.4 885.0M2713.7 830.8L2718.4 841.6L2721.1 848.8L2718.6 857.7L2722.7 863.6L2721.1 870.2M2713.7 830.8L2719.3 820.5L2719.8 814.9L2728.9 812.3L2727.1 807.3L2728.7 790.8L2736.9 788.1M2858.4 885.0L2849.4 880.0L2848.4 882.0L2835.6 886.2L2829.8 883.2L2821.7 880.7L2819.6 878.1L2808.1 879.3L2797.0 875.2L2793.4 881.0L2785.5 872.8L2783.3 872.8L2775.5 871.1L2765.9 871.3L2754.8 873.3L2752.6 872.7L2742.0 871.6L2735.8 869.6L2732.9 867.9L2721.1 870.2M2736.9 788.1L2740.6 787.0L2750.1 787.1L2754.3 785.1L2764.9 786.0L2771.5 779.5L2779.0 778.9L2788.2 777.0M3147.2 1003.3L3142.6 1011.8L3141.5 1019.0L3138.0 1023.3L3138.2 1032.7L3136.8 1036.6L3132.9 1044.1M3147.2 1003.3L3148.7 1004.5L3155.0 1010.2L3161.0 1020.0L3168.2 1027.5L3172.8 1025.8L3177.9 1029.8L3188.6 1039.2L3189.9 1046.5L3199.8 1047.7L3204.8 1055.0L3209.4 1058.5M3132.9 1044.1L3137.6 1044.8L3142.1 1058.1L3147.5 1059.8L3150.0 1065.9L3163.0 1066.6L3163.4 1072.8L3167.5 1074.5L3171.6 1084.1L3180.7 1091.5L3190.5 1095.4L3195.7 1099.8L3191.8 1097.5L3201.8 1106.0M3209.4 1058.5L3216.3 1069.4L3214.8 1074.0L3215.9 1080.0M3215.9 1080.0L3211.7 1085.7L3205.3 1093.5L3203.1 1095.7L3201.8 1106.0M3145.5 959.3L3149.5 967.4L3149.8 971.9L3147.1 979.1L3149.9 985.7L3148.4 996.5L3147.2 1003.3M3104.9 1075.2L3108.7 1064.7L3115.9 1063.0L3124.9 1053.6L3124.1 1048.4L3132.9 1044.1M3240.2 993.7L3240.2 997.5L3235.4 1002.0L3226.8 1015.2L3227.9 1015.7L3224.5 1030.5L3220.6 1033.1L3217.8 1039.1L3211.0 1049.3L3213.2 1050.5L3209.4 1058.5M3199.1 1122.1L3198.3 1110.9L3201.8 1106.0M3319.9 1050.3L3317.3 1055.7L3304.9 1055.3L3299.7 1053.2L3287.5 1060.5L3281.9 1060.8L3273.5 1057.4L3268.0 1065.7L3265.6 1071.0L3259.1 1068.3L3245.7 1074.7L3243.5 1075.6L3232.1 1077.4L3229.5 1073.2L3221.9 1073.8L3215.9 1080.0M3324.1 1051.2L3326.6 1055.6L3329.5 1062.4L3331.1 1074.1L3333.0 1084.7L3330.5 1089.3L3333.2 1098.7L3339.2 1104.6L3338.6 1106.9L3343.4 1121.2L3345.5 1122.2L3345.9 1132.8L3347.8 1141.3L3346.1 1145.6M3475.9 1046.4L3468.0 1046.4L3464.0 1050.1L3454.0 1053.3L3441.5 1045.8L3438.4 1047.7L3431.3 1052.7M3475.9 1046.4L3476.9 1049.2L3474.8 1057.4L3464.9 1069.6L3467.9 1073.1L3464.6 1081.4L3465.7 1087.9L3458.7 1094.7M3458.7 1094.7L3449.4 1094.0L3439.2 1094.1M3439.2 1094.1L3436.5 1088.0L3431.7 1080.0L3438.2 1072.7L3432.5 1060.7L3430.3 1054.1M3430.3 1054.1L3426.8 1049.4L3431.3 1052.7M3543.4 959.5L3536.7 959.4L3533.0 948.6L3524.8 951.0L3515.0 947.7L3505.1 938.6L3501.2 936.5M3543.4 959.5L3539.0 967.5L3533.9 969.1L3533.6 975.8L3524.6 979.9L3520.7 990.5L3515.0 995.9L3511.8 995.2L3512.0 1003.7L3503.4 1016.2L3495.5 1013.1L3491.0 1019.7L3492.9 1029.2L3480.3 1032.5L3480.5 1037.3L3475.9 1046.4M3469.0 935.7L3464.9 946.7L3464.0 946.8L3463.3 952.5L3460.3 964.7L3453.8 970.6L3453.8 979.5L3454.6 988.0L3452.3 987.6L3445.9 999.7L3449.9 1000.2L3443.8 1009.3L3442.0 1022.1L3440.8 1027.7L3440.6 1029.9L3436.9 1037.7L3433.2 1046.2L3431.3 1052.7M3341.5 1027.2L3350.0 1025.9L3358.6 1027.9L3360.1 1036.9L3373.7 1034.1L3380.2 1032.9L3387.1 1036.6L3384.7 1044.3L3392.8 1046.3L3398.1 1042.1L3408.4 1043.8L3416.4 1048.4L3425.9 1052.0L3430.3 1054.1M3373.9 1139.2L3384.5 1138.5L3383.3 1136.5M3383.3 1136.5L3382.5 1135.2L3395.6 1127.6L3397.9 1119.5L3401.8 1115.9L3406.5 1115.8L3413.7 1113.2L3422.1 1109.7L3423.2 1105.8L3433.3 1099.5L3439.2 1094.1M3706.7 958.1L3696.7 960.9L3691.0 962.0L3685.5 957.1L3675.3 964.1L3665.1 963.8L3663.0 965.5L3653.5 964.0L3647.6 967.6L3640.5 966.0M3543.4 959.5L3546.8 962.3L3558.7 964.8M3640.5 966.0L3630.7 967.2L3623.2 963.7L3615.5 970.9L3609.4 971.1L3605.7 965.2L3596.5 962.9L3592.9 969.5L3577.2 968.6L3573.7 968.8M3558.7 964.8L3566.2 968.5L3573.7 968.8M3458.7 1094.7L3464.9 1102.7L3475.3 1102.6M3558.7 964.8L3556.3 966.6L3554.6 980.7L3545.9 984.9L3547.8 992.6L3536.3 998.1L3534.4 1003.8L3535.2 1006.4L3533.7 1015.8L3531.0 1023.3L3523.2 1027.1L3520.5 1029.7L3515.2 1036.8L3508.7 1040.3L3511.4 1052.1L3506.3 1056.6L3500.8 1061.4L3498.7 1061.7L3492.9 1077.3L3486.9 1078.3L3481.9 1082.2L3485.8 1085.9L3481.9 1099.6L3475.3 1102.6M2067.5 844.8L2060.8 835.3L2057.5 830.0L2058.2 825.2L2050.2 821.5M2050.2 821.5L2040.3 826.1L2035.8 835.6L2030.5 839.3L2031.8 840.1L2024.0 852.0L2019.4 851.0L2017.6 854.9L2012.1 860.5L2005.7 863.6M2006.0 606.4L1999.9 611.8L2003.4 622.1M2003.4 622.1L1994.7 622.9L1983.1 616.3L1976.4 615.0L1974.8 615.7M2086.1 613.5L2078.5 616.3L2081.5 630.9L2070.2 636.9L2074.4 642.1L2067.2 647.4M2086.1 613.5L2076.8 616.1L2068.7 608.9M2068.7 608.9L2067.3 607.7L2068.8 608.8L2068.7 608.9M2068.7 608.9L2061.1 613.5L2045.2 606.2L2043.9 606.1L2036.8 610.7L2025.2 608.1L2017.7 611.4L2014.6 608.9L2006.0 606.4M2067.2 647.4L2061.5 646.7L2057.2 657.5L2046.3 658.4M2046.3 658.4L2038.8 659.7L2030.8 661.7L2023.2 659.5M2023.2 659.5L2020.2 651.1L2016.7 644.2L2008.3 641.0L2013.7 636.8L2003.8 628.4L2003.4 622.1M2089.8 607.5L2088.8 611.3L2086.1 613.5M2023.2 659.5L2016.5 664.1L2012.6 672.2L2004.7 675.7L2000.1 673.4L1989.7 679.8L1984.4 686.0L1977.6 695.5L1973.4 695.0M1973.4 695.0L1973.1 694.8M1973.1 694.8L1971.5 693.8M2014.0 1197.7L2024.7 1189.3L2028.7 1190.8L2035.8 1183.7M2014.0 1197.7L2021.6 1202.5L2020.2 1214.2L2029.4 1217.1L2031.5 1217.6L2037.8 1227.4M2035.8 1183.7L2037.1 1190.0L2040.8 1199.8L2040.1 1206.1L2040.6 1209.0L2043.6 1220.7L2039.2 1227.1M2037.8 1227.4L2039.5 1224.1L2039.2 1227.1M1958.3 1184.2L1961.2 1187.9L1974.5 1189.2L1976.7 1189.1L1988.8 1192.4L1997.2 1188.6L2002.8 1189.5L2008.3 1196.4L2014.0 1197.7M1991.9 1257.4L1994.2 1252.3L2006.7 1252.5L2007.4 1244.7L2021.1 1236.4L2028.6 1240.4L2029.7 1228.8L2037.8 1227.4M2049.9 1053.1L2048.3 1057.4L2053.1 1069.4L2060.2 1075.0L2062.4 1080.8L2061.4 1083.6L2061.0 1091.0L2060.1 1105.9L2065.8 1109.9M1989.7 1133.2L1991.9 1126.4L1988.9 1115.3L1997.4 1111.2L1993.5 1104.9L1998.3 1103.1L1997.0 1087.8L1999.3 1084.5L2010.1 1079.8L2003.8 1070.7M1989.7 1133.2L1996.5 1138.3L2004.0 1133.7L2015.2 1137.0L2022.7 1133.0L2027.9 1134.4M2065.8 1109.9L2061.6 1111.0L2054.3 1113.3L2043.8 1118.9L2039.1 1128.6L2029.5 1134.1L2027.9 1134.4M2051.5 1227.9L2041.3 1232.0L2039.2 1227.1M2051.5 1227.9L2057.5 1221.2L2058.0 1216.6L2055.6 1207.9L2053.0 1199.3L2060.7 1191.4L2060.7 1180.8M2035.8 1183.7L2036.2 1172.2L2043.6 1169.1M2060.7 1180.8L2052.4 1176.0L2043.6 1169.1M1989.7 1133.2L1984.1 1132.2L1975.4 1142.2L1964.8 1142.9L1959.8 1141.8M2027.9 1134.4L2035.7 1143.0L2033.6 1147.4L2037.0 1151.4L2036.2 1159.9L2043.6 1169.1M2254.3 1110.9L2258.1 1119.9L2267.0 1124.6L2276.1 1129.8L2282.6 1130.8M2249.7 1173.7L2260.8 1175.6L2263.4 1170.8L2271.6 1171.3L2281.3 1168.4L2286.5 1171.2L2292.2 1172.7M2282.6 1130.8L2283.4 1138.2L2290.6 1149.7L2286.0 1156.3L2293.5 1159.0L2291.2 1162.7L2292.2 1172.7M2099.9 1392.3L2098.7 1386.4L2094.3 1385.0L2088.8 1377.0L2083.9 1365.6L2078.9 1359.2L2072.0 1362.6L2069.8 1348.4L2066.3 1342.0L2063.9 1337.9L2055.9 1336.2L2054.6 1329.1M1997.2 1305.3L2009.2 1301.5L2014.9 1308.2L2020.5 1307.7L2028.4 1309.5M2054.6 1329.1L2043.1 1322.7L2041.7 1317.7L2039.9 1312.8L2028.4 1309.5M2051.5 1227.9L2062.2 1234.7L2068.9 1235.1L2073.2 1242.3L2076.7 1239.8L2087.7 1246.2M2028.4 1309.5L2028.5 1304.1L2037.9 1303.5L2047.6 1292.7L2048.2 1284.4L2055.7 1283.3L2054.8 1281.6L2058.4 1269.5L2067.7 1272.3L2069.3 1259.7L2080.8 1255.1L2087.1 1246.7L2087.7 1246.2M2304.0 1352.3L2294.2 1352.6L2293.2 1352.6L2284.4 1362.6L2280.3 1363.9L2263.9 1362.8L2258.5 1361.3L2251.6 1369.6L2247.1 1369.4M2304.0 1352.3L2306.3 1355.9L2305.0 1362.5L2313.0 1376.7L2310.0 1386.0L2316.7 1385.8L2311.1 1392.9L2316.4 1404.2L2316.7 1410.5M2247.1 1369.4L2245.6 1379.2L2243.9 1381.6L2243.6 1395.0L2235.7 1397.4L2235.3 1401.8M2316.7 1410.5L2317.8 1421.5L2312.1 1428.3L2308.4 1432.9L2305.2 1434.3L2296.9 1446.1L2297.5 1446.6L2296.9 1448.9M2187.4 1455.3L2192.1 1456.0M2193.1 1348.1L2195.7 1346.7L2212.0 1357.8L2209.7 1358.1L2220.7 1359.5L2230.6 1363.1L2238.3 1366.0L2244.6 1363.0L2247.1 1369.4M2319.0 1477.1L2314.6 1473.6L2308.0 1476.6L2304.4 1475.5M2395.8 1422.5L2387.5 1421.7L2384.2 1415.9L2374.6 1419.9L2369.2 1416.6L2360.9 1419.4L2351.5 1417.8L2349.5 1413.6L2338.5 1413.6L2334.5 1410.4L2321.7 1410.5L2316.7 1410.5M2222.6 1304.0L2230.8 1303.5L2240.7 1309.9L2244.8 1311.9L2244.4 1314.5L2256.4 1314.5L2267.1 1322.4L2268.6 1319.7L2273.0 1325.7L2283.7 1327.0L2288.7 1330.9L2296.1 1338.0L2302.2 1341.5L2308.7 1341.9M2222.6 1304.0L2229.7 1295.2L2235.9 1294.6L2242.7 1294.5L2244.5 1289.0L2249.1 1282.3L2252.6 1279.5L2262.9 1271.1L2269.2 1265.7L2272.4 1264.2L2281.5 1254.0M2281.5 1254.0L2282.2 1253.2L2286.7 1253.0M2286.7 1253.0L2292.9 1257.7L2303.7 1253.7M2303.7 1253.7L2305.9 1257.7L2313.4 1264.5L2321.5 1276.7L2317.8 1275.1L2322.7 1283.4L2328.3 1291.7L2338.8 1291.7L2339.4 1302.0M2339.4 1302.0L2330.3 1303.8L2328.7 1309.8L2325.5 1317.8L2324.1 1329.5L2322.2 1329.7L2314.5 1332.6L2308.7 1341.9M2191.9 1308.2L2192.1 1319.6L2194.0 1319.8L2185.9 1335.0L2190.3 1341.2L2188.8 1343.9M2191.9 1308.2L2195.2 1308.3L2202.5 1308.5L2217.9 1303.3L2222.6 1304.0M2304.0 1352.3L2301.3 1349.5L2308.7 1341.9M2196.2 1222.6L2208.1 1226.2L2208.8 1225.6L2220.2 1234.3L2222.7 1229.2L2236.0 1233.6L2237.4 1234.8L2247.2 1243.8L2251.6 1244.9L2257.9 1242.9L2268.9 1250.7L2275.3 1250.4L2281.5 1254.0M2281.5 1254.0L2283.0 1254.9L2286.7 1253.0M2196.2 1222.6L2200.1 1215.0L2193.7 1201.8L2194.2 1198.7M2194.2 1198.7L2195.4 1193.1L2196.1 1190.3M2292.2 1172.7L2294.3 1183.0L2304.4 1187.8L2313.5 1188.8M2313.5 1188.8L2307.5 1194.7L2314.1 1205.0L2311.9 1210.4L2305.0 1221.0L2310.6 1224.7L2307.5 1235.2L2305.8 1239.1L2304.6 1248.9L2303.7 1253.7M2404.3 1404.9L2404.3 1410.5L2399.6 1419.4M2373.9 1302.0L2368.1 1300.7L2358.4 1300.8L2352.0 1306.4L2339.4 1302.0M2167.0 980.9L2166.5 978.6M2194.7 953.4L2194.1 951.3L2184.9 944.1L2179.4 943.8M2179.4 943.8L2178.8 950.9L2177.3 960.0L2174.1 962.3L2166.6 972.6L2166.5 978.6M2193.5 1039.1L2181.9 1047.1L2181.6 1046.3L2170.9 1045.8L2165.3 1053.6M2193.5 1039.1L2193.9 1036.0M2132.2 994.1L2133.0 984.5L2134.4 984.3M2156.0 977.0L2159.2 977.0L2166.5 978.6M2312.1 1050.6L2320.1 1046.8L2316.6 1036.0L2322.4 1027.6L2324.7 1020.5M2312.1 1050.6L2308.1 1054.1L2301.0 1050.9L2290.7 1055.2L2284.4 1051.3L2279.5 1057.0L2265.9 1062.5L2262.7 1062.7L2257.4 1062.9L2252.0 1058.6L2240.7 1064.4M2324.7 1020.5L2317.5 1014.8M2251.0 1027.8L2248.1 1034.5L2243.7 1042.9L2237.5 1048.2L2242.4 1057.0L2235.5 1060.0M2240.7 1064.4L2241.6 1061.6L2235.5 1060.0M2240.5 1088.9L2240.7 1084.2L2239.5 1070.1L2240.7 1064.4M2330.8 1084.7L2322.4 1074.9L2319.7 1075.4L2317.7 1062.8L2320.6 1059.4L2312.1 1050.6M2330.8 1084.7L2330.4 1082.1L2330.8 1084.7M2330.8 1084.7L2331.3 1087.3M2282.6 1130.8L2286.6 1123.9L2297.9 1120.3L2303.5 1114.0L2299.7 1115.5L2305.4 1109.5L2316.0 1099.7L2323.8 1096.3L2330.7 1092.7L2331.3 1087.3M2193.5 1039.1L2204.9 1046.9L2206.3 1048.0L2216.8 1051.1L2216.7 1054.9L2231.1 1053.5L2235.5 1060.0M2148.3 1065.2L2142.2 1067.3L2144.1 1078.1M2345.6 997.4L2340.8 999.2L2338.6 1008.1L2334.9 1017.1L2324.7 1020.5M2345.6 997.4L2343.5 987.1L2342.1 984.2L2345.1 979.9L2340.1 968.9M2340.1 968.9L2332.1 960.1M2529.2 1292.6L2531.2 1305.0L2536.8 1308.7L2530.0 1319.2L2531.3 1318.9L2538.2 1326.3M2529.2 1292.6L2531.2 1293.6M2531.2 1293.6L2534.4 1295.1L2529.9 1291.7M2529.9 1291.7L2531.2 1293.6M2531.2 1293.6L2535.5 1299.4L2545.9 1302.7L2543.2 1303.9L2550.3 1306.5M2425.7 1238.5L2423.9 1242.2L2419.6 1255.6L2418.0 1256.6L2412.3 1269.8L2406.5 1272.7L2408.2 1279.1L2405.1 1286.7M2425.7 1238.5L2427.3 1233.9L2439.0 1237.1M2439.0 1237.1L2449.2 1238.6L2450.5 1240.5L2454.9 1238.8L2469.5 1247.5L2470.0 1245.1L2475.6 1247.1L2486.8 1253.4L2493.5 1256.3L2505.2 1255.4L2502.5 1253.1L2515.6 1255.0L2524.6 1256.2L2523.0 1267.6L2533.3 1265.1L2541.1 1266.5M2489.8 1310.9L2497.3 1304.0L2501.3 1303.5L2511.9 1304.5L2518.0 1295.5L2522.2 1299.8L2529.2 1292.6M2489.8 1310.9L2478.7 1309.2L2475.4 1315.5L2461.7 1312.2L2458.2 1310.4L2450.8 1309.9M2450.8 1309.9L2447.7 1302.6L2438.8 1301.5L2433.8 1302.1L2423.9 1293.2L2420.8 1295.3L2412.3 1292.5L2405.1 1286.7M2529.9 1291.7L2538.1 1280.7L2539.2 1278.0L2541.1 1266.5M2700.7 1248.8L2701.1 1253.9L2706.0 1251.0M2700.7 1248.8L2692.8 1257.1L2689.4 1260.9L2686.3 1262.7L2675.1 1263.2L2671.1 1270.3L2663.3 1274.9L2655.3 1274.9L2648.4 1275.0L2645.9 1282.0M2706.0 1251.0L2707.3 1252.6L2713.5 1264.5L2715.2 1272.4L2720.1 1277.4L2718.9 1280.0L2720.4 1282.4M2736.1 1303.9L2738.3 1309.9L2743.3 1317.0L2748.1 1317.4L2746.8 1324.6M2746.8 1324.6L2747.1 1333.0L2735.5 1334.5L2733.4 1345.4L2724.6 1351.7L2725.8 1354.5L2718.6 1358.1L2716.9 1361.6M2658.0 1352.1L2658.0 1351.9M2648.0 1334.3L2645.8 1333.4M2645.9 1282.0L2644.4 1290.1L2643.2 1295.6L2646.5 1302.7L2642.7 1315.1L2642.3 1317.9M2641.8 1320.8L2641.5 1322.8L2641.8 1326.6L2645.8 1333.4M2645.8 1333.4L2639.6 1333.8L2632.5 1335.5L2619.7 1337.3L2617.4 1343.8L2611.7 1342.8L2608.9 1343.5M2463.3 1374.7L2456.8 1381.7L2458.9 1382.6M2463.3 1374.7L2468.9 1374.9L2479.2 1370.2L2482.7 1366.1L2497.9 1366.5L2503.5 1365.0M2503.5 1365.0L2508.0 1368.0M2467.6 1396.6L2458.3 1388.6L2458.9 1382.6M2467.6 1396.6L2475.3 1390.3L2486.1 1389.3L2490.6 1388.6L2496.0 1388.6L2501.9 1384.3M2450.8 1309.9L2450.0 1315.8L2453.5 1328.3L2451.0 1332.2L2457.6 1336.3L2456.3 1345.3L2463.0 1355.9L2460.3 1356.0L2460.5 1370.6L2463.3 1374.7M2447.4 1385.1L2452.5 1382.8L2458.9 1382.6M2405.1 1286.7L2398.8 1286.2L2389.7 1295.0M2489.8 1310.9L2493.2 1320.5L2489.8 1325.5L2499.2 1331.7L2497.9 1340.3L2500.1 1348.4L2500.0 1361.5L2503.5 1365.0M2472.0 1406.5L2468.4 1405.2L2467.6 1396.6M2782.5 1486.1L2784.9 1491.4L2784.9 1493.4L2785.9 1496.1L2792.6 1510.6L2792.4 1513.6L2794.2 1520.5M2807.8 1467.8L2811.3 1478.6L2821.1 1480.5M2794.2 1520.5L2794.2 1512.1L2802.9 1507.9L2804.9 1502.0L2813.5 1498.7L2812.5 1485.1L2821.1 1480.5M2823.3 1711.5L2818.3 1702.4L2818.3 1692.7L2823.2 1688.1L2821.5 1686.4L2820.9 1671.4L2817.7 1672.6L2817.1 1663.1L2814.0 1658.2L2814.0 1646.4L2812.5 1640.5L2808.3 1635.5L2813.7 1628.2L2804.4 1618.6L2810.9 1608.8L2807.2 1607.3L2806.4 1596.7L2800.2 1593.3L2800.6 1585.2L2803.1 1579.4L2797.9 1574.8L2803.2 1566.7L2796.5 1558.1L2797.3 1550.8L2799.4 1540.9L2800.9 1534.1L2795.0 1529.8L2794.2 1520.5M2894.1 1481.5L2888.7 1477.7L2875.0 1482.1L2868.0 1483.3L2865.4 1485.4L2860.8 1482.5L2853.6 1481.0L2840.9 1476.4L2837.7 1482.3L2829.7 1480.7L2821.1 1480.5M2859.9 1387.7L2850.7 1393.1L2841.2 1386.4L2833.7 1391.2M2859.9 1387.7L2867.3 1383.6L2869.7 1379.2L2868.0 1364.2L2871.5 1360.8L2873.4 1357.1L2874.9 1352.2L2877.4 1338.7L2886.5 1331.5L2888.4 1325.2L2888.1 1320.4L2889.4 1317.3L2894.9 1307.3M2833.7 1391.2L2833.4 1389.9L2820.8 1375.4L2818.8 1377.0L2815.1 1373.7L2814.7 1365.4L2802.6 1357.1L2795.9 1351.5L2797.9 1345.2L2787.5 1341.9L2789.8 1337.4L2777.2 1329.8L2773.6 1328.1L2771.5 1319.4M2851.1 1288.3L2857.1 1289.8L2868.4 1290.4L2870.9 1299.3L2876.3 1296.9L2885.0 1298.6M2851.1 1288.3L2845.0 1287.8L2837.2 1289.8L2831.6 1292.3L2823.0 1293.6L2815.1 1292.9L2802.0 1293.8L2796.2 1291.5L2793.1 1297.8L2782.8 1298.7M2782.8 1298.7L2778.8 1307.6L2770.9 1308.7L2771.5 1319.4M2894.9 1307.3L2892.1 1298.4L2885.0 1298.6M2907.2 1453.9L2906.6 1448.0L2903.3 1445.5L2893.4 1434.3L2889.3 1432.6L2885.3 1426.0L2886.3 1420.3L2877.2 1414.2L2872.8 1406.6L2867.7 1404.1L2869.1 1394.4L2859.9 1387.7M2790.0 1415.6L2790.9 1414.4L2797.7 1410.4L2804.7 1405.8L2816.3 1396.8L2823.7 1398.2L2824.5 1392.7L2833.7 1391.2M2918.4 1299.9L2911.1 1304.8L2899.5 1300.6L2894.9 1307.3M2746.8 1324.6L2752.4 1324.2L2762.3 1323.8L2771.5 1319.4M2790.4 1233.0L2798.2 1236.7L2802.3 1239.5L2808.1 1249.6L2809.8 1254.8L2814.4 1262.9L2824.0 1267.4L2830.7 1265.3L2836.9 1274.4L2838.8 1280.2L2848.2 1285.1L2851.1 1288.3M2790.4 1233.0L2789.9 1230.3L2799.1 1217.6L2801.6 1215.8L2798.1 1200.4L2802.0 1196.1M2863.1 1227.4L2862.7 1234.5L2863.9 1239.0L2872.0 1244.0L2873.0 1255.0L2876.1 1260.6L2876.0 1267.3L2873.6 1280.9L2879.3 1282.3L2887.1 1290.2L2885.0 1298.6M2763.9 1252.4L2770.9 1244.0L2776.3 1246.5L2787.0 1241.1L2790.4 1233.0M2763.9 1252.4L2770.7 1256.3L2764.8 1261.9L2773.5 1272.7L2773.4 1281.0L2774.6 1286.5L2779.3 1288.4L2782.8 1298.7M2706.0 1251.0L2716.0 1248.0L2723.5 1254.0L2727.1 1251.1L2732.0 1248.1L2744.1 1250.6L2750.0 1250.8L2754.3 1248.9L2763.9 1252.4M2911.9 1155.5L2907.5 1160.3L2894.4 1170.2L2890.9 1172.0M2921.6 637.6L2914.7 627.8L2911.3 624.1L2914.0 611.8L2912.1 611.5L2907.7 601.7L2900.3 591.4L2897.5 588.4M2921.6 637.6L2914.5 646.6L2910.0 652.2L2910.7 657.7L2899.1 658.0L2901.3 662.2L2890.6 664.6L2888.8 675.2L2880.8 677.6L2880.3 682.0L2874.3 690.6M2897.5 588.4L2896.9 598.5L2889.7 597.4L2887.8 605.4L2879.7 615.9L2880.7 617.9L2874.2 628.8L2877.4 631.4L2870.6 636.4L2866.0 646.4L2860.9 653.0L2859.8 653.7L2852.1 663.8L2852.5 671.0M2874.3 690.6L2865.3 686.2L2864.3 682.1L2861.8 677.0L2852.5 671.0M2947.5 636.2L2941.6 632.8L2934.0 641.4L2921.6 637.6M2916.2 769.9L2913.6 766.6L2909.7 756.0L2902.3 749.9L2904.4 746.4L2902.7 737.0L2899.7 729.0L2886.9 722.9L2888.6 719.8L2882.1 705.7L2883.5 700.7L2881.3 697.9L2874.3 690.6M2812.0 654.2L2815.1 657.2L2828.2 657.1L2836.8 658.2L2835.4 666.4L2847.5 669.2L2852.5 671.0M2781.3 683.9L2786.1 688.1L2777.8 698.6L2781.4 704.3L2782.4 716.4L2781.8 721.6L2785.2 724.7L2789.1 731.6L2783.5 738.1L2788.1 750.3L2785.2 751.7L2788.1 761.0L2788.2 771.4L2788.2 777.0M2709.9 652.1L2699.1 643.3L2701.6 647.3L2688.5 636.6L2686.2 638.5L2679.3 635.5L2671.3 630.7L2665.3 623.4L2668.7 620.4L2662.3 612.4L2657.0 613.7L2644.5 608.1L2645.2 598.3L2634.2 599.6L2630.2 596.9L2623.1 587.9L2614.7 581.9L2612.3 580.0M2434.3 1104.9L2442.9 1097.0L2448.0 1097.0L2449.6 1086.5L2448.8 1079.1L2462.0 1082.1L2468.2 1069.8L2472.9 1065.9L2472.0 1065.1L2481.5 1057.3L2483.1 1050.0M2434.3 1104.9L2426.0 1096.1L2418.8 1092.8L2412.8 1091.1L2407.9 1082.6L2407.3 1079.3L2392.5 1070.9L2391.8 1066.2L2385.1 1066.1M2385.1 1066.1L2385.7 1053.4L2384.9 1051.5L2385.6 1039.5L2388.6 1039.2L2388.4 1030.9L2390.0 1017.4L2385.3 1010.8M2483.1 1050.0L2477.1 1045.7L2473.0 1039.7L2460.9 1039.1L2457.6 1041.0L2449.0 1027.6L2444.2 1029.1M2444.2 1029.1L2435.7 1030.6L2425.4 1024.7L2423.1 1025.7L2413.0 1021.0L2411.9 1022.4L2400.7 1013.8L2394.2 1015.4L2385.3 1010.8M2385.1 1066.1L2380.1 1070.1L2370.4 1072.9L2363.3 1070.4L2354.0 1075.9L2347.9 1075.5L2342.4 1078.7L2336.7 1087.1L2330.8 1084.7M2330.8 1084.7L2330.8 1084.7M2345.6 997.4L2352.7 999.7L2358.3 1001.6L2369.3 1003.2L2373.1 1003.3L2379.8 1006.6M2379.8 1006.6L2379.4 1005.9L2380.0 1006.3M2380.0 1006.3L2385.3 1010.8M2340.1 968.9L2340.2 960.9L2343.9 956.3L2353.5 947.4L2359.5 944.8L2362.4 938.7L2368.3 935.3L2365.8 928.1L2371.5 924.2L2376.8 913.1L2377.6 914.8L2379.1 911.1M2379.8 1006.6L2380.0 1006.3M2380.0 1006.3L2383.5 1000.5L2390.7 998.6L2398.2 988.5L2393.8 982.0L2397.6 977.1L2408.3 977.9L2407.6 966.2L2420.0 964.0L2419.7 953.4L2425.2 952.2M2408.8 913.3L2410.1 922.5L2408.1 923.8L2415.2 933.6L2421.5 940.8L2421.5 944.0L2425.2 952.2M2444.2 1029.1L2443.9 1021.8L2445.4 1015.6L2440.4 1010.1L2437.8 1001.4L2438.0 995.6L2439.8 985.8L2433.2 985.5L2434.9 974.4L2428.2 963.8L2427.8 959.3L2427.1 953.2M2425.2 952.2L2425.5 950.2L2427.1 953.2M2854.3 1001.3L2846.8 1002.7L2835.8 1004.2L2834.6 1000.3L2822.7 999.3L2817.7 1006.4L2809.9 1006.1L2804.6 1001.3L2791.8 1006.6L2793.2 1009.3L2781.2 1005.5L2774.5 1008.5M2858.4 885.0L2849.4 891.4L2850.4 893.8L2838.3 897.6L2839.2 907.5L2830.9 913.6L2825.5 909.9L2818.3 923.5L2818.0 920.4L2808.5 928.4L2805.1 929.6L2804.2 939.6L2792.4 939.6L2790.1 953.5L2786.3 957.7L2782.5 960.7L2769.1 962.1L2768.2 968.9M2774.5 1008.5L2774.1 999.8L2769.1 988.4L2774.4 986.4L2767.4 976.6L2768.2 968.9M3518.4 1140.5L3525.2 1129.4L3525.8 1122.8L3531.6 1120.9L3535.1 1109.2L3533.7 1101.0L3536.7 1095.3M3518.4 1140.5L3518.7 1152.9L3526.7 1161.1L3527.8 1163.9L3527.1 1176.0L3527.2 1179.7M3536.7 1095.3L3543.0 1100.8L3553.6 1095.7L3556.2 1101.0L3561.3 1098.0L3568.5 1097.8L3582.7 1107.9L3585.6 1104.2M3527.2 1179.7L3537.3 1178.4L3543.5 1178.8L3547.3 1175.8L3551.1 1171.6L3560.2 1171.4L3570.2 1168.8L3572.9 1173.8L3582.4 1168.6M3582.4 1168.6L3585.6 1165.8L3585.9 1151.3L3583.4 1150.5L3586.9 1137.3L3584.0 1133.7L3579.6 1123.1L3587.3 1120.2L3584.7 1112.1L3585.6 1104.2M3573.7 968.8L3571.9 974.2L3565.4 985.2L3570.2 989.2L3568.2 1000.1L3565.3 1007.0L3566.0 1006.3L3563.7 1017.5L3560.0 1027.4L3551.2 1032.9L3549.0 1041.4L3549.5 1044.9L3546.7 1056.2L3548.4 1058.1L3547.3 1064.0L3545.9 1075.3L3543.5 1082.4L3543.6 1090.2L3536.7 1095.3M3475.3 1102.6L3480.3 1108.2L3486.8 1109.9L3489.5 1119.8L3500.1 1126.2L3504.1 1126.3L3506.6 1133.1L3514.5 1140.2L3518.4 1140.5M3523.4 1185.5L3527.8 1181.4L3527.2 1179.7M3640.5 966.0L3635.7 968.1L3638.1 978.5L3631.6 981.3L3630.0 996.4L3625.2 1001.4L3627.4 1007.1L3623.1 1009.6L3621.3 1019.5L3621.6 1025.4L3612.9 1035.9L3613.0 1036.8L3610.6 1041.5L3603.4 1055.4L3603.5 1061.2L3598.4 1064.5L3596.0 1074.4L3597.0 1076.9L3592.3 1081.6L3587.9 1093.0L3586.3 1093.7L3585.6 1104.2M1996.4 797.9L2000.6 807.6L2009.6 806.0L2014.1 817.1M1996.4 797.9L1991.8 806.1L1990.1 814.9L1989.1 820.0L1987.6 821.3L1983.5 824.1L1980.6 828.7M2014.1 817.1L2006.7 825.0L2004.7 822.7L1997.6 837.2L1992.4 835.9L1989.3 847.1L1989.2 847.1M1989.1 781.9L1989.6 785.5L1996.4 797.9M1989.1 781.9L1992.0 772.5L2001.0 772.3L2010.2 766.3M2046.9 812.9L2040.3 811.8L2030.7 813.3L2023.1 812.1L2014.1 817.1M2046.9 812.9L2049.8 801.0L2054.3 796.2L2051.7 792.3M2051.7 792.3L2045.3 784.8L2037.3 781.2L2032.3 782.1L2027.5 779.7L2016.7 771.1L2010.2 766.3M2050.2 821.5L2047.1 815.1L2046.9 812.9M2065.4 726.8L2060.7 719.1L2055.7 720.5M2065.4 726.8L2070.0 730.4L2070.0 739.6L2067.9 754.0L2074.5 759.4L2076.3 765.3L2077.0 771.0M2077.0 771.0L2077.2 772.2M2077.2 772.2L2079.3 768.7L2077.0 771.0M2077.0 771.0L2074.0 774.0M2074.0 774.0L2066.7 766.8L2062.7 764.0L2059.8 758.0L2047.2 760.3L2045.6 751.0L2036.0 749.6L2027.6 745.0L2022.3 741.3L2018.9 733.8M2055.7 720.5L2044.1 727.3L2044.6 721.1L2030.2 732.6L2029.4 729.1L2018.9 733.8M2091.8 675.7L2089.9 670.8L2079.4 666.3L2076.2 655.1L2075.7 655.2L2067.2 647.4M2091.8 675.7L2088.0 683.0L2091.1 690.6L2085.7 700.2L2091.4 704.0L2085.6 716.1M2085.6 716.1L2076.4 719.5L2077.0 728.1L2065.4 726.8M2046.3 658.4L2042.6 667.6L2045.0 671.0L2046.2 681.7L2056.0 694.1L2050.9 701.2L2055.3 700.7L2058.5 710.5L2055.7 720.5M2051.7 792.3L2062.0 784.0L2066.8 783.3L2068.6 775.4L2074.0 774.0M2010.8 734.9L2014.7 736.9L2018.9 733.8M2010.8 734.9L2011.2 747.5L2010.8 754.6L2006.7 760.8L2010.2 766.3M2010.8 734.9L2006.4 733.1L1998.4 723.3L1997.9 715.6L1988.1 715.9L1985.5 706.7L1973.8 703.8L1973.3 695.6M1973.3 695.6L1973.1 694.8M1973.1 694.8L1972.5 692.7L1973.4 695.0M2104.2 1114.0L2105.0 1117.3L2111.5 1130.8L2114.7 1136.4L2108.6 1140.8L2119.0 1143.5L2116.0 1155.3M2104.2 1114.0L2093.0 1110.4L2085.0 1113.8M2085.0 1113.8L2080.9 1119.1L2084.6 1124.6L2086.2 1135.7L2078.5 1140.0L2081.2 1150.0L2080.2 1155.1L2077.9 1166.7L2074.4 1174.2L2077.7 1181.7M2116.0 1155.3L2117.0 1164.5L2107.5 1173.2L2104.7 1176.6L2106.5 1188.4M2077.7 1181.7L2080.5 1185.8L2089.8 1187.1L2100.7 1193.2M2106.5 1188.4L2099.8 1194.7L2100.7 1193.2M2181.6 1171.9L2170.7 1171.8L2170.0 1167.7L2160.5 1164.7L2155.6 1166.4L2140.9 1164.7L2134.2 1160.7L2127.4 1158.9L2124.8 1159.5L2116.0 1155.3M2118.1 1105.0L2109.4 1105.1L2104.2 1114.0M2065.8 1109.9L2074.9 1116.0L2085.0 1113.8M2060.7 1180.8L2069.7 1182.5L2077.7 1181.7M2143.1 1195.2L2138.4 1195.2L2132.9 1197.0L2123.5 1194.2L2110.2 1187.4L2106.5 1188.4M2143.1 1195.2L2152.5 1196.5L2161.3 1198.9L2163.3 1193.4L2173.9 1193.3L2179.5 1195.5L2185.9 1199.8L2194.2 1198.7M2093.3 1245.5L2091.8 1247.0L2087.7 1246.2M2093.3 1245.5L2089.9 1242.0L2097.4 1234.6L2097.6 1224.5L2101.4 1218.1L2099.9 1203.5L2094.9 1202.8L2100.7 1193.2M2425.7 1238.5L2427.5 1229.6L2419.5 1222.4L2424.2 1217.8L2415.5 1204.6L2414.6 1202.3L2415.9 1192.1M2313.5 1188.8L2318.4 1188.5L2328.4 1180.3M2328.4 1180.3L2334.8 1178.2L2342.1 1178.6L2354.1 1178.5L2356.7 1183.0L2360.2 1182.4L2377.0 1189.8L2378.6 1190.9L2390.8 1191.7L2396.3 1189.8L2401.4 1192.3L2409.6 1195.8L2415.9 1192.1M2196.2 1222.6L2188.9 1233.2L2190.6 1235.3L2187.5 1240.4L2178.9 1250.0L2180.6 1253.3L2172.5 1261.9M2172.5 1261.9L2171.8 1262.5M2191.9 1308.2L2192.1 1302.5L2189.5 1291.7L2183.7 1290.4L2182.6 1281.3L2178.9 1273.4L2172.2 1264.9M2171.8 1262.5L2172.6 1260.6L2172.5 1261.9M2172.5 1261.9L2172.2 1264.9M2143.1 1195.2L2138.8 1206.1L2138.6 1203.0L2127.7 1211.2L2128.6 1216.8L2123.3 1223.1L2114.6 1237.1L2107.9 1239.3L2104.9 1247.3L2102.7 1250.9M2171.8 1262.5L2160.6 1263.1L2155.6 1264.8L2149.4 1260.7L2139.5 1262.3L2138.6 1260.9L2132.8 1251.2L2125.9 1253.2L2113.5 1257.1L2111.3 1250.6L2102.7 1250.9M2093.3 1245.5L2093.5 1249.7L2102.3 1250.8M2102.7 1250.9L2098.1 1248.3L2102.3 1250.8M2226.5 938.7L2226.0 937.6L2218.4 932.7L2219.4 922.4M2179.4 943.8L2184.2 937.7L2180.6 931.0M2180.6 931.0L2185.2 925.1L2193.7 932.3L2202.0 923.7L2211.9 919.5L2219.4 922.4M2145.2 707.8L2155.4 709.2L2157.9 700.2L2171.1 706.5L2177.0 699.0L2186.2 701.8L2184.2 703.7L2198.2 694.3L2203.5 695.9M2145.2 707.8L2146.2 715.0L2139.4 720.2M2203.5 695.9L2203.8 698.2L2198.5 712.9L2195.4 714.0L2194.8 724.9L2194.4 733.9L2196.5 740.9L2200.0 749.8L2191.7 750.8L2193.7 759.2M2139.4 720.2L2147.7 724.0L2154.6 729.5L2156.8 734.1L2163.2 739.8L2165.6 749.6L2175.1 749.2L2173.9 755.4L2182.6 763.7M2193.7 759.2L2190.9 763.2L2182.6 763.7M2395.4 788.5L2395.6 786.2L2394.4 785.0L2403.4 777.9L2401.9 768.8M2401.9 768.8L2393.8 765.4L2388.5 769.4L2378.6 768.7L2377.2 760.4L2367.8 759.1L2355.6 757.9L2349.9 754.5L2345.2 758.1M2251.0 768.5L2250.4 771.5M2249.2 675.4L2248.9 675.3L2243.4 681.5L2233.5 678.1L2233.2 677.7L2221.5 680.6L2216.0 675.6M2203.5 695.9L2210.5 694.1L2209.8 682.2L2216.0 675.6M2193.7 759.2L2199.8 766.1L2208.1 766.8L2213.6 773.7L2218.6 769.7L2223.4 774.3L2229.2 785.2L2239.8 784.0M2250.4 771.5L2245.6 780.7L2239.8 784.0M2219.4 922.4L2219.4 916.6L2225.4 915.4M2225.4 915.4L2229.4 915.7M2535.6 1233.0L2537.8 1235.7L2538.9 1247.5L2547.6 1253.2L2549.8 1257.5M2535.6 1233.0L2535.0 1225.9L2528.7 1222.6L2530.1 1210.8L2525.4 1202.8L2530.7 1195.9L2527.0 1185.8L2523.0 1180.1L2517.4 1173.2L2518.1 1167.9M2549.8 1257.5L2555.7 1257.6L2562.7 1258.5L2567.2 1257.2L2576.9 1255.3L2583.4 1248.7L2595.4 1251.2L2598.4 1248.5M2598.4 1248.5L2601.4 1241.8L2602.0 1239.1L2603.1 1232.2L2599.9 1218.5L2606.0 1216.8L2606.9 1205.8L2602.9 1203.9L2601.5 1189.1L2605.3 1185.4M2605.3 1185.4L2595.2 1180.2L2591.0 1177.9L2584.6 1171.2L2576.7 1172.7L2567.1 1169.3L2568.9 1167.8L2558.1 1163.1M2558.1 1163.1L2554.2 1166.1L2541.3 1157.2L2528.6 1162.2L2524.7 1160.8M2518.1 1167.9L2524.8 1162.7L2524.7 1160.8M2439.0 1237.1L2441.9 1236.3L2452.6 1230.1L2455.1 1227.6L2466.2 1225.8L2476.1 1216.1L2478.7 1217.0M2478.7 1217.0L2489.1 1217.2L2492.1 1219.5L2503.1 1222.4L2502.9 1224.7L2510.7 1222.1L2516.9 1227.8L2528.0 1226.0L2535.6 1233.0M2541.1 1266.5L2541.8 1266.0L2549.8 1257.5M2510.7 1169.1L2514.8 1173.3L2518.1 1167.9M2510.7 1169.1L2507.1 1179.6L2504.6 1179.9L2494.2 1183.5L2497.6 1194.7L2488.6 1195.7L2488.1 1209.3L2480.2 1216.0L2478.7 1217.0M2645.9 1282.0L2640.3 1274.9L2630.8 1275.8L2632.4 1266.5L2619.5 1261.7L2613.3 1258.4L2609.4 1254.3L2605.9 1250.1L2598.4 1248.5M2587.2 1101.9L2577.6 1099.1L2569.4 1093.4L2561.4 1090.9L2560.0 1089.3L2550.8 1095.7L2545.0 1087.8L2535.6 1087.0L2527.6 1081.3L2522.1 1083.7M2587.2 1101.9L2580.5 1105.1L2577.8 1113.8L2573.5 1123.5L2571.2 1129.2L2572.9 1135.9L2570.2 1145.5L2564.0 1146.6L2556.7 1158.2L2558.1 1163.1M2522.1 1083.7L2521.1 1088.6L2518.4 1094.5L2526.8 1104.5L2526.5 1115.2L2520.8 1116.0L2527.4 1123.2L2524.8 1137.2L2523.7 1139.1L2528.8 1150.5L2528.7 1155.9L2524.7 1160.8M2346.5 522.1L2348.8 522.8L2348.6 531.2L2353.3 534.7L2352.4 541.4L2358.7 552.6L2353.7 553.1L2358.0 564.6L2367.3 568.7L2363.3 577.7L2371.6 582.7L2371.1 588.5L2373.7 599.7L2378.1 605.3L2382.8 607.1L2383.0 618.1L2391.8 627.2L2387.7 627.2L2390.1 633.1L2395.9 644.9L2404.1 650.3L2399.4 654.7L2402.3 660.3L2408.8 669.1M2346.5 678.2L2348.6 678.3L2351.7 676.2L2366.1 679.9L2370.3 677.0L2374.4 681.5L2378.7 680.6L2395.3 680.6L2393.4 674.7L2405.0 679.6M2408.8 669.1L2409.8 671.2L2405.0 679.6M2401.9 768.8L2407.2 765.8L2415.8 757.6L2421.9 759.2L2425.8 749.5L2432.2 746.0M2346.3 737.2L2348.3 735.8L2348.4 728.3L2353.4 718.1L2360.2 721.7L2365.1 710.7L2376.8 712.8L2380.6 701.9L2386.6 694.3L2383.9 689.7L2392.6 686.8L2403.2 684.2L2405.1 680.1M2432.2 746.0L2428.2 737.8L2422.2 732.3L2428.5 730.9L2425.6 715.6L2418.0 716.4L2412.4 702.1L2410.2 695.7L2412.9 695.4L2412.7 682.2L2406.4 680.4M2406.4 680.4L2405.1 680.1M2405.0 679.6L2406.4 680.4M2406.4 680.4L2409.9 682.7L2405.1 680.1M2713.7 830.8L2702.2 826.3L2700.8 824.8L2691.4 823.2L2680.7 825.1L2677.9 827.3L2665.3 821.0L2658.8 821.6L2652.5 818.0L2653.3 819.8L2641.3 816.9M2736.9 788.1L2734.3 783.1L2725.3 777.8L2728.7 765.8L2723.0 762.3L2712.3 759.3L2714.5 748.4L2703.6 745.6L2699.3 739.6L2702.9 728.8L2692.9 724.5L2689.3 721.4M2641.3 816.9L2641.2 811.4L2652.2 803.9L2651.5 799.8L2657.7 796.1L2655.7 781.8L2664.7 779.7L2667.5 768.8L2669.8 762.1L2666.4 755.8L2671.9 752.4L2678.1 751.2L2679.0 741.3L2682.0 732.9L2683.8 722.8L2687.9 721.7M2687.9 721.7L2689.3 721.4M2712.2 689.9L2704.7 697.5L2705.2 702.4L2696.6 705.0L2689.0 708.6L2687.2 716.5M2612.3 580.0L2615.5 588.5L2607.8 595.7L2606.8 601.0L2604.3 610.0L2607.3 622.3L2601.5 626.1M2601.5 626.1L2603.2 631.6L2606.3 642.6L2609.2 643.9L2611.8 649.6L2620.0 651.2L2620.7 662.0L2627.7 666.0L2627.3 672.2L2634.0 676.0L2640.3 683.1L2643.4 694.0L2642.0 697.9L2652.0 707.8L2654.4 709.9M2654.4 709.9L2664.5 714.9L2672.4 710.4L2682.1 717.4L2687.2 716.5M2689.3 721.4L2688.1 723.2L2687.9 721.7M2687.9 721.7L2687.2 716.5M2587.2 1101.9L2587.8 1105.7L2597.5 1101.4M2605.3 1185.4L2609.2 1180.4L2619.0 1171.1L2621.3 1164.2L2622.1 1168.1L2629.3 1157.3L2633.7 1156.9L2642.9 1150.7L2648.2 1141.7M2597.5 1101.4L2600.8 1105.5L2606.2 1111.2L2616.5 1115.5L2620.9 1117.4L2630.2 1118.9L2627.9 1129.9L2641.6 1136.2L2640.0 1141.6L2648.2 1141.7M1968.1 708.7L1970.1 714.6L1966.9 718.7M1965.6 744.6L1968.4 745.5L1971.5 750.0L1969.4 762.5L1967.5 763.9M1989.1 781.9L1980.4 780.9L1977.5 779.8L1970.7 781.7M1973.3 695.6L1970.3 699.4M2433.0 1154.9L2430.7 1149.6L2432.7 1135.3L2426.1 1132.3L2430.9 1125.1L2429.0 1116.9M2433.0 1154.9L2426.4 1160.8L2425.2 1169.9M2425.2 1169.9L2420.7 1166.0L2412.0 1161.4L2406.3 1161.0L2393.3 1160.9L2394.5 1160.3L2389.2 1154.6L2377.7 1147.3L2373.3 1146.0L2362.7 1140.1L2358.8 1143.1L2353.7 1134.6L2344.2 1135.2M2429.0 1116.9L2418.8 1117.9L2410.7 1119.9L2411.4 1117.0L2397.5 1115.9L2395.2 1113.3L2386.8 1115.5L2382.1 1116.8L2372.4 1114.1L2367.3 1114.2L2358.0 1110.9L2348.8 1112.4M2348.8 1112.4L2343.4 1120.6L2343.0 1132.3L2344.2 1135.2M2434.3 1104.9L2428.9 1114.9L2429.0 1116.9M2510.7 1169.1L2501.9 1164.7L2497.3 1164.7L2494.4 1166.4L2478.4 1162.0L2471.5 1162.6L2468.6 1159.5L2463.0 1159.5L2457.4 1160.5L2444.7 1160.7L2435.4 1153.5L2433.0 1154.9M2483.1 1050.0L2484.3 1052.9L2494.9 1046.6M2494.9 1046.6L2499.8 1056.2L2508.9 1054.9L2512.5 1060.4L2515.1 1074.3L2516.4 1081.4L2522.1 1083.7M2415.9 1192.1L2421.7 1184.7L2419.9 1173.9L2425.2 1169.9M2328.4 1180.3L2326.8 1173.2L2333.9 1162.1L2336.6 1153.5L2337.0 1151.9L2338.1 1143.0L2344.2 1135.2M2331.3 1087.3L2332.0 1097.4L2337.2 1104.2L2348.6 1110.8L2348.8 1112.4M2094.4 1298.8L2095.1 1293.0L2100.1 1283.6M2094.4 1298.8L2094.6 1309.4L2105.3 1305.9L2104.2 1312.5L2110.8 1326.7L2116.9 1328.2M2100.1 1283.6L2107.7 1287.5L2112.7 1290.1L2114.7 1299.5L2114.8 1310.5L2123.7 1312.0M2116.9 1328.2L2121.9 1325.1L2123.7 1312.0M2054.6 1329.1L2061.6 1326.0L2062.2 1320.2L2075.6 1316.7L2078.7 1311.4L2081.6 1302.6L2085.9 1300.0L2094.4 1298.8M2102.3 1250.8L2097.7 1254.6L2103.8 1272.2L2102.6 1278.7L2100.1 1283.6M2112.2 1390.2L2109.9 1385.9L2112.2 1378.2L2111.3 1364.9L2114.8 1356.4L2112.7 1353.7L2118.6 1348.5L2117.8 1334.4L2116.9 1328.2M2172.2 1264.9L2166.5 1271.0L2162.4 1279.5L2156.7 1285.2L2150.5 1285.3L2140.6 1289.3L2139.7 1291.4L2133.9 1297.7L2126.8 1310.6L2123.7 1312.0M2111.6 724.2L2119.3 724.0L2118.7 731.6M2111.6 724.2L2112.3 716.1L2106.8 706.3L2111.5 699.7L2111.7 688.2L2110.9 684.6M2145.2 707.8L2141.5 700.2L2135.4 690.4M2118.7 731.6L2122.5 728.5L2136.8 727.9L2139.4 720.2M2135.4 690.4L2128.4 688.7L2121.6 686.1L2110.9 684.6M2091.8 675.7L2102.7 678.2L2109.4 683.4M2085.6 716.1L2094.8 721.1L2103.8 722.5L2111.6 724.2M2109.4 683.4L2109.0 682.5L2109.6 683.2M2109.6 683.2L2110.9 684.6M2203.6 585.3L2204.3 591.8L2201.4 598.2L2199.2 607.7L2204.3 610.4L2201.2 620.8L2200.3 629.2L2197.2 629.7L2196.1 641.9L2196.7 648.7M2203.6 585.3L2198.3 592.5L2191.9 592.7L2182.3 597.0L2173.5 600.8L2170.5 599.4L2165.9 603.2L2162.3 601.9L2146.4 609.6L2141.5 608.8L2142.6 614.7L2128.9 616.0L2121.7 617.8L2117.8 623.2M2196.7 648.7L2185.6 653.4L2184.3 647.2L2170.6 653.4L2171.1 644.6L2159.8 648.6M2159.8 648.6L2156.7 646.3L2146.2 642.9M2117.8 623.2L2129.8 627.5L2131.4 628.1L2139.9 635.4L2146.2 642.9M2216.0 675.6L2215.0 666.1L2210.2 660.5L2204.6 657.6L2196.7 648.7M2089.8 607.5L2101.1 612.2L2102.4 613.0L2108.2 615.3L2117.8 623.2M2135.4 690.4L2137.5 681.6L2146.8 671.5L2147.6 669.6L2148.3 664.5L2152.8 658.0L2159.8 648.6M2109.4 683.4L2109.6 683.2M2109.6 683.2L2111.4 681.4L2118.1 667.7L2121.7 663.1L2126.8 658.4L2140.4 653.2L2139.9 651.2L2146.2 642.9M2121.5 794.7L2124.0 788.3L2138.7 788.4L2138.5 784.7L2150.9 790.3L2154.2 785.3L2161.5 778.0L2168.6 778.6M2121.5 794.7L2114.2 788.0L2108.0 787.4L2100.9 778.2L2099.5 774.2M2099.5 774.2L2105.4 762.5L2111.2 761.4L2111.7 750.2L2110.8 749.7L2117.3 739.3M2117.3 739.3L2128.7 737.6L2133.9 742.7L2133.1 749.8L2140.0 755.4L2154.2 753.1L2153.9 758.5L2166.7 757.0L2172.9 761.0L2176.0 765.6M2176.0 765.6L2177.6 767.9M2168.6 778.6L2171.9 769.9L2177.6 767.9M2119.9 831.8L2119.7 830.7L2125.5 821.4L2124.5 809.0L2117.0 800.1L2121.5 794.7M2077.2 772.2L2084.6 775.5L2094.4 777.7L2099.5 774.2M2118.7 731.6L2120.8 733.4L2117.3 739.3M2182.6 763.7L2176.0 765.6M2176.0 765.6L2175.6 765.6L2177.6 767.9M2120.2 844.7L2122.3 849.7L2128.4 848.5M2168.6 778.6L2174.5 786.7L2175.1 796.2L2174.3 801.1L2180.5 812.3L2177.8 817.0M2128.4 848.5L2136.9 854.9L2140.5 854.3L2152.3 851.4L2159.5 854.8M2177.8 817.0L2170.4 825.4L2174.2 828.9L2170.8 844.5L2160.1 847.7L2159.5 854.8M2306.5 778.8L2305.7 780.2M2250.4 771.5L2254.1 769.3M2368.9 869.3L2368.7 866.2L2365.9 861.9M2365.9 861.9L2364.4 863.0L2361.7 860.5M2365.9 861.9L2368.6 857.5M2377.6 845.1L2384.4 840.7L2383.5 837.4M2611.0 745.9L2616.1 739.4L2620.6 739.7L2625.5 734.5L2633.6 723.1L2638.2 727.1L2645.0 722.4L2650.4 719.3L2654.4 709.9M2611.0 745.9L2604.7 752.6L2604.6 763.3L2603.8 769.8L2605.7 770.8L2603.6 781.3L2598.3 791.9L2600.4 795.0L2599.5 801.0L2595.7 812.7M2641.3 816.9L2629.7 821.4L2631.2 822.6L2624.7 821.1L2613.3 819.6L2605.4 820.0M2595.7 812.7L2596.7 816.7M2596.7 816.7L2597.1 818.5L2597.9 815.5M2605.4 820.0L2606.3 817.1L2597.9 815.5M2721.1 870.2L2716.4 874.3L2717.6 877.6M2717.6 877.6L2709.7 881.4L2707.6 880.3L2692.0 880.2L2685.4 880.9L2685.2 883.0L2674.5 878.6L2672.0 886.5L2660.5 879.1L2655.2 883.3L2645.3 883.8L2637.0 882.2L2633.6 886.7L2625.0 887.3M2605.4 820.0L2606.7 829.2L2609.4 830.0L2609.0 840.7L2614.9 848.2L2617.6 852.2L2619.8 861.2L2616.6 863.3L2622.3 877.3L2627.5 883.7L2625.0 887.3M2494.9 1046.6L2502.0 1041.4L2500.1 1032.3L2510.2 1025.9L2510.3 1022.4L2509.5 1011.9L2515.2 1012.6L2525.0 999.3L2522.6 1002.1L2526.5 994.1L2534.6 988.6L2540.0 974.7L2541.6 972.6M2427.1 953.2L2436.9 956.5L2436.7 959.9L2446.3 956.2L2455.7 958.3L2463.3 954.5L2473.2 960.2L2472.8 961.1L2480.8 961.5L2493.2 965.9L2494.7 962.4L2509.9 966.9L2509.1 967.8L2516.9 963.6L2528.1 965.1L2530.0 971.9L2540.7 971.3M2541.6 972.6L2545.8 967.6L2540.7 971.3M2476.9 811.9L2476.2 814.8L2469.5 825.3L2464.1 829.0L2460.0 834.7L2459.0 838.7M2514.8 804.5L2519.2 808.1L2514.8 819.1L2521.3 825.0L2513.5 833.3L2520.1 839.5L2518.1 848.9L2515.9 853.2L2521.6 864.0L2525.0 864.3L2522.0 874.9L2522.9 876.6L2530.1 887.6L2522.5 891.6L2522.2 906.2L2524.5 909.8L2533.5 918.9L2530.0 923.3M2459.0 838.7L2458.1 843.4L2457.0 855.6L2450.5 856.7L2450.7 867.4L2453.7 874.2L2448.0 880.2M2448.0 880.2L2451.7 886.8L2456.7 884.9L2461.3 893.9L2473.1 897.1L2479.0 898.6L2481.6 906.9L2489.7 910.4L2500.9 914.3L2505.3 914.6L2508.8 918.8L2512.0 924.5L2519.9 928.5L2527.2 936.2M2527.2 936.2L2533.0 927.7L2530.0 923.3M2411.6 823.3L2417.9 826.0L2425.5 826.3L2430.6 831.0L2437.7 826.8L2442.4 836.1L2447.6 832.7L2459.0 838.7M2473.1 762.6L2471.2 761.7L2460.7 757.5L2463.4 756.6L2450.5 754.6L2450.2 750.6L2438.0 751.7L2432.2 746.0M2595.7 812.7L2587.3 814.4L2580.4 814.1L2574.7 812.3L2564.2 806.3L2556.3 809.5L2557.9 804.4L2546.7 807.8L2539.0 799.8L2529.6 804.6L2529.3 799.3L2523.4 800.6M2597.9 815.5L2596.7 816.7M2596.7 816.7L2595.8 817.5L2591.9 831.2L2586.4 832.7L2584.3 836.3L2576.3 847.2L2580.2 847.5L2573.2 857.4L2563.1 860.0L2562.0 871.3L2556.5 874.1L2557.6 883.9L2557.6 890.7L2545.8 893.9L2546.2 899.9L2542.3 904.2L2534.9 913.0L2537.5 919.1L2530.0 923.3M2415.3 894.3L2424.4 892.8L2422.8 888.7L2437.7 882.8L2440.2 887.8L2448.0 880.2M2540.7 971.3L2537.5 964.7L2536.3 960.7L2532.1 954.2L2531.9 942.2L2527.2 936.2M2717.6 877.6L2718.2 884.2L2716.5 894.7M2768.2 968.9L2756.6 964.0L2749.5 957.3L2747.0 954.5M2716.5 894.7L2722.3 906.2L2718.2 904.9L2722.1 914.5L2722.4 924.8L2728.3 928.5M2747.0 954.5L2738.9 948.4L2735.4 943.0L2729.1 934.9L2728.3 928.5M2147.0 914.0L2152.1 917.0L2153.1 921.2L2162.6 919.2M2084.4 924.5L2080.8 925.8L2078.2 927.0M2162.6 919.2L2154.0 928.7L2155.6 933.2L2154.4 934.2M2078.5 941.4L2075.3 937.6M2075.3 937.6L2079.3 933.7L2078.2 927.0M2128.4 848.5L2124.8 853.7L2129.1 866.3L2127.5 873.3L2126.5 877.2L2126.3 878.2M2165.7 918.8L2168.8 909.6L2171.7 901.3L2163.3 897.6L2167.6 891.2L2171.3 879.7L2172.0 874.4L2171.1 864.9M2165.7 918.8L2162.4 915.9L2162.6 919.2M2159.5 854.8L2166.9 860.5L2171.1 864.9M2073.7 906.3L2073.1 914.2L2079.1 915.0L2078.2 927.0M2133.7 969.7L2133.4 969.3M2180.6 931.0L2171.4 922.3L2165.7 918.8M2048.5 940.7L2060.9 933.6L2071.8 940.9L2075.3 937.6M2202.9 820.6L2199.4 832.3L2204.6 836.2L2201.5 837.3L2206.9 851.2L2202.2 851.6L2205.8 863.3M2202.9 820.6L2209.1 814.4L2212.3 815.7L2220.1 803.8L2226.9 805.5L2231.1 803.6L2235.7 796.2L2241.5 790.4M2252.6 829.2L2248.0 820.6L2252.3 816.0M2252.6 829.2L2246.3 834.7L2244.2 837.8L2241.8 843.4L2233.2 854.9L2231.4 860.2M2231.4 860.2L2220.6 862.2L2219.2 867.6M2252.3 816.0L2253.9 811.4L2249.3 802.2M2219.2 867.6L2211.3 862.1L2205.8 863.3M2249.3 802.2L2247.9 800.0L2241.5 790.4M2177.8 817.0L2182.0 817.4L2195.0 821.3L2202.9 820.6M2171.1 864.9L2176.8 867.8L2189.6 867.1L2201.6 865.6L2205.8 863.3M2239.8 784.0L2242.3 785.2L2241.5 790.4M2260.2 836.1L2260.0 835.8L2252.6 829.2M2274.8 817.5L2271.1 813.5L2259.3 820.5L2252.3 816.0M2234.2 862.6L2231.4 860.2M2225.4 915.4L2225.8 905.6L2221.7 894.6L2225.2 890.3L2219.2 880.6L2220.2 872.0L2219.2 867.6M2284.2 795.9L2278.2 799.2L2271.6 795.8L2269.0 796.1L2256.4 799.3L2249.3 802.2M2493.4 757.1L2500.6 752.2M2611.0 745.9L2604.0 744.0L2595.8 737.1L2595.8 735.8L2584.8 727.8L2581.8 731.1L2570.0 726.5L2564.9 719.0L2555.0 712.8L2550.8 708.6L2547.0 707.7M2547.0 707.7L2545.1 717.2L2534.9 720.6L2529.5 723.4L2523.3 731.6L2521.3 733.4L2519.0 737.6L2510.8 744.5L2505.5 748.1L2500.6 752.2M2747.0 954.5L2738.5 954.6L2731.2 966.4L2728.3 960.5L2717.8 969.7L2714.5 977.4L2711.9 971.8L2701.3 979.7M2728.3 928.5L2724.8 937.7L2717.7 941.8L2707.5 942.9L2704.0 949.0L2697.8 953.6L2689.1 954.8M2689.1 954.8L2691.6 966.0L2698.3 976.0L2701.3 979.7M2716.5 894.7L2708.9 900.0L2708.4 905.5L2701.0 903.4L2689.7 909.2L2688.8 910.5L2683.0 915.4L2672.5 921.1L2670.2 929.6L2668.3 928.7L2653.9 939.1L2653.1 943.8L2648.5 940.0L2639.1 945.0L2634.1 949.7L2628.8 955.9M2689.1 954.8L2685.2 958.9L2670.9 960.0L2671.1 954.1L2662.7 959.8L2653.8 954.1L2645.2 958.3L2634.7 955.6L2628.8 955.9M2597.5 1101.4L2595.2 1091.0L2604.0 1085.6L2604.9 1079.9L2606.7 1071.5L2602.3 1068.4L2605.8 1056.8L2609.6 1052.8L2615.7 1047.9L2612.9 1038.4L2616.4 1028.4L2615.1 1026.2L2623.3 1019.3L2617.8 1016.0L2622.5 1004.5M2622.5 1004.5L2622.5 1004.4M2541.6 972.6L2552.2 970.0L2555.7 968.3L2567.3 970.3L2575.7 975.5L2582.9 974.2L2585.3 969.1L2595.6 973.9M2622.5 1004.4L2618.1 993.4L2611.9 994.9L2602.8 985.5L2601.4 976.5L2595.6 973.9M2625.0 887.3L2619.8 895.6L2617.4 898.3L2615.7 913.4L2620.3 912.4L2614.9 922.6L2607.3 928.3L2611.3 933.2L2612.2 943.2L2604.0 957.1L2599.7 956.1L2601.1 967.1M2628.8 955.9L2621.6 956.9L2613.1 962.3L2612.6 963.4L2601.1 967.1M2601.1 967.1L2593.8 969.2L2595.6 973.9M2549.8 690.5L2546.3 687.6L2531.2 683.6L2525.8 682.5L2519.6 683.5L2516.5 675.1L2503.7 680.7L2503.9 678.2L2489.9 675.1L2481.7 672.8L2478.9 668.8M2549.8 690.5L2550.0 686.9L2559.2 676.2L2561.0 674.1L2565.7 664.1L2564.8 655.7M2564.8 655.7L2565.3 654.1L2563.5 655.4M2563.5 655.4L2558.2 650.2L2548.8 648.0L2538.0 652.3L2534.2 646.1L2532.2 645.3L2521.0 645.8L2510.3 649.2L2508.9 646.6L2497.2 645.2L2496.1 643.9L2481.6 634.5L2477.7 636.4M2477.7 636.4L2468.0 639.6L2466.5 651.0M2466.5 651.0L2472.7 652.5L2474.4 661.5L2478.9 668.8M2547.0 707.7L2550.7 694.6L2549.8 690.5M2500.6 752.2L2501.0 749.9L2494.9 737.4L2497.5 729.4L2496.8 729.4L2488.8 717.2L2486.2 711.1L2486.9 708.3L2488.4 701.6L2487.4 692.9L2481.3 684.4L2476.8 674.3L2478.9 668.8M2601.5 626.1L2599.6 635.8L2586.0 635.9L2582.2 642.1L2578.0 643.5L2574.7 650.3L2564.8 655.7M2483.7 585.9L2491.8 592.8L2499.2 595.3L2500.6 602.5L2502.3 599.9L2513.4 611.0L2518.1 616.7L2518.0 622.1L2527.7 627.4L2532.1 631.2L2532.5 628.9L2542.8 638.5L2546.4 637.2L2556.7 641.8L2562.1 648.1L2563.5 655.4M2483.7 585.9L2484.9 594.1L2479.4 598.6L2478.5 607.9L2478.1 615.2L2477.2 618.2L2480.5 626.8L2477.7 636.4M2408.8 669.1L2420.5 665.9L2420.9 666.8L2434.5 661.0L2440.0 658.4L2449.8 655.8L2447.5 650.6L2459.8 654.5L2466.5 651.0M2680.9 1007.0L2671.6 1005.8L2665.6 1005.1L2656.2 1006.6L2653.8 1001.2L2648.8 1003.2L2637.5 1002.6L2632.3 1004.2L2623.4 1004.9M2680.9 1007.0L2688.1 1009.6L2693.8 1010.0L2705.0 1017.0L2704.9 1024.8L2710.9 1027.8L2718.6 1024.7L2726.6 1029.9L2729.3 1040.6L2743.0 1039.0L2748.2 1044.5L2749.5 1042.7L2757.9 1050.0M2623.4 1004.9L2628.0 1007.9L2633.4 1018.1L2631.8 1026.0L2643.0 1029.2L2646.8 1035.0L2641.0 1041.3L2648.1 1052.0L2653.5 1058.5L2653.7 1058.9L2655.9 1061.7L2666.6 1067.7L2665.5 1077.8L2676.2 1082.0L2670.8 1092.8L2681.4 1093.3L2687.5 1106.7L2691.3 1112.4L2691.1 1117.3L2690.6 1122.9L2696.7 1125.9L2701.9 1133.7M2757.9 1050.0L2756.6 1053.0L2762.1 1067.0L2754.7 1071.7L2755.3 1079.2L2757.3 1090.6L2759.4 1093.4L2759.4 1104.4L2762.3 1107.5M2758.0 1113.8L2745.9 1114.9L2741.0 1122.3L2735.3 1126.5L2727.6 1122.2L2721.8 1124.8L2711.6 1132.2L2707.9 1135.0M2758.0 1113.8L2760.9 1107.8L2762.3 1107.5M2707.9 1135.0L2701.7 1134.5L2701.9 1133.7M2622.5 1004.4L2622.4 1004.4L2622.5 1004.5M2622.5 1004.5L2623.4 1004.9M2701.3 979.7L2697.9 982.9L2686.2 989.0L2688.9 1002.2L2680.9 1007.0M2774.5 1008.5L2768.3 1013.7L2767.1 1026.6L2765.3 1031.4L2759.3 1031.6L2757.9 1044.5L2757.9 1050.0M2648.2 1141.7L2655.3 1144.2L2666.7 1141.0L2676.2 1142.9L2682.7 1133.0L2685.5 1132.4L2695.3 1134.9L2701.9 1133.7M2824.3 1098.1L2812.5 1095.1L2808.5 1101.7L2800.1 1101.4L2794.7 1104.8L2787.6 1103.1L2774.5 1108.9L2765.5 1103.4L2762.3 1107.5M2700.7 1248.8L2698.1 1242.7L2702.9 1230.6L2702.2 1228.2L2704.4 1216.1L2705.2 1210.9L2702.3 1202.4L2707.3 1200.2L2707.4 1192.0L2700.9 1183.8L2701.0 1173.6L2708.7 1165.5L2705.0 1158.8L2709.2 1161.2L2702.3 1147.8L2712.2 1139.6L2707.9 1135.0M2799.1 1180.9L2793.5 1179.6L2795.9 1167.5L2789.6 1165.5L2782.7 1151.5L2779.2 1152.3L2781.3 1143.7L2772.1 1137.0L2770.3 1127.3L2769.6 1130.6L2757.1 1115.0L2758.0 1113.8"/><path fill="none" stroke="#ffffff" stroke-opacity="0.4" stroke-width="4" stroke-linejoin="round" d="M2133.5 621.9L2131.2 681.8L2144.9 720.5L2138.1 744.1L2140.3 776.6L2126.7 799.4L2123.3 821.9L2111.9 830.8M2538.6 621.9L2572.7 681.8L2536.3 725.2L2493.1 755.8L2486.2 767.4M2495.3 817.4L2486.2 839.6L2481.7 878.7L2478.3 898.0L2488.5 921.1L2495.3 946.0L2484.0 962.3L2461.2 976.5L2452.1 974.5L2465.7 990.6L2443.0 1010.4L2438.4 1030.0L2429.3 1041.7L2390.7 1045.6M2410.0 884.3L2429.3 891.6L2447.5 898.0L2478.3 898.0M2334.9 960.3L2356.5 946.0L2390.7 950.1L2413.4 946.0L2445.3 962.3L2461.2 976.5M2338.3 990.6L2361.1 996.5L2374.7 1004.5L2374.7 1026.1L2390.7 1030.0L2390.7 1045.6M2301.9 1026.1L2322.4 1028.1L2374.7 1026.1M2390.7 1045.6L2399.8 1080.0L2383.8 1102.5L2392.9 1132.1L2404.3 1159.3L2392.9 1175.5L2372.5 1196.7L2370.2 1221.2M2392.9 1132.1L2436.2 1135.7L2486.2 1121.0L2549.9 1135.7L2575.0 1113.6L2618.2 1106.2M2579.5 1106.2L2595.5 1072.4L2577.3 1049.4L2561.3 1018.3L2559.0 978.5L2497.6 962.3M2618.2 1106.2L2638.7 1117.3L2659.2 1146.6L2688.8 1175.5L2725.2 1186.1L2768.4 1203.8L2761.6 1228.2L2763.8 1255.7L2738.8 1272.6L2727.4 1289.4M2461.2 1252.2L2493.1 1243.7L2513.5 1248.8L2520.4 1265.8L2529.5 1282.7L2538.6 1309.3L2497.6 1342.1M2461.2 1252.2L2477.1 1276.0L2495.3 1296.1L2495.3 1325.8L2497.6 1342.1M2377.0 1259.1L2420.2 1262.5L2461.2 1252.2M2497.6 1342.1L2531.7 1351.8M2377.0 1259.1L2356.5 1289.4L2326.9 1322.5L2324.7 1342.1L2345.1 1361.5L2367.9 1371.1L2372.5 1383.8L2388.4 1393.3L2413.4 1399.6L2438.4 1398.1L2477.1 1387.0L2506.7 1398.1M2377.0 1259.1L2358.8 1245.4L2324.7 1248.8L2288.3 1259.1L2260.9 1265.8L2242.7 1267.5L2231.4 1292.7L2226.8 1297.7L2231.4 1309.3L2254.1 1329.1L2283.7 1332.3L2299.6 1322.5L2326.9 1322.5M2370.2 1221.2L2333.8 1210.8L2306.5 1214.3L2283.7 1203.8L2274.6 1193.2L2242.7 1179.0L2224.5 1161.1L2197.2 1157.5L2192.7 1153.9M2242.7 1235.1L2260.9 1224.7L2283.7 1203.8M2288.3 1259.1L2247.3 1238.5L2242.7 1233.4M2242.7 1233.4L2220.0 1238.5L2195.0 1231.6L2169.9 1238.5L2147.2 1214.3L2133.5 1182.6L2151.7 1179.0L2181.3 1161.1L2192.7 1153.9M2192.7 1153.9L2190.4 1132.1L2188.1 1098.8L2183.6 1068.6L2180.2 1044.8M2169.9 1238.5L2151.7 1272.6L2133.5 1276.0L2094.8 1272.6L2074.4 1276.0L2049.3 1274.3L2028.8 1272.6L2015.2 1279.3L1994.7 1312.6L2012.9 1319.2L2015.2 1329.1L2008.4 1358.3L2028.8 1387.0L2026.6 1398.1M2074.4 1276.0L2072.1 1292.7L2092.6 1309.3L2106.2 1296.1L2133.5 1292.7L2167.7 1306.0L2188.1 1309.3L2226.8 1297.7M2165.4 1334.0L2165.4 1312.6L2167.7 1306.0M2028.8 1272.6L2047.0 1312.6L2060.7 1325.8L2092.6 1309.3M2165.4 1342.1L2192.7 1342.1L2213.2 1329.1L2231.4 1309.3M2215.4 1351.8L2220.0 1367.9L2229.1 1390.2L2249.6 1412.2L2256.4 1424.7M2215.4 1355.0L2242.7 1351.8L2276.9 1355.0L2288.3 1361.5M2288.3 1361.5L2299.6 1380.7L2299.6 1402.8L2288.3 1421.5L2276.9 1437.0M2276.9 1437.0L2288.3 1424.7L2292.8 1412.2L2315.6 1424.7L2306.5 1434.0L2301.9 1443.2L2297.4 1455.5M2306.5 1434.0L2322.4 1443.2L2347.4 1446.3L2365.6 1443.2L2377.0 1421.5L2365.6 1402.8L2372.5 1383.8M2365.6 1443.2L2377.0 1470.7L2413.4 1470.7L2449.8 1461.6L2477.1 1452.4L2493.1 1453.3M2449.8 1461.6L2454.4 1476.8L2447.5 1488.8M2019.7 1066.7L2015.2 1106.2L1992.4 1124.7L1990.2 1153.9L1994.7 1162.9L1999.3 1179.0L2003.8 1196.7L2001.5 1209.0L2022.0 1217.8L2042.5 1224.7L2031.1 1248.8L2028.8 1272.6M1933.3 1140.5L1951.5 1137.5L1974.2 1143.0L1990.2 1153.9M1913.9 1151.0L1926.4 1161.1L1951.5 1179.0L1967.4 1193.2L1987.9 1207.3L2001.5 1209.0M2003.8 1196.7L1994.7 1184.4L1987.9 1207.3M1815.4 1409.7L1833.1 1421.5L1855.9 1430.9L1890.0 1432.4L1915.1 1438.6L1928.0 1439.2M1654.1 1457.0L1669.3 1449.3L1692.1 1455.5L1708.0 1458.5L1701.2 1476.8L1696.6 1497.8M2051.6 1006.5L2070.9 1010.4M1689.8 998.5L1678.4 1018.3L1689.8 1035.9L1705.7 1037.8L1717.1 1039.8M2766.1 1409.1L2811.6 1418.4L2852.6 1430.9L2879.9 1434.0L2914.0 1455.5L2936.8 1476.8L2959.5 1458.5M2968.6 1325.8L2952.7 1292.7L2930.0 1259.1L2920.9 1217.8L2959.5 1189.7L2998.2 1153.9L3027.8 1132.1L3096.1 1143.0L3141.6 1168.3L3189.4 1157.5L3221.2 1153.9L3259.9 1132.1L3244.0 1102.5L3255.4 1080.0L3244.0 1049.4L3289.5 1030.0L3346.4 1018.3L3403.3 1006.5L3448.8 990.6L3471.5 998.5L3476.1 1033.9L3528.4 1060.9M3127.9 1476.8L3130.2 1358.3L3187.1 1338.9L3244.0 1380.7L3266.7 1405.9L3332.7 1405.9L3357.8 1440.1L3373.7 1482.8M3127.9 1476.8L3153.0 1473.7L3187.1 1482.8L3221.2 1512.7M2801.4 1466.1L2823.0 1476.8L2843.5 1482.8L2850.3 1497.8"/><path fill="none" stroke="#a48fae" stroke-opacity="0.85" stroke-width="1.9" stroke-linejoin="round" d="M2133.5 621.9L2131.2 681.8L2144.9 720.5L2138.1 744.1L2140.3 776.6L2126.7 799.4L2123.3 821.9L2111.9 830.8M2538.6 621.9L2572.7 681.8L2536.3 725.2L2493.1 755.8L2486.2 767.4M2495.3 817.4L2486.2 839.6L2481.7 878.7L2478.3 898.0L2488.5 921.1L2495.3 946.0L2484.0 962.3L2461.2 976.5L2452.1 974.5L2465.7 990.6L2443.0 1010.4L2438.4 1030.0L2429.3 1041.7L2390.7 1045.6M2410.0 884.3L2429.3 891.6L2447.5 898.0L2478.3 898.0M2334.9 960.3L2356.5 946.0L2390.7 950.1L2413.4 946.0L2445.3 962.3L2461.2 976.5M2338.3 990.6L2361.1 996.5L2374.7 1004.5L2374.7 1026.1L2390.7 1030.0L2390.7 1045.6M2301.9 1026.1L2322.4 1028.1L2374.7 1026.1M2390.7 1045.6L2399.8 1080.0L2383.8 1102.5L2392.9 1132.1L2404.3 1159.3L2392.9 1175.5L2372.5 1196.7L2370.2 1221.2M2392.9 1132.1L2436.2 1135.7L2486.2 1121.0L2549.9 1135.7L2575.0 1113.6L2618.2 1106.2M2579.5 1106.2L2595.5 1072.4L2577.3 1049.4L2561.3 1018.3L2559.0 978.5L2497.6 962.3M2618.2 1106.2L2638.7 1117.3L2659.2 1146.6L2688.8 1175.5L2725.2 1186.1L2768.4 1203.8L2761.6 1228.2L2763.8 1255.7L2738.8 1272.6L2727.4 1289.4M2461.2 1252.2L2493.1 1243.7L2513.5 1248.8L2520.4 1265.8L2529.5 1282.7L2538.6 1309.3L2497.6 1342.1M2461.2 1252.2L2477.1 1276.0L2495.3 1296.1L2495.3 1325.8L2497.6 1342.1M2377.0 1259.1L2420.2 1262.5L2461.2 1252.2M2497.6 1342.1L2531.7 1351.8M2377.0 1259.1L2356.5 1289.4L2326.9 1322.5L2324.7 1342.1L2345.1 1361.5L2367.9 1371.1L2372.5 1383.8L2388.4 1393.3L2413.4 1399.6L2438.4 1398.1L2477.1 1387.0L2506.7 1398.1M2377.0 1259.1L2358.8 1245.4L2324.7 1248.8L2288.3 1259.1L2260.9 1265.8L2242.7 1267.5L2231.4 1292.7L2226.8 1297.7L2231.4 1309.3L2254.1 1329.1L2283.7 1332.3L2299.6 1322.5L2326.9 1322.5M2370.2 1221.2L2333.8 1210.8L2306.5 1214.3L2283.7 1203.8L2274.6 1193.2L2242.7 1179.0L2224.5 1161.1L2197.2 1157.5L2192.7 1153.9M2242.7 1235.1L2260.9 1224.7L2283.7 1203.8M2288.3 1259.1L2247.3 1238.5L2242.7 1233.4M2242.7 1233.4L2220.0 1238.5L2195.0 1231.6L2169.9 1238.5L2147.2 1214.3L2133.5 1182.6L2151.7 1179.0L2181.3 1161.1L2192.7 1153.9M2192.7 1153.9L2190.4 1132.1L2188.1 1098.8L2183.6 1068.6L2180.2 1044.8M2169.9 1238.5L2151.7 1272.6L2133.5 1276.0L2094.8 1272.6L2074.4 1276.0L2049.3 1274.3L2028.8 1272.6L2015.2 1279.3L1994.7 1312.6L2012.9 1319.2L2015.2 1329.1L2008.4 1358.3L2028.8 1387.0L2026.6 1398.1M2074.4 1276.0L2072.1 1292.7L2092.6 1309.3L2106.2 1296.1L2133.5 1292.7L2167.7 1306.0L2188.1 1309.3L2226.8 1297.7M2165.4 1334.0L2165.4 1312.6L2167.7 1306.0M2028.8 1272.6L2047.0 1312.6L2060.7 1325.8L2092.6 1309.3M2165.4 1342.1L2192.7 1342.1L2213.2 1329.1L2231.4 1309.3M2215.4 1351.8L2220.0 1367.9L2229.1 1390.2L2249.6 1412.2L2256.4 1424.7M2215.4 1355.0L2242.7 1351.8L2276.9 1355.0L2288.3 1361.5M2288.3 1361.5L2299.6 1380.7L2299.6 1402.8L2288.3 1421.5L2276.9 1437.0M2276.9 1437.0L2288.3 1424.7L2292.8 1412.2L2315.6 1424.7L2306.5 1434.0L2301.9 1443.2L2297.4 1455.5M2306.5 1434.0L2322.4 1443.2L2347.4 1446.3L2365.6 1443.2L2377.0 1421.5L2365.6 1402.8L2372.5 1383.8M2365.6 1443.2L2377.0 1470.7L2413.4 1470.7L2449.8 1461.6L2477.1 1452.4L2493.1 1453.3M2449.8 1461.6L2454.4 1476.8L2447.5 1488.8M2019.7 1066.7L2015.2 1106.2L1992.4 1124.7L1990.2 1153.9L1994.7 1162.9L1999.3 1179.0L2003.8 1196.7L2001.5 1209.0L2022.0 1217.8L2042.5 1224.7L2031.1 1248.8L2028.8 1272.6M1933.3 1140.5L1951.5 1137.5L1974.2 1143.0L1990.2 1153.9M1913.9 1151.0L1926.4 1161.1L1951.5 1179.0L1967.4 1193.2L1987.9 1207.3L2001.5 1209.0M2003.8 1196.7L1994.7 1184.4L1987.9 1207.3M1815.4 1409.7L1833.1 1421.5L1855.9 1430.9L1890.0 1432.4L1915.1 1438.6L1928.0 1439.2M1654.1 1457.0L1669.3 1449.3L1692.1 1455.5L1708.0 1458.5L1701.2 1476.8L1696.6 1497.8M2051.6 1006.5L2070.9 1010.4M1689.8 998.5L1678.4 1018.3L1689.8 1035.9L1705.7 1037.8L1717.1 1039.8M2766.1 1409.1L2811.6 1418.4L2852.6 1430.9L2879.9 1434.0L2914.0 1455.5L2936.8 1476.8L2959.5 1458.5M2968.6 1325.8L2952.7 1292.7L2930.0 1259.1L2920.9 1217.8L2959.5 1189.7L2998.2 1153.9L3027.8 1132.1L3096.1 1143.0L3141.6 1168.3L3189.4 1157.5L3221.2 1153.9L3259.9 1132.1L3244.0 1102.5L3255.4 1080.0L3244.0 1049.4L3289.5 1030.0L3346.4 1018.3L3403.3 1006.5L3448.8 990.6L3471.5 998.5L3476.1 1033.9L3528.4 1060.9M3127.9 1476.8L3130.2 1358.3L3187.1 1338.9L3244.0 1380.7L3266.7 1405.9L3332.7 1405.9L3357.8 1440.1L3373.7 1482.8M3127.9 1476.8L3153.0 1473.7L3187.1 1482.8L3221.2 1512.7M2801.4 1466.1L2823.0 1476.8L2843.5 1482.8L2850.3 1497.8"/><g font-family="Liberation Sans" stroke="#ffffff" stroke-width="4" stroke-opacity="0.85" paint-order="stroke" stroke-linejoin="round"><text x="2160.4" y="701.1" font-size="23.5" letter-spacing="0.34" fill="#7d6585" style="">Sverige</text><text x="2077.5" y="782.8" font-size="23.5" letter-spacing="-0.91" fill="#3b3b3b" style="">Oslo</text><text x="2213.0" y="851.2" font-size="23.5" letter-spacing="-0.23" fill="#3b3b3b" style="">Stockholm</text><text x="2383.0" y="811.0" font-size="23.5" letter-spacing="-0.18" fill="#3b3b3b" style="">Helsinki</text><text x="2387.0" y="856.6" font-size="23.5" letter-spacing="-0.06" fill="#7d6585" style="">Eesti</text><text x="2370.6" y="937.4" font-size="23.5" letter-spacing="0.41" fill="#7d6585" style="">Latvija</text><text x="2366.5" y="1003.7" font-size="23.5" letter-spacing="0.50" fill="#7d6585" style="">Lietuva</text><text x="2020.3" y="962.3" font-size="23.5" letter-spacing="1.05" fill="#7d6585" style="">Danmark</text><text x="1676.2" y="997.5" font-size="23.5" letter-spacing="1.02" fill="#7d6585" style="">United Kingdom</text><text x="1748.8" y="1028.6" font-size="21" letter-spacing="-0.32" fill="#3b3b3b" style="font-style:italic;">Great Britain</text><text x="1598.7" y="1074.2" font-size="23.5" letter-spacing="0.91" fill="#7d6585" style="">Éire / Ireland</text><text x="2034.8" y="1052.3" font-size="23.5" letter-spacing="0.14" fill="#3b3b3b" style="">Hamburg</text><text x="2131.0" y="1086.7" font-size="23.5" letter-spacing="-0.16" fill="#3b3b3b" style="">Berlin</text><text x="1923.7" y="1117.8" font-size="23.5" letter-spacing="0.96" fill="#7d6585" style="">Nederland</text><text x="1814.3" y="1124.0" font-size="23.5" letter-spacing="-0.18" fill="#3b3b3b" style="">London</text><text x="2257.0" y="1125.2" font-size="23.5" letter-spacing="0.17" fill="#7d6585" style="">Polska</text><text x="2026.5" y="1155.9" font-size="23.5" letter-spacing="0.83" fill="#7d6585" style="">Deutschland</text><text x="2440.1" y="1062.2" font-size="23.5" letter-spacing="0.30" fill="#7d6585" style="">Беларусь</text><text x="2511.7" y="759.8" font-size="23.5" letter-spacing="-0.80" fill="#3b3b3b" style="">Санкт-</text><text x="2490.3" y="786.3" font-size="23.5" letter-spacing="-0.19" fill="#3b3b3b" style="">Петербург</text><text x="2672.7" y="1000.6" font-size="23.5" letter-spacing="-0.35" fill="#3b3b3b" style="">Москва</text><text x="3444.4" y="1137.5" font-size="23.5" letter-spacing="-1.80" fill="#3b3b3b" style="">Аста</text><text x="2529.0" y="1201.1" font-size="23.5" letter-spacing="-0.81" fill="#3b3b3b" style="">Київ</text><text x="2586.0" y="1258.1" font-size="23.5" letter-spacing="0.79" fill="#7d6585" style="">Україна</text><text x="2468.4" y="1280.9" font-size="23.5" letter-spacing="-0.55" fill="#3b3b3b" style="">Chișinău</text><text x="2360.3" y="1336.6" font-size="23.5" letter-spacing="0.56" fill="#7d6585" style="">România</text><text x="2402.3" y="1404.5" font-size="23.5" letter-spacing="-0.28" fill="#3b3b3b" style="">București</text><text x="2378.0" y="1438.0" font-size="23.5" letter-spacing="0.69" fill="#7d6585" style="">България</text><text x="2473.0" y="1472.9" font-size="23.5" letter-spacing="0.29" fill="#3b3b3b" style="">İstanbul</text><text x="2764.8" y="1453.3" font-size="23.5" letter-spacing="-1.44" fill="#7d6585" style="">საქართველო</text><text x="3306.6" y="1269.5" font-size="23.5" letter-spacing="1.04" fill="#7d6585" style="">Қазақстан</text><text x="1884.7" y="1218.4" font-size="23.5" letter-spacing="-0.93" fill="#3b3b3b" style="">Paris</text><text x="1862.8" y="1306.7" font-size="23.5" letter-spacing="-0.29" fill="#7d6585" style="">France</text><text x="2176.6" y="1208.0" font-size="23.5" letter-spacing="-0.28" fill="#7d6585" style="">Česko</text><text x="2246.3" y="1245.4" font-size="23.5" letter-spacing="0.44" fill="#7d6585" style="">Slovensko</text><text x="2213.1" y="1296.4" font-size="23.5" letter-spacing="0.67" fill="#7d6585" style="">Magyarország</text><text x="2231.8" y="1340.7" font-size="23.5" letter-spacing="-0.39" fill="#3b3b3b" style="">Zagreb</text><text x="2151.7" y="1386.3" font-size="23.5" letter-spacing="0.74" fill="#7d6585" style="">Hrvatska</text><text x="2295.2" y="1394.6" font-size="23.5" letter-spacing="0.52" fill="#7d6585" style="">Србија</text><text x="1854.5" y="1463.0" font-size="23.5" letter-spacing="-0.43" fill="#3b3b3b" style="">Barcelona</text><text x="2150.9" y="1469.2" font-size="23.5" letter-spacing="1.27" fill="#7d6585" style="">Italia</text></g><circle cx="2099" cy="793.5" r="5.2" fill="#f4f2ee" stroke="#4a4a4a" stroke-width="2"/><circle cx="2099" cy="793.5" r="2" fill="#4a4a4a"/><circle cx="2267.8" cy="821.7" r="5.2" fill="#f4f2ee" stroke="#4a4a4a" stroke-width="2"/><circle cx="2267.8" cy="821.7" r="2" fill="#4a4a4a"/><circle cx="2423.7" cy="783.2" r="5.2" fill="#f4f2ee" stroke="#4a4a4a" stroke-width="2"/><circle cx="2423.7" cy="783.2" r="2" fill="#4a4a4a"/><circle cx="2159.2" cy="1097.9" r="5.2" fill="#f4f2ee" stroke="#4a4a4a" stroke-width="2"/><circle cx="2159.2" cy="1097.9" r="2" fill="#4a4a4a"/><circle cx="1853.2" cy="1135.6" r="5.2" fill="#f4f2ee" stroke="#4a4a4a" stroke-width="2"/><circle cx="1853.2" cy="1135.6" r="2" fill="#4a4a4a"/><circle cx="2711.5" cy="973.3" r="5.2" fill="#f4f2ee" stroke="#4a4a4a" stroke-width="2"/><circle cx="2711.5" cy="973.3" r="2" fill="#4a4a4a"/><circle cx="3480.9" cy="1149.8" r="5.2" fill="#f4f2ee" stroke="#4a4a4a" stroke-width="2"/><circle cx="3480.9" cy="1149.8" r="2" fill="#4a4a4a"/><circle cx="2549.6" cy="1173.7" r="5.2" fill="#f4f2ee" stroke="#4a4a4a" stroke-width="2"/><circle cx="2549.6" cy="1173.7" r="2" fill="#4a4a4a"/><circle cx="2511.7" cy="1292.3" r="5.2" fill="#f4f2ee" stroke="#4a4a4a" stroke-width="2"/><circle cx="2511.7" cy="1292.3" r="2" fill="#4a4a4a"/><circle cx="2449.3" cy="1375.7" r="5.2" fill="#f4f2ee" stroke="#4a4a4a" stroke-width="2"/><circle cx="2449.3" cy="1375.7" r="2" fill="#4a4a4a"/><circle cx="1909.6" cy="1229.6" r="5.2" fill="#f4f2ee" stroke="#4a4a4a" stroke-width="2"/><circle cx="1909.6" cy="1229.6" r="2" fill="#4a4a4a"/><circle cx="2219.3" cy="1332.4" r="5.2" fill="#f4f2ee" stroke="#4a4a4a" stroke-width="2"/><circle cx="2219.3" cy="1332.4" r="2" fill="#4a4a4a"/><circle cx="2083.7" cy="1059.7" r="4" fill="#f4f2ee" stroke="#8a8a8a" stroke-width="1.6"/><circle cx="1905.5" cy="1471.3" r="4" fill="#f4f2ee" stroke="#8a8a8a" stroke-width="1.6"/><circle cx="645.9" cy="1198.2" r="7.3" fill="none" stroke="#a48fae" stroke-width="2" stroke-opacity="0.65"/><circle cx="2056" cy="1078" r="14" fill="#7bd88a" stroke="#1e2433" stroke-width="4"/></svg><div style="position:absolute;left:20px;top:20px;width:64px;height:124px;border:2px solid rgba(0,0,0,0.2);border-radius:8px;background-clip:padding-box"></div><div style="position:absolute;left:24px;top:24px;width:60px;height:120px;background:#fff;border-radius:5px"></div><div style="position:absolute;left:24px;top:83px;width:60px;height:2px;background:#cccccc"></div><svg style="position:absolute;left:24px;top:24px;width:60px;height:120px" viewBox="0 0 60 120"><path d="M17 34h25M29.5 21.5v25M17 92h25" stroke="#000" stroke-width="6"/></svg><div style="position:absolute;right:0;bottom:0;height:34px;padding:0 10px 0 10px;background:rgba(255,255,255,0.8);font:24px/34px 'Liberation Sans',sans-serif;color:#333;white-space:nowrap"><svg style="display:inline-block;vertical-align:-2px;margin-right:8px" width="28" height="20" viewBox="0 0 12 8"><path fill="#4C7BE1" d="M0 0h12v4H0z"/><path fill="#FFD500" d="M0 4h12v3H0z"/><path fill="#E0BC00" d="M0 7h12v1H0z"/></svg><span style="color:#0078a8">Leaflet</span> <span>|</span> © <span style="color:#0078a8">OpenStreetMap</span> contributors</div></div></div>
<div class="r" style="left:577px;top:1577px;width:954px;height:695px;border-radius:24px;background:#131318;box-shadow:inset 0 0 0 2px #30313a"></div>
<div class="r" style="left:1579px;top:1577px;width:954px;height:695px;border-radius:24px;background:#131318;box-shadow:inset 0 0 0 2px #30313a"></div>
<div class="r" style="left:2582px;top:1577px;width:954px;height:695px;border-radius:24px;background:#131318;box-shadow:inset 0 0 0 2px #30313a"></div>
<div class="t" style="left:627.0px;top:1625.8px;font-size:49.9px;line-height:49.9px;letter-spacing:-3.53px;color:#f8fafc;font-weight:700;">Connected Agents (1)</div>
<div class="t" style="left:627.0px;top:1730.0px;font-size:33.1px;line-height:33.1px;letter-spacing:-0.46px;color:#f8fafc;font-weight:400;-webkit-text-stroke:0.7px #f8fafc">MacDesk1.local</div>
<div class="t" style="left:627.0px;top:1772.6px;font-size:25.0px;line-height:25.0px;letter-spacing:0.03px;color:#94a0b4;font-weight:400;">Last seen: less than a minute ago</div>
<div class="r" style="left:1364.5px;top:1740px;width:116.20000000000005px;height:44px;border-radius:22.0px;background:#7bd88a"></div>
<div class="t" style="left:1385.0px;top:1749.5px;font-size:25.4px;line-height:25.4px;letter-spacing:0.04px;color:#ffffff;font-weight:700;">online</div>
<div class="t" style="left:1629.5px;top:1626.5px;font-size:49.9px;line-height:49.9px;letter-spacing:-3.65px;color:#f8fafc;font-weight:700;">System Health Summary</div>
<div class="t" style="left:1678.6px;top:1728.8px;font-size:24.5px;line-height:24.5px;letter-spacing:0.00px;color:#a0a9b8;font-weight:400;">100%</div>
<div class="t" style="left:1692.3px;top:1796.5px;font-size:24.5px;line-height:24.5px;letter-spacing:0.00px;color:#a0a9b8;font-weight:400;">75%</div>
<div class="t" style="left:1692.3px;top:1872.7px;font-size:24.5px;line-height:24.5px;letter-spacing:0.00px;color:#a0a9b8;font-weight:400;">50%</div>
<div class="t" style="left:1692.3px;top:1948.6px;font-size:24.5px;line-height:24.5px;letter-spacing:0.00px;color:#a0a9b8;font-weight:400;">25%</div>
<div class="t" style="left:1705.9px;top:2024.5px;font-size:24.5px;line-height:24.5px;letter-spacing:0.00px;color:#a0a9b8;font-weight:400;">0%</div>
<div class="t" style="left:2368.6px;top:1728.1px;font-size:24.5px;line-height:24.5px;letter-spacing:0.00px;color:#a0a9b8;font-weight:400;">40ms</div>
<div class="t" style="left:2368.6px;top:1796.0px;font-size:24.5px;line-height:24.5px;letter-spacing:0.00px;color:#a0a9b8;font-weight:400;">30ms</div>
<div class="t" style="left:2368.6px;top:1871.7px;font-size:24.5px;line-height:24.5px;letter-spacing:0.00px;color:#a0a9b8;font-weight:400;">20ms</div>
<div class="t" style="left:2368.6px;top:1947.6px;font-size:24.5px;line-height:24.5px;letter-spacing:0.00px;color:#a0a9b8;font-weight:400;">10ms</div>
<div class="t" style="left:2368.6px;top:2023.3px;font-size:24.5px;line-height:24.5px;letter-spacing:0.00px;color:#a0a9b8;font-weight:400;">0ms</div>
<div class="r" style="left:1817.5px;top:2023.3px;width:111.79999999999995px;height:12.700000000000045px;background:#7f9fea"></div>
<div class="r" style="left:1937.3px;top:1836px;width:112.00000000000023px;height:200px;background:#7ede8b"></div>
<div class="r" style="left:2057.3px;top:1935px;width:112.0px;height:101px;background:#e3c486"></div>
<div class="r" style="left:2177.3px;top:1738px;width:112.0px;height:298px;background:#ab80e0"></div>
<div class="t" style="left:1974.0px;top:2049.0px;font-size:24.7px;line-height:24.7px;letter-spacing:-1.15px;color:#a0a9b8;font-weight:400;">MacDesk1.local</div>
<div class="r" style="left:1696px;top:2134px;width:28px;height:20.5px;background:#7f9fea"></div>
<div class="t" style="left:1733.7px;top:2124.1px;font-size:32.0px;line-height:32.0px;letter-spacing:-0.61px;color:#7f9fea;font-weight:400;">CPU Usage</div>
<div class="r" style="left:1918px;top:2134px;width:28px;height:20.5px;background:#7ede8b"></div>
<div class="t" style="left:1956.0px;top:2124.1px;font-size:32.0px;line-height:32.0px;letter-spacing:0.09px;color:#7ede8b;font-weight:400;">Memory Usage</div>
<div class="r" style="left:2194px;top:2134px;width:28px;height:20.5px;background:#e3c486"></div>
<div class="t" style="left:2231.6px;top:2124.1px;font-size:32.0px;line-height:32.0px;letter-spacing:-0.21px;color:#e3c486;font-weight:400;">Disk Usage</div>
<div class="r" style="left:1970px;top:2182px;width:28px;height:20.5px;background:#ab80e0"></div>
<div class="t" style="left:2007.6px;top:2171.6px;font-size:32.0px;line-height:32.0px;letter-spacing:0.08px;color:#ab80e0;font-weight:400;">Latency</div>
<svg class="i" style="left:2631.9px;top:1630px;width:40.4px;height:40.4px;" viewBox="0 0 24 24" fill="none" stroke="#f8fafc" stroke-width="2" stroke-linecap="round" stroke-linejoin="round"><rect x="16" y="16" width="6" height="6" rx="1"/><rect x="2" y="16" width="6" height="6" rx="1"/><rect x="9" y="2" width="6" height="6" rx="1"/><path d="M5 16v-3a1 1 0 0 1 1-1h12a1 1 0 0 1 1 1v3"/><path d="M12 12V8"/></svg>
<div class="t" style="left:2689.0px;top:1625.8px;font-size:49.9px;line-height:49.9px;letter-spacing:-3.86px;color:#f8fafc;font-weight:700;">Network Topology Summary</div>
<div class="r" style="left:2631px;top:1722px;width:854px;height:155px;border-radius:24px;background:#16161c;box-shadow:inset 0 0 0 2px #30313a"></div>
<svg class="i" style="left:2657.6px;top:1753px;width:32.7px;height:32.7px;" viewBox="0 0 24 24" fill="none" stroke="#8f99ab" stroke-width="2" stroke-linecap="round" stroke-linejoin="round"><circle cx="12" cy="12" r="10"/><path d="M12 2a14.5 14.5 0 0 0 0 20 14.5 14.5 0 0 0 0-20"/><path d="M2 12h20"/></svg>
<div class="r" style="left:2692px;top:1746px;width:195px;height:49px;background:#17171c"></div>
<div class="r" style="left:2706px;top:1761px;width:38px;height:20px;border-radius:10px;background:#606066;filter:blur(6px)"></div>
<div class="r" style="left:2748px;top:1762px;width:34px;height:18px;border-radius:9px;background:#55565c;filter:blur(6px)"></div>
<div class="r" style="left:2786px;top:1760px;width:48px;height:20px;border-radius:10px;background:#626268;filter:blur(6px)"></div>
<div class="r" style="left:2838px;top:1760px;width:36px;height:20px;border-radius:10px;background:#67676d;filter:blur(6px)"></div>
<div class="r" style="left:2892px;top:1748px;width:145.4px;height:43.7px;border-radius:22px;background:#222329"></div>
<div class="t" style="left:2914.5px;top:1757.6px;font-size:24.0px;line-height:24.0px;letter-spacing:-0.14px;color:#f8fafc;font-weight:700;">1 Agents</div>
<div class="t" style="left:2658.5px;top:1816.0px;font-size:27.6px;line-height:27.6px;letter-spacing:0.24px;color:#5a85e6;font-weight:400;">MacDesk1.local</div>
<div class="r" style="left:3343.6px;top:1808px;width:116.20000000000027px;height:43.40000000000009px;border-radius:21.700000000000045px;background:#7bd88a"></div>
<div class="t" style="left:3364.0px;top:1817.5px;font-size:25.4px;line-height:25.4px;letter-spacing:0.24px;color:#ffffff;font-weight:700;">online</div>
</body></html>
